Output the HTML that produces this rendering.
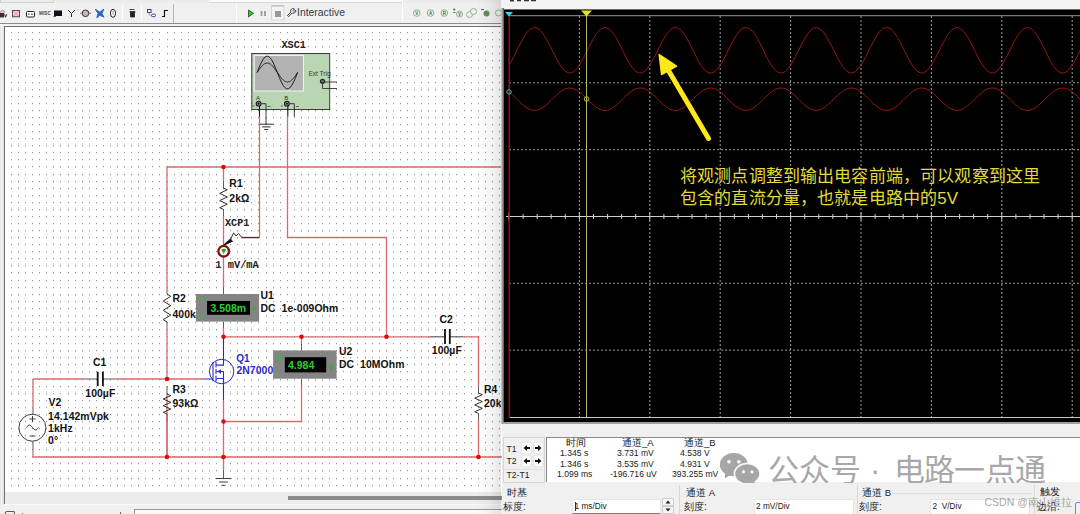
<!DOCTYPE html>
<html><head><meta charset="utf-8">
<style>
*{box-sizing:border-box}
html,body{margin:0;padding:0}
body{width:1080px;height:514px;overflow:hidden;position:relative;background:#f0f0f0;font-family:"Liberation Sans",sans-serif;color:#111}
.a{position:absolute}
.sep{position:absolute;top:5px;width:1px;height:16px;background:#c4c4c4;border-right:1px solid #fff}
.cn{font-family:"Liberation Sans",sans-serif}
.tbl{position:absolute;font-size:8.6px;color:#222;white-space:nowrap}
</style></head>
<body>
<!-- top strip -->
<div class="a" style="left:0;top:0;width:502px;height:4px;background:#ececec"></div>
<div class="a" style="left:0;top:0;width:54px;height:3px;border:1px solid #d0d0d0;border-top:none"></div>
<div class="a" style="left:209px;top:0;width:194px;height:2.5px;background:#fafafa;border-bottom:1px solid #d8d8d8;border-right:1px solid #d8d8d8"></div>
<!-- toolbar -->
<div class="a" style="left:0;top:3px;width:502px;height:20px;background:#f0f0f0"></div>
<div class="sep" style="left:122px"></div>
<div class="sep" style="left:141px"></div>
<div class="a" style="left:173px;top:4px;width:1px;height:19px;background:#b8b8b8"></div>
<div class="a" style="left:236px;top:4px;width:1px;height:19px;background:#fff"></div>
<div class="sep" style="left:402px;top:0;height:22px"></div>
<div class="a" style="left:0;top:22.5px;width:502px;height:1.2px;background:#8c8c8c"></div>
<div class="a" style="left:0;top:24px;width:502px;height:2px;background:#f4f4f4"></div>
<!-- toolbar icons -->
<svg class="a" style="left:0;top:0" width="502" height="23" viewBox="0 0 502 23">
  <path d="M0.3 12.5Q2.5 8.5 5 12.5" fill="none" stroke="#d85a5a" stroke-width="1"/><path d="M0 12.8H4.2V17.5H0Z" fill="#333"/><path d="M4.6 14.2L5.6 17.2L6.8 14.2" fill="none" stroke="#333" stroke-width="1"/>
  <rect x="12.5" y="10.5" width="7" height="6.2" fill="#f6d6de" stroke="#5a4848" stroke-width="1"/>
  <path d="M13.2 11.2L18.8 16M18.8 11.2L13.2 16" stroke="#e48a9a" stroke-width="1"/>
  <rect x="26.5" y="11.5" width="8" height="5.5" rx="1" fill="#fff" stroke="#222" stroke-width="1"/>
  <path d="M28 14.2h1.5M31 14.2h2" stroke="#222" stroke-width="0.9"/>
  <text x="39" y="15" font-size="4.6" font-weight="bold" fill="#444" font-family="Liberation Sans" letter-spacing="0.1">MISC</text>
  <rect x="54" y="10.5" width="8" height="5.5" fill="#111"/><path d="M53.5 16.5H56" stroke="#1a7060" stroke-width="1"/>
  <path d="M68 10L71.5 13.5L75 10M71.5 13.5V17" fill="none" stroke="#333" stroke-width="1"/>
  <circle cx="85.5" cy="13.3" r="3.3" fill="#bbb" stroke="#333" stroke-width="1"/><path d="M80 13.3H82.2M88.8 13.3H91" stroke="#d04040" stroke-width="0.9"/>
  <path d="M95.5 9.5L100 12.5L103.5 9.5L101.8 13.5L103.8 17L99.5 15L97 17.5L98.2 13.2Z" fill="#3566b8" stroke="#3566b8" stroke-width="1.2" stroke-linejoin="round"/>
  <ellipse cx="113" cy="13.3" rx="2.6" ry="4" fill="#fff" stroke="#222" stroke-width="1"/><path d="M113 11.5V15" stroke="#222" stroke-width="0.9" stroke-dasharray="1 1"/>
  <path d="M129.5 9.5h5M130 11.5h5v1h-5zM130.5 13h4v4h-4z" fill="#222" stroke="#222" stroke-width="0.8"/>
  <rect x="147.5" y="9.5" width="3.5" height="3" fill="#fff" stroke="#3838a0" stroke-width="1"/><rect x="151.5" y="14.2" width="4" height="2.4" rx="1" fill="#fff" stroke="#3838a0" stroke-width="1"/>
  <path d="M149 12.5V15H151.5" fill="none" stroke="#889" stroke-width="0.6"/>
  <path d="M162 16.5H164.5V10.5H168" fill="none" stroke="#111" stroke-width="1.2"/>
  <path d="M248.5 10L253.5 13.3L248.5 17Z" fill="#2ec42e" stroke="#0f4010" stroke-width="0.7"/>
  <path d="M261.5 11V16M265 11V16" stroke="#9a9a9a" stroke-width="1.8"/>
  <rect x="271.5" y="5.5" width="12.5" height="14.5" fill="#f3f3f3" stroke="#d6d6d6" stroke-width="1"/>
  <path d="M271.5 6H284" stroke="#bfbfbf" stroke-width="1.2"/>
  <rect x="275" y="11" width="6" height="6" fill="#999"/>
  <path d="M287.5 15.5L291 12L290.5 10L292.5 8.5L294.5 9L293 10.5L294 11.5L295.5 10L296 11.5L294 13.2L292.2 13L288.8 16.5Z" fill="#fff" stroke="#333" stroke-width="0.9"/>
  <text x="297" y="16" font-size="10.4" fill="#3a3a46" font-family="Liberation Sans">Interactive</text>
  <g fill="#eef3ee" stroke="#86a886" stroke-width="0.9">
    <circle cx="416.8" cy="13" r="3.3"/><circle cx="430.5" cy="13" r="3.3"/><circle cx="444.3" cy="13" r="3.3"/>
    <circle cx="459.5" cy="14" r="3"/><circle cx="469.5" cy="14.5" r="3"/><circle cx="473.5" cy="11.5" r="3"/>
    <circle cx="498.5" cy="13" r="3"/>
  </g>
  <g font-size="4.5" font-family="Liberation Sans" font-weight="bold" fill="#3f6a3f" text-anchor="middle">
    <text x="416.8" y="14.7">V</text><text x="430.5" y="14.7">A</text><text x="444.3" y="14.7">R</text><text x="459.5" y="15.7">V</text>
  </g>
  <path d="M453 9.5h2.5M454.2 8.3v2.5M453 12.5h2.5" stroke="#3a8a3a" stroke-width="0.9"/>
  <circle cx="486.5" cy="13.5" r="3" fill="#6a8a5a"/><path d="M481 9.6h3" stroke="#333" stroke-width="0.8"/>
</svg>

<!-- canvas -->
<div class="a" style="left:4px;top:26px;width:498px;height:466px;background:#fff;border-left:1.2px solid #707070;border-top:1.2px solid #707070"></div>
<div class="a" style="left:0;top:26px;width:4px;height:488px;background:#e4e4e4"></div>
<div class="a" style="left:1px;top:26px;width:1px;height:480px;background:#f8f8f8"></div>
<svg class="a" style="left:0;top:0" width="502" height="492" viewBox="0 0 502 492">
  <defs>
    <pattern id="dots" x="7.965" y="28.965" width="7.07" height="7.07" patternUnits="userSpaceOnUse">
      <rect x="2.935" y="2.935" width="1.2" height="1.2" fill="#8a8a8a"/>
    </pattern>
    <clipPath id="cv"><rect x="5.3" y="27.3" width="497" height="464.7"/></clipPath>
  </defs>
  <g clip-path="url(#cv)">
    <path d="M11 32h1v1.15h-1zm7 0h1v1.15h-1zm7 0h1v1.15h-1zm7 0h1v1.15h-1zm7 0h1v1.15h-1zm7 0h1v1.15h-1zm7 0h1v1.15h-1zm7 0h1v1.15h-1zm8 0h1v1.15h-1zm7 0h1v1.15h-1zm7 0h1v1.15h-1zm7 0h1v1.15h-1zm7 0h1v1.15h-1zm7 0h1v1.15h-1zm7 0h1v1.15h-1zm7 0h1v1.15h-1zm7 0h1v1.15h-1zm7 0h1v1.15h-1zm7 0h1v1.15h-1zm7 0h1v1.15h-1zm7 0h1v1.15h-1zm7 0h1v1.15h-1zm8 0h1v1.15h-1zm7 0h1v1.15h-1zm7 0h1v1.15h-1zm7 0h1v1.15h-1zm7 0h1v1.15h-1zm7 0h1v1.15h-1zm7 0h1v1.15h-1zm7 0h1v1.15h-1zm7 0h1v1.15h-1zm7 0h1v1.15h-1zm7 0h1v1.15h-1zm7 0h1v1.15h-1zm7 0h1v1.15h-1zm7 0h1v1.15h-1zm8 0h1v1.15h-1zm7 0h1v1.15h-1zm7 0h1v1.15h-1zm7 0h1v1.15h-1zm7 0h1v1.15h-1zm7 0h1v1.15h-1zm7 0h1v1.15h-1zm7 0h1v1.15h-1zm7 0h1v1.15h-1zm7 0h1v1.15h-1zm7 0h1v1.15h-1zm7 0h1v1.15h-1zm7 0h1v1.15h-1zm7 0h1v1.15h-1zm8 0h1v1.15h-1zm7 0h1v1.15h-1zm7 0h1v1.15h-1zm7 0h1v1.15h-1zm7 0h1v1.15h-1zm7 0h1v1.15h-1zm7 0h1v1.15h-1zm7 0h1v1.15h-1zm7 0h1v1.15h-1zm7 0h1v1.15h-1zm7 0h1v1.15h-1zm7 0h1v1.15h-1zm7 0h1v1.15h-1zm7 0h1v1.15h-1zm8 0h1v1.15h-1zm7 0h1v1.15h-1zm7 0h1v1.15h-1zm7 0h1v1.15h-1zm7 0h1v1.15h-1zm7 0h1v1.15h-1zM11 39h1v1.15h-1zm7 0h1v1.15h-1zm7 0h1v1.15h-1zm7 0h1v1.15h-1zm7 0h1v1.15h-1zm7 0h1v1.15h-1zm7 0h1v1.15h-1zm7 0h1v1.15h-1zm8 0h1v1.15h-1zm7 0h1v1.15h-1zm7 0h1v1.15h-1zm7 0h1v1.15h-1zm7 0h1v1.15h-1zm7 0h1v1.15h-1zm7 0h1v1.15h-1zm7 0h1v1.15h-1zm7 0h1v1.15h-1zm7 0h1v1.15h-1zm7 0h1v1.15h-1zm7 0h1v1.15h-1zm7 0h1v1.15h-1zm7 0h1v1.15h-1zm8 0h1v1.15h-1zm7 0h1v1.15h-1zm7 0h1v1.15h-1zm7 0h1v1.15h-1zm7 0h1v1.15h-1zm7 0h1v1.15h-1zm7 0h1v1.15h-1zm7 0h1v1.15h-1zm7 0h1v1.15h-1zm7 0h1v1.15h-1zm7 0h1v1.15h-1zm7 0h1v1.15h-1zm7 0h1v1.15h-1zm7 0h1v1.15h-1zm8 0h1v1.15h-1zm7 0h1v1.15h-1zm7 0h1v1.15h-1zm7 0h1v1.15h-1zm7 0h1v1.15h-1zm7 0h1v1.15h-1zm7 0h1v1.15h-1zm7 0h1v1.15h-1zm7 0h1v1.15h-1zm7 0h1v1.15h-1zm7 0h1v1.15h-1zm7 0h1v1.15h-1zm7 0h1v1.15h-1zm7 0h1v1.15h-1zm8 0h1v1.15h-1zm7 0h1v1.15h-1zm7 0h1v1.15h-1zm7 0h1v1.15h-1zm7 0h1v1.15h-1zm7 0h1v1.15h-1zm7 0h1v1.15h-1zm7 0h1v1.15h-1zm7 0h1v1.15h-1zm7 0h1v1.15h-1zm7 0h1v1.15h-1zm7 0h1v1.15h-1zm7 0h1v1.15h-1zm7 0h1v1.15h-1zm8 0h1v1.15h-1zm7 0h1v1.15h-1zm7 0h1v1.15h-1zm7 0h1v1.15h-1zm7 0h1v1.15h-1zm7 0h1v1.15h-1zM11 46h1v1.15h-1zm7 0h1v1.15h-1zm7 0h1v1.15h-1zm7 0h1v1.15h-1zm7 0h1v1.15h-1zm7 0h1v1.15h-1zm7 0h1v1.15h-1zm7 0h1v1.15h-1zm8 0h1v1.15h-1zm7 0h1v1.15h-1zm7 0h1v1.15h-1zm7 0h1v1.15h-1zm7 0h1v1.15h-1zm7 0h1v1.15h-1zm7 0h1v1.15h-1zm7 0h1v1.15h-1zm7 0h1v1.15h-1zm7 0h1v1.15h-1zm7 0h1v1.15h-1zm7 0h1v1.15h-1zm7 0h1v1.15h-1zm7 0h1v1.15h-1zm8 0h1v1.15h-1zm7 0h1v1.15h-1zm7 0h1v1.15h-1zm7 0h1v1.15h-1zm7 0h1v1.15h-1zm7 0h1v1.15h-1zm7 0h1v1.15h-1zm7 0h1v1.15h-1zm7 0h1v1.15h-1zm7 0h1v1.15h-1zm7 0h1v1.15h-1zm7 0h1v1.15h-1zm7 0h1v1.15h-1zm7 0h1v1.15h-1zm8 0h1v1.15h-1zm7 0h1v1.15h-1zm7 0h1v1.15h-1zm7 0h1v1.15h-1zm7 0h1v1.15h-1zm7 0h1v1.15h-1zm7 0h1v1.15h-1zm7 0h1v1.15h-1zm7 0h1v1.15h-1zm7 0h1v1.15h-1zm7 0h1v1.15h-1zm7 0h1v1.15h-1zm7 0h1v1.15h-1zm7 0h1v1.15h-1zm8 0h1v1.15h-1zm7 0h1v1.15h-1zm7 0h1v1.15h-1zm7 0h1v1.15h-1zm7 0h1v1.15h-1zm7 0h1v1.15h-1zm7 0h1v1.15h-1zm7 0h1v1.15h-1zm7 0h1v1.15h-1zm7 0h1v1.15h-1zm7 0h1v1.15h-1zm7 0h1v1.15h-1zm7 0h1v1.15h-1zm7 0h1v1.15h-1zm8 0h1v1.15h-1zm7 0h1v1.15h-1zm7 0h1v1.15h-1zm7 0h1v1.15h-1zm7 0h1v1.15h-1zm7 0h1v1.15h-1zM11 53h1v1.15h-1zm7 0h1v1.15h-1zm7 0h1v1.15h-1zm7 0h1v1.15h-1zm7 0h1v1.15h-1zm7 0h1v1.15h-1zm7 0h1v1.15h-1zm7 0h1v1.15h-1zm8 0h1v1.15h-1zm7 0h1v1.15h-1zm7 0h1v1.15h-1zm7 0h1v1.15h-1zm7 0h1v1.15h-1zm7 0h1v1.15h-1zm7 0h1v1.15h-1zm7 0h1v1.15h-1zm7 0h1v1.15h-1zm7 0h1v1.15h-1zm7 0h1v1.15h-1zm7 0h1v1.15h-1zm7 0h1v1.15h-1zm7 0h1v1.15h-1zm8 0h1v1.15h-1zm7 0h1v1.15h-1zm7 0h1v1.15h-1zm7 0h1v1.15h-1zm7 0h1v1.15h-1zm7 0h1v1.15h-1zm7 0h1v1.15h-1zm7 0h1v1.15h-1zm7 0h1v1.15h-1zm7 0h1v1.15h-1zm7 0h1v1.15h-1zm7 0h1v1.15h-1zm7 0h1v1.15h-1zm7 0h1v1.15h-1zm8 0h1v1.15h-1zm7 0h1v1.15h-1zm7 0h1v1.15h-1zm7 0h1v1.15h-1zm7 0h1v1.15h-1zm7 0h1v1.15h-1zm7 0h1v1.15h-1zm7 0h1v1.15h-1zm7 0h1v1.15h-1zm7 0h1v1.15h-1zm7 0h1v1.15h-1zm7 0h1v1.15h-1zm7 0h1v1.15h-1zm7 0h1v1.15h-1zm8 0h1v1.15h-1zm7 0h1v1.15h-1zm7 0h1v1.15h-1zm7 0h1v1.15h-1zm7 0h1v1.15h-1zm7 0h1v1.15h-1zm7 0h1v1.15h-1zm7 0h1v1.15h-1zm7 0h1v1.15h-1zm7 0h1v1.15h-1zm7 0h1v1.15h-1zm7 0h1v1.15h-1zm7 0h1v1.15h-1zm7 0h1v1.15h-1zm8 0h1v1.15h-1zm7 0h1v1.15h-1zm7 0h1v1.15h-1zm7 0h1v1.15h-1zm7 0h1v1.15h-1zm7 0h1v1.15h-1zM11 60h1v1.15h-1zm7 0h1v1.15h-1zm7 0h1v1.15h-1zm7 0h1v1.15h-1zm7 0h1v1.15h-1zm7 0h1v1.15h-1zm7 0h1v1.15h-1zm7 0h1v1.15h-1zm8 0h1v1.15h-1zm7 0h1v1.15h-1zm7 0h1v1.15h-1zm7 0h1v1.15h-1zm7 0h1v1.15h-1zm7 0h1v1.15h-1zm7 0h1v1.15h-1zm7 0h1v1.15h-1zm7 0h1v1.15h-1zm7 0h1v1.15h-1zm7 0h1v1.15h-1zm7 0h1v1.15h-1zm7 0h1v1.15h-1zm7 0h1v1.15h-1zm8 0h1v1.15h-1zm7 0h1v1.15h-1zm7 0h1v1.15h-1zm7 0h1v1.15h-1zm7 0h1v1.15h-1zm7 0h1v1.15h-1zm7 0h1v1.15h-1zm7 0h1v1.15h-1zm7 0h1v1.15h-1zm7 0h1v1.15h-1zm7 0h1v1.15h-1zm7 0h1v1.15h-1zm7 0h1v1.15h-1zm7 0h1v1.15h-1zm8 0h1v1.15h-1zm7 0h1v1.15h-1zm7 0h1v1.15h-1zm7 0h1v1.15h-1zm7 0h1v1.15h-1zm7 0h1v1.15h-1zm7 0h1v1.15h-1zm7 0h1v1.15h-1zm7 0h1v1.15h-1zm7 0h1v1.15h-1zm7 0h1v1.15h-1zm7 0h1v1.15h-1zm7 0h1v1.15h-1zm7 0h1v1.15h-1zm8 0h1v1.15h-1zm7 0h1v1.15h-1zm7 0h1v1.15h-1zm7 0h1v1.15h-1zm7 0h1v1.15h-1zm7 0h1v1.15h-1zm7 0h1v1.15h-1zm7 0h1v1.15h-1zm7 0h1v1.15h-1zm7 0h1v1.15h-1zm7 0h1v1.15h-1zm7 0h1v1.15h-1zm7 0h1v1.15h-1zm7 0h1v1.15h-1zm8 0h1v1.15h-1zm7 0h1v1.15h-1zm7 0h1v1.15h-1zm7 0h1v1.15h-1zm7 0h1v1.15h-1zm7 0h1v1.15h-1zM11 67h1v1.15h-1zm7 0h1v1.15h-1zm7 0h1v1.15h-1zm7 0h1v1.15h-1zm7 0h1v1.15h-1zm7 0h1v1.15h-1zm7 0h1v1.15h-1zm7 0h1v1.15h-1zm8 0h1v1.15h-1zm7 0h1v1.15h-1zm7 0h1v1.15h-1zm7 0h1v1.15h-1zm7 0h1v1.15h-1zm7 0h1v1.15h-1zm7 0h1v1.15h-1zm7 0h1v1.15h-1zm7 0h1v1.15h-1zm7 0h1v1.15h-1zm7 0h1v1.15h-1zm7 0h1v1.15h-1zm7 0h1v1.15h-1zm7 0h1v1.15h-1zm8 0h1v1.15h-1zm7 0h1v1.15h-1zm7 0h1v1.15h-1zm7 0h1v1.15h-1zm7 0h1v1.15h-1zm7 0h1v1.15h-1zm7 0h1v1.15h-1zm7 0h1v1.15h-1zm7 0h1v1.15h-1zm7 0h1v1.15h-1zm7 0h1v1.15h-1zm7 0h1v1.15h-1zm7 0h1v1.15h-1zm7 0h1v1.15h-1zm8 0h1v1.15h-1zm7 0h1v1.15h-1zm7 0h1v1.15h-1zm7 0h1v1.15h-1zm7 0h1v1.15h-1zm7 0h1v1.15h-1zm7 0h1v1.15h-1zm7 0h1v1.15h-1zm7 0h1v1.15h-1zm7 0h1v1.15h-1zm7 0h1v1.15h-1zm7 0h1v1.15h-1zm7 0h1v1.15h-1zm7 0h1v1.15h-1zm8 0h1v1.15h-1zm7 0h1v1.15h-1zm7 0h1v1.15h-1zm7 0h1v1.15h-1zm7 0h1v1.15h-1zm7 0h1v1.15h-1zm7 0h1v1.15h-1zm7 0h1v1.15h-1zm7 0h1v1.15h-1zm7 0h1v1.15h-1zm7 0h1v1.15h-1zm7 0h1v1.15h-1zm7 0h1v1.15h-1zm7 0h1v1.15h-1zm8 0h1v1.15h-1zm7 0h1v1.15h-1zm7 0h1v1.15h-1zm7 0h1v1.15h-1zm7 0h1v1.15h-1zm7 0h1v1.15h-1zM11 75h1v1.15h-1zm7 0h1v1.15h-1zm7 0h1v1.15h-1zm7 0h1v1.15h-1zm7 0h1v1.15h-1zm7 0h1v1.15h-1zm7 0h1v1.15h-1zm7 0h1v1.15h-1zm8 0h1v1.15h-1zm7 0h1v1.15h-1zm7 0h1v1.15h-1zm7 0h1v1.15h-1zm7 0h1v1.15h-1zm7 0h1v1.15h-1zm7 0h1v1.15h-1zm7 0h1v1.15h-1zm7 0h1v1.15h-1zm7 0h1v1.15h-1zm7 0h1v1.15h-1zm7 0h1v1.15h-1zm7 0h1v1.15h-1zm7 0h1v1.15h-1zm8 0h1v1.15h-1zm7 0h1v1.15h-1zm7 0h1v1.15h-1zm7 0h1v1.15h-1zm7 0h1v1.15h-1zm7 0h1v1.15h-1zm7 0h1v1.15h-1zm7 0h1v1.15h-1zm7 0h1v1.15h-1zm7 0h1v1.15h-1zm7 0h1v1.15h-1zm7 0h1v1.15h-1zm7 0h1v1.15h-1zm7 0h1v1.15h-1zm8 0h1v1.15h-1zm7 0h1v1.15h-1zm7 0h1v1.15h-1zm7 0h1v1.15h-1zm7 0h1v1.15h-1zm7 0h1v1.15h-1zm7 0h1v1.15h-1zm7 0h1v1.15h-1zm7 0h1v1.15h-1zm7 0h1v1.15h-1zm7 0h1v1.15h-1zm7 0h1v1.15h-1zm7 0h1v1.15h-1zm7 0h1v1.15h-1zm8 0h1v1.15h-1zm7 0h1v1.15h-1zm7 0h1v1.15h-1zm7 0h1v1.15h-1zm7 0h1v1.15h-1zm7 0h1v1.15h-1zm7 0h1v1.15h-1zm7 0h1v1.15h-1zm7 0h1v1.15h-1zm7 0h1v1.15h-1zm7 0h1v1.15h-1zm7 0h1v1.15h-1zm7 0h1v1.15h-1zm7 0h1v1.15h-1zm8 0h1v1.15h-1zm7 0h1v1.15h-1zm7 0h1v1.15h-1zm7 0h1v1.15h-1zm7 0h1v1.15h-1zm7 0h1v1.15h-1zM11 82h1v1.15h-1zm7 0h1v1.15h-1zm7 0h1v1.15h-1zm7 0h1v1.15h-1zm7 0h1v1.15h-1zm7 0h1v1.15h-1zm7 0h1v1.15h-1zm7 0h1v1.15h-1zm8 0h1v1.15h-1zm7 0h1v1.15h-1zm7 0h1v1.15h-1zm7 0h1v1.15h-1zm7 0h1v1.15h-1zm7 0h1v1.15h-1zm7 0h1v1.15h-1zm7 0h1v1.15h-1zm7 0h1v1.15h-1zm7 0h1v1.15h-1zm7 0h1v1.15h-1zm7 0h1v1.15h-1zm7 0h1v1.15h-1zm7 0h1v1.15h-1zm8 0h1v1.15h-1zm7 0h1v1.15h-1zm7 0h1v1.15h-1zm7 0h1v1.15h-1zm7 0h1v1.15h-1zm7 0h1v1.15h-1zm7 0h1v1.15h-1zm7 0h1v1.15h-1zm7 0h1v1.15h-1zm7 0h1v1.15h-1zm7 0h1v1.15h-1zm7 0h1v1.15h-1zm7 0h1v1.15h-1zm7 0h1v1.15h-1zm8 0h1v1.15h-1zm7 0h1v1.15h-1zm7 0h1v1.15h-1zm7 0h1v1.15h-1zm7 0h1v1.15h-1zm7 0h1v1.15h-1zm7 0h1v1.15h-1zm7 0h1v1.15h-1zm7 0h1v1.15h-1zm7 0h1v1.15h-1zm7 0h1v1.15h-1zm7 0h1v1.15h-1zm7 0h1v1.15h-1zm7 0h1v1.15h-1zm8 0h1v1.15h-1zm7 0h1v1.15h-1zm7 0h1v1.15h-1zm7 0h1v1.15h-1zm7 0h1v1.15h-1zm7 0h1v1.15h-1zm7 0h1v1.15h-1zm7 0h1v1.15h-1zm7 0h1v1.15h-1zm7 0h1v1.15h-1zm7 0h1v1.15h-1zm7 0h1v1.15h-1zm7 0h1v1.15h-1zm7 0h1v1.15h-1zm8 0h1v1.15h-1zm7 0h1v1.15h-1zm7 0h1v1.15h-1zm7 0h1v1.15h-1zm7 0h1v1.15h-1zm7 0h1v1.15h-1zM11 89h1v1.15h-1zm7 0h1v1.15h-1zm7 0h1v1.15h-1zm7 0h1v1.15h-1zm7 0h1v1.15h-1zm7 0h1v1.15h-1zm7 0h1v1.15h-1zm7 0h1v1.15h-1zm8 0h1v1.15h-1zm7 0h1v1.15h-1zm7 0h1v1.15h-1zm7 0h1v1.15h-1zm7 0h1v1.15h-1zm7 0h1v1.15h-1zm7 0h1v1.15h-1zm7 0h1v1.15h-1zm7 0h1v1.15h-1zm7 0h1v1.15h-1zm7 0h1v1.15h-1zm7 0h1v1.15h-1zm7 0h1v1.15h-1zm7 0h1v1.15h-1zm8 0h1v1.15h-1zm7 0h1v1.15h-1zm7 0h1v1.15h-1zm7 0h1v1.15h-1zm7 0h1v1.15h-1zm7 0h1v1.15h-1zm7 0h1v1.15h-1zm7 0h1v1.15h-1zm7 0h1v1.15h-1zm7 0h1v1.15h-1zm7 0h1v1.15h-1zm7 0h1v1.15h-1zm7 0h1v1.15h-1zm7 0h1v1.15h-1zm8 0h1v1.15h-1zm7 0h1v1.15h-1zm7 0h1v1.15h-1zm7 0h1v1.15h-1zm7 0h1v1.15h-1zm7 0h1v1.15h-1zm7 0h1v1.15h-1zm7 0h1v1.15h-1zm7 0h1v1.15h-1zm7 0h1v1.15h-1zm7 0h1v1.15h-1zm7 0h1v1.15h-1zm7 0h1v1.15h-1zm7 0h1v1.15h-1zm8 0h1v1.15h-1zm7 0h1v1.15h-1zm7 0h1v1.15h-1zm7 0h1v1.15h-1zm7 0h1v1.15h-1zm7 0h1v1.15h-1zm7 0h1v1.15h-1zm7 0h1v1.15h-1zm7 0h1v1.15h-1zm7 0h1v1.15h-1zm7 0h1v1.15h-1zm7 0h1v1.15h-1zm7 0h1v1.15h-1zm7 0h1v1.15h-1zm8 0h1v1.15h-1zm7 0h1v1.15h-1zm7 0h1v1.15h-1zm7 0h1v1.15h-1zm7 0h1v1.15h-1zm7 0h1v1.15h-1zM11 96h1v1.15h-1zm7 0h1v1.15h-1zm7 0h1v1.15h-1zm7 0h1v1.15h-1zm7 0h1v1.15h-1zm7 0h1v1.15h-1zm7 0h1v1.15h-1zm7 0h1v1.15h-1zm8 0h1v1.15h-1zm7 0h1v1.15h-1zm7 0h1v1.15h-1zm7 0h1v1.15h-1zm7 0h1v1.15h-1zm7 0h1v1.15h-1zm7 0h1v1.15h-1zm7 0h1v1.15h-1zm7 0h1v1.15h-1zm7 0h1v1.15h-1zm7 0h1v1.15h-1zm7 0h1v1.15h-1zm7 0h1v1.15h-1zm7 0h1v1.15h-1zm8 0h1v1.15h-1zm7 0h1v1.15h-1zm7 0h1v1.15h-1zm7 0h1v1.15h-1zm7 0h1v1.15h-1zm7 0h1v1.15h-1zm7 0h1v1.15h-1zm7 0h1v1.15h-1zm7 0h1v1.15h-1zm7 0h1v1.15h-1zm7 0h1v1.15h-1zm7 0h1v1.15h-1zm7 0h1v1.15h-1zm7 0h1v1.15h-1zm8 0h1v1.15h-1zm7 0h1v1.15h-1zm7 0h1v1.15h-1zm7 0h1v1.15h-1zm7 0h1v1.15h-1zm7 0h1v1.15h-1zm7 0h1v1.15h-1zm7 0h1v1.15h-1zm7 0h1v1.15h-1zm7 0h1v1.15h-1zm7 0h1v1.15h-1zm7 0h1v1.15h-1zm7 0h1v1.15h-1zm7 0h1v1.15h-1zm8 0h1v1.15h-1zm7 0h1v1.15h-1zm7 0h1v1.15h-1zm7 0h1v1.15h-1zm7 0h1v1.15h-1zm7 0h1v1.15h-1zm7 0h1v1.15h-1zm7 0h1v1.15h-1zm7 0h1v1.15h-1zm7 0h1v1.15h-1zm7 0h1v1.15h-1zm7 0h1v1.15h-1zm7 0h1v1.15h-1zm7 0h1v1.15h-1zm8 0h1v1.15h-1zm7 0h1v1.15h-1zm7 0h1v1.15h-1zm7 0h1v1.15h-1zm7 0h1v1.15h-1zm7 0h1v1.15h-1zM11 103h1v1.15h-1zm7 0h1v1.15h-1zm7 0h1v1.15h-1zm7 0h1v1.15h-1zm7 0h1v1.15h-1zm7 0h1v1.15h-1zm7 0h1v1.15h-1zm7 0h1v1.15h-1zm8 0h1v1.15h-1zm7 0h1v1.15h-1zm7 0h1v1.15h-1zm7 0h1v1.15h-1zm7 0h1v1.15h-1zm7 0h1v1.15h-1zm7 0h1v1.15h-1zm7 0h1v1.15h-1zm7 0h1v1.15h-1zm7 0h1v1.15h-1zm7 0h1v1.15h-1zm7 0h1v1.15h-1zm7 0h1v1.15h-1zm7 0h1v1.15h-1zm8 0h1v1.15h-1zm7 0h1v1.15h-1zm7 0h1v1.15h-1zm7 0h1v1.15h-1zm7 0h1v1.15h-1zm7 0h1v1.15h-1zm7 0h1v1.15h-1zm7 0h1v1.15h-1zm7 0h1v1.15h-1zm7 0h1v1.15h-1zm7 0h1v1.15h-1zm7 0h1v1.15h-1zm7 0h1v1.15h-1zm7 0h1v1.15h-1zm8 0h1v1.15h-1zm7 0h1v1.15h-1zm7 0h1v1.15h-1zm7 0h1v1.15h-1zm7 0h1v1.15h-1zm7 0h1v1.15h-1zm7 0h1v1.15h-1zm7 0h1v1.15h-1zm7 0h1v1.15h-1zm7 0h1v1.15h-1zm7 0h1v1.15h-1zm7 0h1v1.15h-1zm7 0h1v1.15h-1zm7 0h1v1.15h-1zm8 0h1v1.15h-1zm7 0h1v1.15h-1zm7 0h1v1.15h-1zm7 0h1v1.15h-1zm7 0h1v1.15h-1zm7 0h1v1.15h-1zm7 0h1v1.15h-1zm7 0h1v1.15h-1zm7 0h1v1.15h-1zm7 0h1v1.15h-1zm7 0h1v1.15h-1zm7 0h1v1.15h-1zm7 0h1v1.15h-1zm7 0h1v1.15h-1zm8 0h1v1.15h-1zm7 0h1v1.15h-1zm7 0h1v1.15h-1zm7 0h1v1.15h-1zm7 0h1v1.15h-1zm7 0h1v1.15h-1zM11 110h1v1.15h-1zm7 0h1v1.15h-1zm7 0h1v1.15h-1zm7 0h1v1.15h-1zm7 0h1v1.15h-1zm7 0h1v1.15h-1zm7 0h1v1.15h-1zm7 0h1v1.15h-1zm8 0h1v1.15h-1zm7 0h1v1.15h-1zm7 0h1v1.15h-1zm7 0h1v1.15h-1zm7 0h1v1.15h-1zm7 0h1v1.15h-1zm7 0h1v1.15h-1zm7 0h1v1.15h-1zm7 0h1v1.15h-1zm7 0h1v1.15h-1zm7 0h1v1.15h-1zm7 0h1v1.15h-1zm7 0h1v1.15h-1zm7 0h1v1.15h-1zm8 0h1v1.15h-1zm7 0h1v1.15h-1zm7 0h1v1.15h-1zm7 0h1v1.15h-1zm7 0h1v1.15h-1zm7 0h1v1.15h-1zm7 0h1v1.15h-1zm7 0h1v1.15h-1zm7 0h1v1.15h-1zm7 0h1v1.15h-1zm7 0h1v1.15h-1zm7 0h1v1.15h-1zm7 0h1v1.15h-1zm7 0h1v1.15h-1zm8 0h1v1.15h-1zm7 0h1v1.15h-1zm7 0h1v1.15h-1zm7 0h1v1.15h-1zm7 0h1v1.15h-1zm7 0h1v1.15h-1zm7 0h1v1.15h-1zm7 0h1v1.15h-1zm7 0h1v1.15h-1zm7 0h1v1.15h-1zm7 0h1v1.15h-1zm7 0h1v1.15h-1zm7 0h1v1.15h-1zm7 0h1v1.15h-1zm8 0h1v1.15h-1zm7 0h1v1.15h-1zm7 0h1v1.15h-1zm7 0h1v1.15h-1zm7 0h1v1.15h-1zm7 0h1v1.15h-1zm7 0h1v1.15h-1zm7 0h1v1.15h-1zm7 0h1v1.15h-1zm7 0h1v1.15h-1zm7 0h1v1.15h-1zm7 0h1v1.15h-1zm7 0h1v1.15h-1zm7 0h1v1.15h-1zm8 0h1v1.15h-1zm7 0h1v1.15h-1zm7 0h1v1.15h-1zm7 0h1v1.15h-1zm7 0h1v1.15h-1zm7 0h1v1.15h-1zM11 117h1v1.15h-1zm7 0h1v1.15h-1zm7 0h1v1.15h-1zm7 0h1v1.15h-1zm7 0h1v1.15h-1zm7 0h1v1.15h-1zm7 0h1v1.15h-1zm7 0h1v1.15h-1zm8 0h1v1.15h-1zm7 0h1v1.15h-1zm7 0h1v1.15h-1zm7 0h1v1.15h-1zm7 0h1v1.15h-1zm7 0h1v1.15h-1zm7 0h1v1.15h-1zm7 0h1v1.15h-1zm7 0h1v1.15h-1zm7 0h1v1.15h-1zm7 0h1v1.15h-1zm7 0h1v1.15h-1zm7 0h1v1.15h-1zm7 0h1v1.15h-1zm8 0h1v1.15h-1zm7 0h1v1.15h-1zm7 0h1v1.15h-1zm7 0h1v1.15h-1zm7 0h1v1.15h-1zm7 0h1v1.15h-1zm7 0h1v1.15h-1zm7 0h1v1.15h-1zm7 0h1v1.15h-1zm7 0h1v1.15h-1zm7 0h1v1.15h-1zm7 0h1v1.15h-1zm7 0h1v1.15h-1zm7 0h1v1.15h-1zm8 0h1v1.15h-1zm7 0h1v1.15h-1zm7 0h1v1.15h-1zm7 0h1v1.15h-1zm7 0h1v1.15h-1zm7 0h1v1.15h-1zm7 0h1v1.15h-1zm7 0h1v1.15h-1zm7 0h1v1.15h-1zm7 0h1v1.15h-1zm7 0h1v1.15h-1zm7 0h1v1.15h-1zm7 0h1v1.15h-1zm7 0h1v1.15h-1zm8 0h1v1.15h-1zm7 0h1v1.15h-1zm7 0h1v1.15h-1zm7 0h1v1.15h-1zm7 0h1v1.15h-1zm7 0h1v1.15h-1zm7 0h1v1.15h-1zm7 0h1v1.15h-1zm7 0h1v1.15h-1zm7 0h1v1.15h-1zm7 0h1v1.15h-1zm7 0h1v1.15h-1zm7 0h1v1.15h-1zm7 0h1v1.15h-1zm8 0h1v1.15h-1zm7 0h1v1.15h-1zm7 0h1v1.15h-1zm7 0h1v1.15h-1zm7 0h1v1.15h-1zm7 0h1v1.15h-1zM11 124h1v1.15h-1zm7 0h1v1.15h-1zm7 0h1v1.15h-1zm7 0h1v1.15h-1zm7 0h1v1.15h-1zm7 0h1v1.15h-1zm7 0h1v1.15h-1zm7 0h1v1.15h-1zm8 0h1v1.15h-1zm7 0h1v1.15h-1zm7 0h1v1.15h-1zm7 0h1v1.15h-1zm7 0h1v1.15h-1zm7 0h1v1.15h-1zm7 0h1v1.15h-1zm7 0h1v1.15h-1zm7 0h1v1.15h-1zm7 0h1v1.15h-1zm7 0h1v1.15h-1zm7 0h1v1.15h-1zm7 0h1v1.15h-1zm7 0h1v1.15h-1zm8 0h1v1.15h-1zm7 0h1v1.15h-1zm7 0h1v1.15h-1zm7 0h1v1.15h-1zm7 0h1v1.15h-1zm7 0h1v1.15h-1zm7 0h1v1.15h-1zm7 0h1v1.15h-1zm7 0h1v1.15h-1zm7 0h1v1.15h-1zm7 0h1v1.15h-1zm7 0h1v1.15h-1zm7 0h1v1.15h-1zm7 0h1v1.15h-1zm8 0h1v1.15h-1zm7 0h1v1.15h-1zm7 0h1v1.15h-1zm7 0h1v1.15h-1zm7 0h1v1.15h-1zm7 0h1v1.15h-1zm7 0h1v1.15h-1zm7 0h1v1.15h-1zm7 0h1v1.15h-1zm7 0h1v1.15h-1zm7 0h1v1.15h-1zm7 0h1v1.15h-1zm7 0h1v1.15h-1zm7 0h1v1.15h-1zm8 0h1v1.15h-1zm7 0h1v1.15h-1zm7 0h1v1.15h-1zm7 0h1v1.15h-1zm7 0h1v1.15h-1zm7 0h1v1.15h-1zm7 0h1v1.15h-1zm7 0h1v1.15h-1zm7 0h1v1.15h-1zm7 0h1v1.15h-1zm7 0h1v1.15h-1zm7 0h1v1.15h-1zm7 0h1v1.15h-1zm7 0h1v1.15h-1zm8 0h1v1.15h-1zm7 0h1v1.15h-1zm7 0h1v1.15h-1zm7 0h1v1.15h-1zm7 0h1v1.15h-1zm7 0h1v1.15h-1zM11 131h1v1.15h-1zm7 0h1v1.15h-1zm7 0h1v1.15h-1zm7 0h1v1.15h-1zm7 0h1v1.15h-1zm7 0h1v1.15h-1zm7 0h1v1.15h-1zm7 0h1v1.15h-1zm8 0h1v1.15h-1zm7 0h1v1.15h-1zm7 0h1v1.15h-1zm7 0h1v1.15h-1zm7 0h1v1.15h-1zm7 0h1v1.15h-1zm7 0h1v1.15h-1zm7 0h1v1.15h-1zm7 0h1v1.15h-1zm7 0h1v1.15h-1zm7 0h1v1.15h-1zm7 0h1v1.15h-1zm7 0h1v1.15h-1zm7 0h1v1.15h-1zm8 0h1v1.15h-1zm7 0h1v1.15h-1zm7 0h1v1.15h-1zm7 0h1v1.15h-1zm7 0h1v1.15h-1zm7 0h1v1.15h-1zm7 0h1v1.15h-1zm7 0h1v1.15h-1zm7 0h1v1.15h-1zm7 0h1v1.15h-1zm7 0h1v1.15h-1zm7 0h1v1.15h-1zm7 0h1v1.15h-1zm7 0h1v1.15h-1zm8 0h1v1.15h-1zm7 0h1v1.15h-1zm7 0h1v1.15h-1zm7 0h1v1.15h-1zm7 0h1v1.15h-1zm7 0h1v1.15h-1zm7 0h1v1.15h-1zm7 0h1v1.15h-1zm7 0h1v1.15h-1zm7 0h1v1.15h-1zm7 0h1v1.15h-1zm7 0h1v1.15h-1zm7 0h1v1.15h-1zm7 0h1v1.15h-1zm8 0h1v1.15h-1zm7 0h1v1.15h-1zm7 0h1v1.15h-1zm7 0h1v1.15h-1zm7 0h1v1.15h-1zm7 0h1v1.15h-1zm7 0h1v1.15h-1zm7 0h1v1.15h-1zm7 0h1v1.15h-1zm7 0h1v1.15h-1zm7 0h1v1.15h-1zm7 0h1v1.15h-1zm7 0h1v1.15h-1zm7 0h1v1.15h-1zm8 0h1v1.15h-1zm7 0h1v1.15h-1zm7 0h1v1.15h-1zm7 0h1v1.15h-1zm7 0h1v1.15h-1zm7 0h1v1.15h-1zM11 138h1v1.15h-1zm7 0h1v1.15h-1zm7 0h1v1.15h-1zm7 0h1v1.15h-1zm7 0h1v1.15h-1zm7 0h1v1.15h-1zm7 0h1v1.15h-1zm7 0h1v1.15h-1zm8 0h1v1.15h-1zm7 0h1v1.15h-1zm7 0h1v1.15h-1zm7 0h1v1.15h-1zm7 0h1v1.15h-1zm7 0h1v1.15h-1zm7 0h1v1.15h-1zm7 0h1v1.15h-1zm7 0h1v1.15h-1zm7 0h1v1.15h-1zm7 0h1v1.15h-1zm7 0h1v1.15h-1zm7 0h1v1.15h-1zm7 0h1v1.15h-1zm8 0h1v1.15h-1zm7 0h1v1.15h-1zm7 0h1v1.15h-1zm7 0h1v1.15h-1zm7 0h1v1.15h-1zm7 0h1v1.15h-1zm7 0h1v1.15h-1zm7 0h1v1.15h-1zm7 0h1v1.15h-1zm7 0h1v1.15h-1zm7 0h1v1.15h-1zm7 0h1v1.15h-1zm7 0h1v1.15h-1zm7 0h1v1.15h-1zm8 0h1v1.15h-1zm7 0h1v1.15h-1zm7 0h1v1.15h-1zm7 0h1v1.15h-1zm7 0h1v1.15h-1zm7 0h1v1.15h-1zm7 0h1v1.15h-1zm7 0h1v1.15h-1zm7 0h1v1.15h-1zm7 0h1v1.15h-1zm7 0h1v1.15h-1zm7 0h1v1.15h-1zm7 0h1v1.15h-1zm7 0h1v1.15h-1zm8 0h1v1.15h-1zm7 0h1v1.15h-1zm7 0h1v1.15h-1zm7 0h1v1.15h-1zm7 0h1v1.15h-1zm7 0h1v1.15h-1zm7 0h1v1.15h-1zm7 0h1v1.15h-1zm7 0h1v1.15h-1zm7 0h1v1.15h-1zm7 0h1v1.15h-1zm7 0h1v1.15h-1zm7 0h1v1.15h-1zm7 0h1v1.15h-1zm8 0h1v1.15h-1zm7 0h1v1.15h-1zm7 0h1v1.15h-1zm7 0h1v1.15h-1zm7 0h1v1.15h-1zm7 0h1v1.15h-1zM11 145h1v1.15h-1zm7 0h1v1.15h-1zm7 0h1v1.15h-1zm7 0h1v1.15h-1zm7 0h1v1.15h-1zm7 0h1v1.15h-1zm7 0h1v1.15h-1zm7 0h1v1.15h-1zm8 0h1v1.15h-1zm7 0h1v1.15h-1zm7 0h1v1.15h-1zm7 0h1v1.15h-1zm7 0h1v1.15h-1zm7 0h1v1.15h-1zm7 0h1v1.15h-1zm7 0h1v1.15h-1zm7 0h1v1.15h-1zm7 0h1v1.15h-1zm7 0h1v1.15h-1zm7 0h1v1.15h-1zm7 0h1v1.15h-1zm7 0h1v1.15h-1zm8 0h1v1.15h-1zm7 0h1v1.15h-1zm7 0h1v1.15h-1zm7 0h1v1.15h-1zm7 0h1v1.15h-1zm7 0h1v1.15h-1zm7 0h1v1.15h-1zm7 0h1v1.15h-1zm7 0h1v1.15h-1zm7 0h1v1.15h-1zm7 0h1v1.15h-1zm7 0h1v1.15h-1zm7 0h1v1.15h-1zm7 0h1v1.15h-1zm8 0h1v1.15h-1zm7 0h1v1.15h-1zm7 0h1v1.15h-1zm7 0h1v1.15h-1zm7 0h1v1.15h-1zm7 0h1v1.15h-1zm7 0h1v1.15h-1zm7 0h1v1.15h-1zm7 0h1v1.15h-1zm7 0h1v1.15h-1zm7 0h1v1.15h-1zm7 0h1v1.15h-1zm7 0h1v1.15h-1zm7 0h1v1.15h-1zm8 0h1v1.15h-1zm7 0h1v1.15h-1zm7 0h1v1.15h-1zm7 0h1v1.15h-1zm7 0h1v1.15h-1zm7 0h1v1.15h-1zm7 0h1v1.15h-1zm7 0h1v1.15h-1zm7 0h1v1.15h-1zm7 0h1v1.15h-1zm7 0h1v1.15h-1zm7 0h1v1.15h-1zm7 0h1v1.15h-1zm7 0h1v1.15h-1zm8 0h1v1.15h-1zm7 0h1v1.15h-1zm7 0h1v1.15h-1zm7 0h1v1.15h-1zm7 0h1v1.15h-1zm7 0h1v1.15h-1zM11 152h1v1.15h-1zm7 0h1v1.15h-1zm7 0h1v1.15h-1zm7 0h1v1.15h-1zm7 0h1v1.15h-1zm7 0h1v1.15h-1zm7 0h1v1.15h-1zm7 0h1v1.15h-1zm8 0h1v1.15h-1zm7 0h1v1.15h-1zm7 0h1v1.15h-1zm7 0h1v1.15h-1zm7 0h1v1.15h-1zm7 0h1v1.15h-1zm7 0h1v1.15h-1zm7 0h1v1.15h-1zm7 0h1v1.15h-1zm7 0h1v1.15h-1zm7 0h1v1.15h-1zm7 0h1v1.15h-1zm7 0h1v1.15h-1zm7 0h1v1.15h-1zm8 0h1v1.15h-1zm7 0h1v1.15h-1zm7 0h1v1.15h-1zm7 0h1v1.15h-1zm7 0h1v1.15h-1zm7 0h1v1.15h-1zm7 0h1v1.15h-1zm7 0h1v1.15h-1zm7 0h1v1.15h-1zm7 0h1v1.15h-1zm7 0h1v1.15h-1zm7 0h1v1.15h-1zm7 0h1v1.15h-1zm7 0h1v1.15h-1zm8 0h1v1.15h-1zm7 0h1v1.15h-1zm7 0h1v1.15h-1zm7 0h1v1.15h-1zm7 0h1v1.15h-1zm7 0h1v1.15h-1zm7 0h1v1.15h-1zm7 0h1v1.15h-1zm7 0h1v1.15h-1zm7 0h1v1.15h-1zm7 0h1v1.15h-1zm7 0h1v1.15h-1zm7 0h1v1.15h-1zm7 0h1v1.15h-1zm8 0h1v1.15h-1zm7 0h1v1.15h-1zm7 0h1v1.15h-1zm7 0h1v1.15h-1zm7 0h1v1.15h-1zm7 0h1v1.15h-1zm7 0h1v1.15h-1zm7 0h1v1.15h-1zm7 0h1v1.15h-1zm7 0h1v1.15h-1zm7 0h1v1.15h-1zm7 0h1v1.15h-1zm7 0h1v1.15h-1zm7 0h1v1.15h-1zm8 0h1v1.15h-1zm7 0h1v1.15h-1zm7 0h1v1.15h-1zm7 0h1v1.15h-1zm7 0h1v1.15h-1zm7 0h1v1.15h-1zM11 159h1v1.15h-1zm7 0h1v1.15h-1zm7 0h1v1.15h-1zm7 0h1v1.15h-1zm7 0h1v1.15h-1zm7 0h1v1.15h-1zm7 0h1v1.15h-1zm7 0h1v1.15h-1zm8 0h1v1.15h-1zm7 0h1v1.15h-1zm7 0h1v1.15h-1zm7 0h1v1.15h-1zm7 0h1v1.15h-1zm7 0h1v1.15h-1zm7 0h1v1.15h-1zm7 0h1v1.15h-1zm7 0h1v1.15h-1zm7 0h1v1.15h-1zm7 0h1v1.15h-1zm7 0h1v1.15h-1zm7 0h1v1.15h-1zm7 0h1v1.15h-1zm8 0h1v1.15h-1zm7 0h1v1.15h-1zm7 0h1v1.15h-1zm7 0h1v1.15h-1zm7 0h1v1.15h-1zm7 0h1v1.15h-1zm7 0h1v1.15h-1zm7 0h1v1.15h-1zm7 0h1v1.15h-1zm7 0h1v1.15h-1zm7 0h1v1.15h-1zm7 0h1v1.15h-1zm7 0h1v1.15h-1zm7 0h1v1.15h-1zm8 0h1v1.15h-1zm7 0h1v1.15h-1zm7 0h1v1.15h-1zm7 0h1v1.15h-1zm7 0h1v1.15h-1zm7 0h1v1.15h-1zm7 0h1v1.15h-1zm7 0h1v1.15h-1zm7 0h1v1.15h-1zm7 0h1v1.15h-1zm7 0h1v1.15h-1zm7 0h1v1.15h-1zm7 0h1v1.15h-1zm7 0h1v1.15h-1zm8 0h1v1.15h-1zm7 0h1v1.15h-1zm7 0h1v1.15h-1zm7 0h1v1.15h-1zm7 0h1v1.15h-1zm7 0h1v1.15h-1zm7 0h1v1.15h-1zm7 0h1v1.15h-1zm7 0h1v1.15h-1zm7 0h1v1.15h-1zm7 0h1v1.15h-1zm7 0h1v1.15h-1zm7 0h1v1.15h-1zm7 0h1v1.15h-1zm8 0h1v1.15h-1zm7 0h1v1.15h-1zm7 0h1v1.15h-1zm7 0h1v1.15h-1zm7 0h1v1.15h-1zm7 0h1v1.15h-1zM11 166h1v1.15h-1zm7 0h1v1.15h-1zm7 0h1v1.15h-1zm7 0h1v1.15h-1zm7 0h1v1.15h-1zm7 0h1v1.15h-1zm7 0h1v1.15h-1zm7 0h1v1.15h-1zm8 0h1v1.15h-1zm7 0h1v1.15h-1zm7 0h1v1.15h-1zm7 0h1v1.15h-1zm7 0h1v1.15h-1zm7 0h1v1.15h-1zm7 0h1v1.15h-1zm7 0h1v1.15h-1zm7 0h1v1.15h-1zm7 0h1v1.15h-1zm7 0h1v1.15h-1zm7 0h1v1.15h-1zm7 0h1v1.15h-1zm7 0h1v1.15h-1zm8 0h1v1.15h-1zm7 0h1v1.15h-1zm7 0h1v1.15h-1zm7 0h1v1.15h-1zm7 0h1v1.15h-1zm7 0h1v1.15h-1zm7 0h1v1.15h-1zm7 0h1v1.15h-1zm7 0h1v1.15h-1zm7 0h1v1.15h-1zm7 0h1v1.15h-1zm7 0h1v1.15h-1zm7 0h1v1.15h-1zm7 0h1v1.15h-1zm8 0h1v1.15h-1zm7 0h1v1.15h-1zm7 0h1v1.15h-1zm7 0h1v1.15h-1zm7 0h1v1.15h-1zm7 0h1v1.15h-1zm7 0h1v1.15h-1zm7 0h1v1.15h-1zm7 0h1v1.15h-1zm7 0h1v1.15h-1zm7 0h1v1.15h-1zm7 0h1v1.15h-1zm7 0h1v1.15h-1zm7 0h1v1.15h-1zm8 0h1v1.15h-1zm7 0h1v1.15h-1zm7 0h1v1.15h-1zm7 0h1v1.15h-1zm7 0h1v1.15h-1zm7 0h1v1.15h-1zm7 0h1v1.15h-1zm7 0h1v1.15h-1zm7 0h1v1.15h-1zm7 0h1v1.15h-1zm7 0h1v1.15h-1zm7 0h1v1.15h-1zm7 0h1v1.15h-1zm7 0h1v1.15h-1zm8 0h1v1.15h-1zm7 0h1v1.15h-1zm7 0h1v1.15h-1zm7 0h1v1.15h-1zm7 0h1v1.15h-1zm7 0h1v1.15h-1zM11 174h1v1.15h-1zm7 0h1v1.15h-1zm7 0h1v1.15h-1zm7 0h1v1.15h-1zm7 0h1v1.15h-1zm7 0h1v1.15h-1zm7 0h1v1.15h-1zm7 0h1v1.15h-1zm8 0h1v1.15h-1zm7 0h1v1.15h-1zm7 0h1v1.15h-1zm7 0h1v1.15h-1zm7 0h1v1.15h-1zm7 0h1v1.15h-1zm7 0h1v1.15h-1zm7 0h1v1.15h-1zm7 0h1v1.15h-1zm7 0h1v1.15h-1zm7 0h1v1.15h-1zm7 0h1v1.15h-1zm7 0h1v1.15h-1zm7 0h1v1.15h-1zm8 0h1v1.15h-1zm7 0h1v1.15h-1zm7 0h1v1.15h-1zm7 0h1v1.15h-1zm7 0h1v1.15h-1zm7 0h1v1.15h-1zm7 0h1v1.15h-1zm7 0h1v1.15h-1zm7 0h1v1.15h-1zm7 0h1v1.15h-1zm7 0h1v1.15h-1zm7 0h1v1.15h-1zm7 0h1v1.15h-1zm7 0h1v1.15h-1zm8 0h1v1.15h-1zm7 0h1v1.15h-1zm7 0h1v1.15h-1zm7 0h1v1.15h-1zm7 0h1v1.15h-1zm7 0h1v1.15h-1zm7 0h1v1.15h-1zm7 0h1v1.15h-1zm7 0h1v1.15h-1zm7 0h1v1.15h-1zm7 0h1v1.15h-1zm7 0h1v1.15h-1zm7 0h1v1.15h-1zm7 0h1v1.15h-1zm8 0h1v1.15h-1zm7 0h1v1.15h-1zm7 0h1v1.15h-1zm7 0h1v1.15h-1zm7 0h1v1.15h-1zm7 0h1v1.15h-1zm7 0h1v1.15h-1zm7 0h1v1.15h-1zm7 0h1v1.15h-1zm7 0h1v1.15h-1zm7 0h1v1.15h-1zm7 0h1v1.15h-1zm7 0h1v1.15h-1zm7 0h1v1.15h-1zm8 0h1v1.15h-1zm7 0h1v1.15h-1zm7 0h1v1.15h-1zm7 0h1v1.15h-1zm7 0h1v1.15h-1zm7 0h1v1.15h-1zM11 181h1v1.15h-1zm7 0h1v1.15h-1zm7 0h1v1.15h-1zm7 0h1v1.15h-1zm7 0h1v1.15h-1zm7 0h1v1.15h-1zm7 0h1v1.15h-1zm7 0h1v1.15h-1zm8 0h1v1.15h-1zm7 0h1v1.15h-1zm7 0h1v1.15h-1zm7 0h1v1.15h-1zm7 0h1v1.15h-1zm7 0h1v1.15h-1zm7 0h1v1.15h-1zm7 0h1v1.15h-1zm7 0h1v1.15h-1zm7 0h1v1.15h-1zm7 0h1v1.15h-1zm7 0h1v1.15h-1zm7 0h1v1.15h-1zm7 0h1v1.15h-1zm8 0h1v1.15h-1zm7 0h1v1.15h-1zm7 0h1v1.15h-1zm7 0h1v1.15h-1zm7 0h1v1.15h-1zm7 0h1v1.15h-1zm7 0h1v1.15h-1zm7 0h1v1.15h-1zm7 0h1v1.15h-1zm7 0h1v1.15h-1zm7 0h1v1.15h-1zm7 0h1v1.15h-1zm7 0h1v1.15h-1zm7 0h1v1.15h-1zm8 0h1v1.15h-1zm7 0h1v1.15h-1zm7 0h1v1.15h-1zm7 0h1v1.15h-1zm7 0h1v1.15h-1zm7 0h1v1.15h-1zm7 0h1v1.15h-1zm7 0h1v1.15h-1zm7 0h1v1.15h-1zm7 0h1v1.15h-1zm7 0h1v1.15h-1zm7 0h1v1.15h-1zm7 0h1v1.15h-1zm7 0h1v1.15h-1zm8 0h1v1.15h-1zm7 0h1v1.15h-1zm7 0h1v1.15h-1zm7 0h1v1.15h-1zm7 0h1v1.15h-1zm7 0h1v1.15h-1zm7 0h1v1.15h-1zm7 0h1v1.15h-1zm7 0h1v1.15h-1zm7 0h1v1.15h-1zm7 0h1v1.15h-1zm7 0h1v1.15h-1zm7 0h1v1.15h-1zm7 0h1v1.15h-1zm8 0h1v1.15h-1zm7 0h1v1.15h-1zm7 0h1v1.15h-1zm7 0h1v1.15h-1zm7 0h1v1.15h-1zm7 0h1v1.15h-1zM11 188h1v1.15h-1zm7 0h1v1.15h-1zm7 0h1v1.15h-1zm7 0h1v1.15h-1zm7 0h1v1.15h-1zm7 0h1v1.15h-1zm7 0h1v1.15h-1zm7 0h1v1.15h-1zm8 0h1v1.15h-1zm7 0h1v1.15h-1zm7 0h1v1.15h-1zm7 0h1v1.15h-1zm7 0h1v1.15h-1zm7 0h1v1.15h-1zm7 0h1v1.15h-1zm7 0h1v1.15h-1zm7 0h1v1.15h-1zm7 0h1v1.15h-1zm7 0h1v1.15h-1zm7 0h1v1.15h-1zm7 0h1v1.15h-1zm7 0h1v1.15h-1zm8 0h1v1.15h-1zm7 0h1v1.15h-1zm7 0h1v1.15h-1zm7 0h1v1.15h-1zm7 0h1v1.15h-1zm7 0h1v1.15h-1zm7 0h1v1.15h-1zm7 0h1v1.15h-1zm7 0h1v1.15h-1zm7 0h1v1.15h-1zm7 0h1v1.15h-1zm7 0h1v1.15h-1zm7 0h1v1.15h-1zm7 0h1v1.15h-1zm8 0h1v1.15h-1zm7 0h1v1.15h-1zm7 0h1v1.15h-1zm7 0h1v1.15h-1zm7 0h1v1.15h-1zm7 0h1v1.15h-1zm7 0h1v1.15h-1zm7 0h1v1.15h-1zm7 0h1v1.15h-1zm7 0h1v1.15h-1zm7 0h1v1.15h-1zm7 0h1v1.15h-1zm7 0h1v1.15h-1zm7 0h1v1.15h-1zm8 0h1v1.15h-1zm7 0h1v1.15h-1zm7 0h1v1.15h-1zm7 0h1v1.15h-1zm7 0h1v1.15h-1zm7 0h1v1.15h-1zm7 0h1v1.15h-1zm7 0h1v1.15h-1zm7 0h1v1.15h-1zm7 0h1v1.15h-1zm7 0h1v1.15h-1zm7 0h1v1.15h-1zm7 0h1v1.15h-1zm7 0h1v1.15h-1zm8 0h1v1.15h-1zm7 0h1v1.15h-1zm7 0h1v1.15h-1zm7 0h1v1.15h-1zm7 0h1v1.15h-1zm7 0h1v1.15h-1zM11 195h1v1.15h-1zm7 0h1v1.15h-1zm7 0h1v1.15h-1zm7 0h1v1.15h-1zm7 0h1v1.15h-1zm7 0h1v1.15h-1zm7 0h1v1.15h-1zm7 0h1v1.15h-1zm8 0h1v1.15h-1zm7 0h1v1.15h-1zm7 0h1v1.15h-1zm7 0h1v1.15h-1zm7 0h1v1.15h-1zm7 0h1v1.15h-1zm7 0h1v1.15h-1zm7 0h1v1.15h-1zm7 0h1v1.15h-1zm7 0h1v1.15h-1zm7 0h1v1.15h-1zm7 0h1v1.15h-1zm7 0h1v1.15h-1zm7 0h1v1.15h-1zm8 0h1v1.15h-1zm7 0h1v1.15h-1zm7 0h1v1.15h-1zm7 0h1v1.15h-1zm7 0h1v1.15h-1zm7 0h1v1.15h-1zm7 0h1v1.15h-1zm7 0h1v1.15h-1zm7 0h1v1.15h-1zm7 0h1v1.15h-1zm7 0h1v1.15h-1zm7 0h1v1.15h-1zm7 0h1v1.15h-1zm7 0h1v1.15h-1zm8 0h1v1.15h-1zm7 0h1v1.15h-1zm7 0h1v1.15h-1zm7 0h1v1.15h-1zm7 0h1v1.15h-1zm7 0h1v1.15h-1zm7 0h1v1.15h-1zm7 0h1v1.15h-1zm7 0h1v1.15h-1zm7 0h1v1.15h-1zm7 0h1v1.15h-1zm7 0h1v1.15h-1zm7 0h1v1.15h-1zm7 0h1v1.15h-1zm8 0h1v1.15h-1zm7 0h1v1.15h-1zm7 0h1v1.15h-1zm7 0h1v1.15h-1zm7 0h1v1.15h-1zm7 0h1v1.15h-1zm7 0h1v1.15h-1zm7 0h1v1.15h-1zm7 0h1v1.15h-1zm7 0h1v1.15h-1zm7 0h1v1.15h-1zm7 0h1v1.15h-1zm7 0h1v1.15h-1zm7 0h1v1.15h-1zm8 0h1v1.15h-1zm7 0h1v1.15h-1zm7 0h1v1.15h-1zm7 0h1v1.15h-1zm7 0h1v1.15h-1zm7 0h1v1.15h-1zM11 202h1v1.15h-1zm7 0h1v1.15h-1zm7 0h1v1.15h-1zm7 0h1v1.15h-1zm7 0h1v1.15h-1zm7 0h1v1.15h-1zm7 0h1v1.15h-1zm7 0h1v1.15h-1zm8 0h1v1.15h-1zm7 0h1v1.15h-1zm7 0h1v1.15h-1zm7 0h1v1.15h-1zm7 0h1v1.15h-1zm7 0h1v1.15h-1zm7 0h1v1.15h-1zm7 0h1v1.15h-1zm7 0h1v1.15h-1zm7 0h1v1.15h-1zm7 0h1v1.15h-1zm7 0h1v1.15h-1zm7 0h1v1.15h-1zm7 0h1v1.15h-1zm8 0h1v1.15h-1zm7 0h1v1.15h-1zm7 0h1v1.15h-1zm7 0h1v1.15h-1zm7 0h1v1.15h-1zm7 0h1v1.15h-1zm7 0h1v1.15h-1zm7 0h1v1.15h-1zm7 0h1v1.15h-1zm7 0h1v1.15h-1zm7 0h1v1.15h-1zm7 0h1v1.15h-1zm7 0h1v1.15h-1zm7 0h1v1.15h-1zm8 0h1v1.15h-1zm7 0h1v1.15h-1zm7 0h1v1.15h-1zm7 0h1v1.15h-1zm7 0h1v1.15h-1zm7 0h1v1.15h-1zm7 0h1v1.15h-1zm7 0h1v1.15h-1zm7 0h1v1.15h-1zm7 0h1v1.15h-1zm7 0h1v1.15h-1zm7 0h1v1.15h-1zm7 0h1v1.15h-1zm7 0h1v1.15h-1zm8 0h1v1.15h-1zm7 0h1v1.15h-1zm7 0h1v1.15h-1zm7 0h1v1.15h-1zm7 0h1v1.15h-1zm7 0h1v1.15h-1zm7 0h1v1.15h-1zm7 0h1v1.15h-1zm7 0h1v1.15h-1zm7 0h1v1.15h-1zm7 0h1v1.15h-1zm7 0h1v1.15h-1zm7 0h1v1.15h-1zm7 0h1v1.15h-1zm8 0h1v1.15h-1zm7 0h1v1.15h-1zm7 0h1v1.15h-1zm7 0h1v1.15h-1zm7 0h1v1.15h-1zm7 0h1v1.15h-1zM11 209h1v1.15h-1zm7 0h1v1.15h-1zm7 0h1v1.15h-1zm7 0h1v1.15h-1zm7 0h1v1.15h-1zm7 0h1v1.15h-1zm7 0h1v1.15h-1zm7 0h1v1.15h-1zm8 0h1v1.15h-1zm7 0h1v1.15h-1zm7 0h1v1.15h-1zm7 0h1v1.15h-1zm7 0h1v1.15h-1zm7 0h1v1.15h-1zm7 0h1v1.15h-1zm7 0h1v1.15h-1zm7 0h1v1.15h-1zm7 0h1v1.15h-1zm7 0h1v1.15h-1zm7 0h1v1.15h-1zm7 0h1v1.15h-1zm7 0h1v1.15h-1zm8 0h1v1.15h-1zm7 0h1v1.15h-1zm7 0h1v1.15h-1zm7 0h1v1.15h-1zm7 0h1v1.15h-1zm7 0h1v1.15h-1zm7 0h1v1.15h-1zm7 0h1v1.15h-1zm7 0h1v1.15h-1zm7 0h1v1.15h-1zm7 0h1v1.15h-1zm7 0h1v1.15h-1zm7 0h1v1.15h-1zm7 0h1v1.15h-1zm8 0h1v1.15h-1zm7 0h1v1.15h-1zm7 0h1v1.15h-1zm7 0h1v1.15h-1zm7 0h1v1.15h-1zm7 0h1v1.15h-1zm7 0h1v1.15h-1zm7 0h1v1.15h-1zm7 0h1v1.15h-1zm7 0h1v1.15h-1zm7 0h1v1.15h-1zm7 0h1v1.15h-1zm7 0h1v1.15h-1zm7 0h1v1.15h-1zm8 0h1v1.15h-1zm7 0h1v1.15h-1zm7 0h1v1.15h-1zm7 0h1v1.15h-1zm7 0h1v1.15h-1zm7 0h1v1.15h-1zm7 0h1v1.15h-1zm7 0h1v1.15h-1zm7 0h1v1.15h-1zm7 0h1v1.15h-1zm7 0h1v1.15h-1zm7 0h1v1.15h-1zm7 0h1v1.15h-1zm7 0h1v1.15h-1zm8 0h1v1.15h-1zm7 0h1v1.15h-1zm7 0h1v1.15h-1zm7 0h1v1.15h-1zm7 0h1v1.15h-1zm7 0h1v1.15h-1zM11 216h1v1.15h-1zm7 0h1v1.15h-1zm7 0h1v1.15h-1zm7 0h1v1.15h-1zm7 0h1v1.15h-1zm7 0h1v1.15h-1zm7 0h1v1.15h-1zm7 0h1v1.15h-1zm8 0h1v1.15h-1zm7 0h1v1.15h-1zm7 0h1v1.15h-1zm7 0h1v1.15h-1zm7 0h1v1.15h-1zm7 0h1v1.15h-1zm7 0h1v1.15h-1zm7 0h1v1.15h-1zm7 0h1v1.15h-1zm7 0h1v1.15h-1zm7 0h1v1.15h-1zm7 0h1v1.15h-1zm7 0h1v1.15h-1zm7 0h1v1.15h-1zm8 0h1v1.15h-1zm7 0h1v1.15h-1zm7 0h1v1.15h-1zm7 0h1v1.15h-1zm7 0h1v1.15h-1zm7 0h1v1.15h-1zm7 0h1v1.15h-1zm7 0h1v1.15h-1zm7 0h1v1.15h-1zm7 0h1v1.15h-1zm7 0h1v1.15h-1zm7 0h1v1.15h-1zm7 0h1v1.15h-1zm7 0h1v1.15h-1zm8 0h1v1.15h-1zm7 0h1v1.15h-1zm7 0h1v1.15h-1zm7 0h1v1.15h-1zm7 0h1v1.15h-1zm7 0h1v1.15h-1zm7 0h1v1.15h-1zm7 0h1v1.15h-1zm7 0h1v1.15h-1zm7 0h1v1.15h-1zm7 0h1v1.15h-1zm7 0h1v1.15h-1zm7 0h1v1.15h-1zm7 0h1v1.15h-1zm8 0h1v1.15h-1zm7 0h1v1.15h-1zm7 0h1v1.15h-1zm7 0h1v1.15h-1zm7 0h1v1.15h-1zm7 0h1v1.15h-1zm7 0h1v1.15h-1zm7 0h1v1.15h-1zm7 0h1v1.15h-1zm7 0h1v1.15h-1zm7 0h1v1.15h-1zm7 0h1v1.15h-1zm7 0h1v1.15h-1zm7 0h1v1.15h-1zm8 0h1v1.15h-1zm7 0h1v1.15h-1zm7 0h1v1.15h-1zm7 0h1v1.15h-1zm7 0h1v1.15h-1zm7 0h1v1.15h-1zM11 223h1v1.15h-1zm7 0h1v1.15h-1zm7 0h1v1.15h-1zm7 0h1v1.15h-1zm7 0h1v1.15h-1zm7 0h1v1.15h-1zm7 0h1v1.15h-1zm7 0h1v1.15h-1zm8 0h1v1.15h-1zm7 0h1v1.15h-1zm7 0h1v1.15h-1zm7 0h1v1.15h-1zm7 0h1v1.15h-1zm7 0h1v1.15h-1zm7 0h1v1.15h-1zm7 0h1v1.15h-1zm7 0h1v1.15h-1zm7 0h1v1.15h-1zm7 0h1v1.15h-1zm7 0h1v1.15h-1zm7 0h1v1.15h-1zm7 0h1v1.15h-1zm8 0h1v1.15h-1zm7 0h1v1.15h-1zm7 0h1v1.15h-1zm7 0h1v1.15h-1zm7 0h1v1.15h-1zm7 0h1v1.15h-1zm7 0h1v1.15h-1zm7 0h1v1.15h-1zm7 0h1v1.15h-1zm7 0h1v1.15h-1zm7 0h1v1.15h-1zm7 0h1v1.15h-1zm7 0h1v1.15h-1zm7 0h1v1.15h-1zm8 0h1v1.15h-1zm7 0h1v1.15h-1zm7 0h1v1.15h-1zm7 0h1v1.15h-1zm7 0h1v1.15h-1zm7 0h1v1.15h-1zm7 0h1v1.15h-1zm7 0h1v1.15h-1zm7 0h1v1.15h-1zm7 0h1v1.15h-1zm7 0h1v1.15h-1zm7 0h1v1.15h-1zm7 0h1v1.15h-1zm7 0h1v1.15h-1zm8 0h1v1.15h-1zm7 0h1v1.15h-1zm7 0h1v1.15h-1zm7 0h1v1.15h-1zm7 0h1v1.15h-1zm7 0h1v1.15h-1zm7 0h1v1.15h-1zm7 0h1v1.15h-1zm7 0h1v1.15h-1zm7 0h1v1.15h-1zm7 0h1v1.15h-1zm7 0h1v1.15h-1zm7 0h1v1.15h-1zm7 0h1v1.15h-1zm8 0h1v1.15h-1zm7 0h1v1.15h-1zm7 0h1v1.15h-1zm7 0h1v1.15h-1zm7 0h1v1.15h-1zm7 0h1v1.15h-1zM11 230h1v1.15h-1zm7 0h1v1.15h-1zm7 0h1v1.15h-1zm7 0h1v1.15h-1zm7 0h1v1.15h-1zm7 0h1v1.15h-1zm7 0h1v1.15h-1zm7 0h1v1.15h-1zm8 0h1v1.15h-1zm7 0h1v1.15h-1zm7 0h1v1.15h-1zm7 0h1v1.15h-1zm7 0h1v1.15h-1zm7 0h1v1.15h-1zm7 0h1v1.15h-1zm7 0h1v1.15h-1zm7 0h1v1.15h-1zm7 0h1v1.15h-1zm7 0h1v1.15h-1zm7 0h1v1.15h-1zm7 0h1v1.15h-1zm7 0h1v1.15h-1zm8 0h1v1.15h-1zm7 0h1v1.15h-1zm7 0h1v1.15h-1zm7 0h1v1.15h-1zm7 0h1v1.15h-1zm7 0h1v1.15h-1zm7 0h1v1.15h-1zm7 0h1v1.15h-1zm7 0h1v1.15h-1zm7 0h1v1.15h-1zm7 0h1v1.15h-1zm7 0h1v1.15h-1zm7 0h1v1.15h-1zm7 0h1v1.15h-1zm8 0h1v1.15h-1zm7 0h1v1.15h-1zm7 0h1v1.15h-1zm7 0h1v1.15h-1zm7 0h1v1.15h-1zm7 0h1v1.15h-1zm7 0h1v1.15h-1zm7 0h1v1.15h-1zm7 0h1v1.15h-1zm7 0h1v1.15h-1zm7 0h1v1.15h-1zm7 0h1v1.15h-1zm7 0h1v1.15h-1zm7 0h1v1.15h-1zm8 0h1v1.15h-1zm7 0h1v1.15h-1zm7 0h1v1.15h-1zm7 0h1v1.15h-1zm7 0h1v1.15h-1zm7 0h1v1.15h-1zm7 0h1v1.15h-1zm7 0h1v1.15h-1zm7 0h1v1.15h-1zm7 0h1v1.15h-1zm7 0h1v1.15h-1zm7 0h1v1.15h-1zm7 0h1v1.15h-1zm7 0h1v1.15h-1zm8 0h1v1.15h-1zm7 0h1v1.15h-1zm7 0h1v1.15h-1zm7 0h1v1.15h-1zm7 0h1v1.15h-1zm7 0h1v1.15h-1zM11 237h1v1.15h-1zm7 0h1v1.15h-1zm7 0h1v1.15h-1zm7 0h1v1.15h-1zm7 0h1v1.15h-1zm7 0h1v1.15h-1zm7 0h1v1.15h-1zm7 0h1v1.15h-1zm8 0h1v1.15h-1zm7 0h1v1.15h-1zm7 0h1v1.15h-1zm7 0h1v1.15h-1zm7 0h1v1.15h-1zm7 0h1v1.15h-1zm7 0h1v1.15h-1zm7 0h1v1.15h-1zm7 0h1v1.15h-1zm7 0h1v1.15h-1zm7 0h1v1.15h-1zm7 0h1v1.15h-1zm7 0h1v1.15h-1zm7 0h1v1.15h-1zm8 0h1v1.15h-1zm7 0h1v1.15h-1zm7 0h1v1.15h-1zm7 0h1v1.15h-1zm7 0h1v1.15h-1zm7 0h1v1.15h-1zm7 0h1v1.15h-1zm7 0h1v1.15h-1zm7 0h1v1.15h-1zm7 0h1v1.15h-1zm7 0h1v1.15h-1zm7 0h1v1.15h-1zm7 0h1v1.15h-1zm7 0h1v1.15h-1zm8 0h1v1.15h-1zm7 0h1v1.15h-1zm7 0h1v1.15h-1zm7 0h1v1.15h-1zm7 0h1v1.15h-1zm7 0h1v1.15h-1zm7 0h1v1.15h-1zm7 0h1v1.15h-1zm7 0h1v1.15h-1zm7 0h1v1.15h-1zm7 0h1v1.15h-1zm7 0h1v1.15h-1zm7 0h1v1.15h-1zm7 0h1v1.15h-1zm8 0h1v1.15h-1zm7 0h1v1.15h-1zm7 0h1v1.15h-1zm7 0h1v1.15h-1zm7 0h1v1.15h-1zm7 0h1v1.15h-1zm7 0h1v1.15h-1zm7 0h1v1.15h-1zm7 0h1v1.15h-1zm7 0h1v1.15h-1zm7 0h1v1.15h-1zm7 0h1v1.15h-1zm7 0h1v1.15h-1zm7 0h1v1.15h-1zm8 0h1v1.15h-1zm7 0h1v1.15h-1zm7 0h1v1.15h-1zm7 0h1v1.15h-1zm7 0h1v1.15h-1zm7 0h1v1.15h-1zM11 244h1v1.15h-1zm7 0h1v1.15h-1zm7 0h1v1.15h-1zm7 0h1v1.15h-1zm7 0h1v1.15h-1zm7 0h1v1.15h-1zm7 0h1v1.15h-1zm7 0h1v1.15h-1zm8 0h1v1.15h-1zm7 0h1v1.15h-1zm7 0h1v1.15h-1zm7 0h1v1.15h-1zm7 0h1v1.15h-1zm7 0h1v1.15h-1zm7 0h1v1.15h-1zm7 0h1v1.15h-1zm7 0h1v1.15h-1zm7 0h1v1.15h-1zm7 0h1v1.15h-1zm7 0h1v1.15h-1zm7 0h1v1.15h-1zm7 0h1v1.15h-1zm8 0h1v1.15h-1zm7 0h1v1.15h-1zm7 0h1v1.15h-1zm7 0h1v1.15h-1zm7 0h1v1.15h-1zm7 0h1v1.15h-1zm7 0h1v1.15h-1zm7 0h1v1.15h-1zm7 0h1v1.15h-1zm7 0h1v1.15h-1zm7 0h1v1.15h-1zm7 0h1v1.15h-1zm7 0h1v1.15h-1zm7 0h1v1.15h-1zm8 0h1v1.15h-1zm7 0h1v1.15h-1zm7 0h1v1.15h-1zm7 0h1v1.15h-1zm7 0h1v1.15h-1zm7 0h1v1.15h-1zm7 0h1v1.15h-1zm7 0h1v1.15h-1zm7 0h1v1.15h-1zm7 0h1v1.15h-1zm7 0h1v1.15h-1zm7 0h1v1.15h-1zm7 0h1v1.15h-1zm7 0h1v1.15h-1zm8 0h1v1.15h-1zm7 0h1v1.15h-1zm7 0h1v1.15h-1zm7 0h1v1.15h-1zm7 0h1v1.15h-1zm7 0h1v1.15h-1zm7 0h1v1.15h-1zm7 0h1v1.15h-1zm7 0h1v1.15h-1zm7 0h1v1.15h-1zm7 0h1v1.15h-1zm7 0h1v1.15h-1zm7 0h1v1.15h-1zm7 0h1v1.15h-1zm8 0h1v1.15h-1zm7 0h1v1.15h-1zm7 0h1v1.15h-1zm7 0h1v1.15h-1zm7 0h1v1.15h-1zm7 0h1v1.15h-1zM11 251h1v1.15h-1zm7 0h1v1.15h-1zm7 0h1v1.15h-1zm7 0h1v1.15h-1zm7 0h1v1.15h-1zm7 0h1v1.15h-1zm7 0h1v1.15h-1zm7 0h1v1.15h-1zm8 0h1v1.15h-1zm7 0h1v1.15h-1zm7 0h1v1.15h-1zm7 0h1v1.15h-1zm7 0h1v1.15h-1zm7 0h1v1.15h-1zm7 0h1v1.15h-1zm7 0h1v1.15h-1zm7 0h1v1.15h-1zm7 0h1v1.15h-1zm7 0h1v1.15h-1zm7 0h1v1.15h-1zm7 0h1v1.15h-1zm7 0h1v1.15h-1zm8 0h1v1.15h-1zm7 0h1v1.15h-1zm7 0h1v1.15h-1zm7 0h1v1.15h-1zm7 0h1v1.15h-1zm7 0h1v1.15h-1zm7 0h1v1.15h-1zm7 0h1v1.15h-1zm7 0h1v1.15h-1zm7 0h1v1.15h-1zm7 0h1v1.15h-1zm7 0h1v1.15h-1zm7 0h1v1.15h-1zm7 0h1v1.15h-1zm8 0h1v1.15h-1zm7 0h1v1.15h-1zm7 0h1v1.15h-1zm7 0h1v1.15h-1zm7 0h1v1.15h-1zm7 0h1v1.15h-1zm7 0h1v1.15h-1zm7 0h1v1.15h-1zm7 0h1v1.15h-1zm7 0h1v1.15h-1zm7 0h1v1.15h-1zm7 0h1v1.15h-1zm7 0h1v1.15h-1zm7 0h1v1.15h-1zm8 0h1v1.15h-1zm7 0h1v1.15h-1zm7 0h1v1.15h-1zm7 0h1v1.15h-1zm7 0h1v1.15h-1zm7 0h1v1.15h-1zm7 0h1v1.15h-1zm7 0h1v1.15h-1zm7 0h1v1.15h-1zm7 0h1v1.15h-1zm7 0h1v1.15h-1zm7 0h1v1.15h-1zm7 0h1v1.15h-1zm7 0h1v1.15h-1zm8 0h1v1.15h-1zm7 0h1v1.15h-1zm7 0h1v1.15h-1zm7 0h1v1.15h-1zm7 0h1v1.15h-1zm7 0h1v1.15h-1zM11 258h1v1.15h-1zm7 0h1v1.15h-1zm7 0h1v1.15h-1zm7 0h1v1.15h-1zm7 0h1v1.15h-1zm7 0h1v1.15h-1zm7 0h1v1.15h-1zm7 0h1v1.15h-1zm8 0h1v1.15h-1zm7 0h1v1.15h-1zm7 0h1v1.15h-1zm7 0h1v1.15h-1zm7 0h1v1.15h-1zm7 0h1v1.15h-1zm7 0h1v1.15h-1zm7 0h1v1.15h-1zm7 0h1v1.15h-1zm7 0h1v1.15h-1zm7 0h1v1.15h-1zm7 0h1v1.15h-1zm7 0h1v1.15h-1zm7 0h1v1.15h-1zm8 0h1v1.15h-1zm7 0h1v1.15h-1zm7 0h1v1.15h-1zm7 0h1v1.15h-1zm7 0h1v1.15h-1zm7 0h1v1.15h-1zm7 0h1v1.15h-1zm7 0h1v1.15h-1zm7 0h1v1.15h-1zm7 0h1v1.15h-1zm7 0h1v1.15h-1zm7 0h1v1.15h-1zm7 0h1v1.15h-1zm7 0h1v1.15h-1zm8 0h1v1.15h-1zm7 0h1v1.15h-1zm7 0h1v1.15h-1zm7 0h1v1.15h-1zm7 0h1v1.15h-1zm7 0h1v1.15h-1zm7 0h1v1.15h-1zm7 0h1v1.15h-1zm7 0h1v1.15h-1zm7 0h1v1.15h-1zm7 0h1v1.15h-1zm7 0h1v1.15h-1zm7 0h1v1.15h-1zm7 0h1v1.15h-1zm8 0h1v1.15h-1zm7 0h1v1.15h-1zm7 0h1v1.15h-1zm7 0h1v1.15h-1zm7 0h1v1.15h-1zm7 0h1v1.15h-1zm7 0h1v1.15h-1zm7 0h1v1.15h-1zm7 0h1v1.15h-1zm7 0h1v1.15h-1zm7 0h1v1.15h-1zm7 0h1v1.15h-1zm7 0h1v1.15h-1zm7 0h1v1.15h-1zm8 0h1v1.15h-1zm7 0h1v1.15h-1zm7 0h1v1.15h-1zm7 0h1v1.15h-1zm7 0h1v1.15h-1zm7 0h1v1.15h-1zM11 265h1v1.15h-1zm7 0h1v1.15h-1zm7 0h1v1.15h-1zm7 0h1v1.15h-1zm7 0h1v1.15h-1zm7 0h1v1.15h-1zm7 0h1v1.15h-1zm7 0h1v1.15h-1zm8 0h1v1.15h-1zm7 0h1v1.15h-1zm7 0h1v1.15h-1zm7 0h1v1.15h-1zm7 0h1v1.15h-1zm7 0h1v1.15h-1zm7 0h1v1.15h-1zm7 0h1v1.15h-1zm7 0h1v1.15h-1zm7 0h1v1.15h-1zm7 0h1v1.15h-1zm7 0h1v1.15h-1zm7 0h1v1.15h-1zm7 0h1v1.15h-1zm8 0h1v1.15h-1zm7 0h1v1.15h-1zm7 0h1v1.15h-1zm7 0h1v1.15h-1zm7 0h1v1.15h-1zm7 0h1v1.15h-1zm7 0h1v1.15h-1zm7 0h1v1.15h-1zm7 0h1v1.15h-1zm7 0h1v1.15h-1zm7 0h1v1.15h-1zm7 0h1v1.15h-1zm7 0h1v1.15h-1zm7 0h1v1.15h-1zm8 0h1v1.15h-1zm7 0h1v1.15h-1zm7 0h1v1.15h-1zm7 0h1v1.15h-1zm7 0h1v1.15h-1zm7 0h1v1.15h-1zm7 0h1v1.15h-1zm7 0h1v1.15h-1zm7 0h1v1.15h-1zm7 0h1v1.15h-1zm7 0h1v1.15h-1zm7 0h1v1.15h-1zm7 0h1v1.15h-1zm7 0h1v1.15h-1zm8 0h1v1.15h-1zm7 0h1v1.15h-1zm7 0h1v1.15h-1zm7 0h1v1.15h-1zm7 0h1v1.15h-1zm7 0h1v1.15h-1zm7 0h1v1.15h-1zm7 0h1v1.15h-1zm7 0h1v1.15h-1zm7 0h1v1.15h-1zm7 0h1v1.15h-1zm7 0h1v1.15h-1zm7 0h1v1.15h-1zm7 0h1v1.15h-1zm8 0h1v1.15h-1zm7 0h1v1.15h-1zm7 0h1v1.15h-1zm7 0h1v1.15h-1zm7 0h1v1.15h-1zm7 0h1v1.15h-1zM11 272h1v1.15h-1zm7 0h1v1.15h-1zm7 0h1v1.15h-1zm7 0h1v1.15h-1zm7 0h1v1.15h-1zm7 0h1v1.15h-1zm7 0h1v1.15h-1zm7 0h1v1.15h-1zm8 0h1v1.15h-1zm7 0h1v1.15h-1zm7 0h1v1.15h-1zm7 0h1v1.15h-1zm7 0h1v1.15h-1zm7 0h1v1.15h-1zm7 0h1v1.15h-1zm7 0h1v1.15h-1zm7 0h1v1.15h-1zm7 0h1v1.15h-1zm7 0h1v1.15h-1zm7 0h1v1.15h-1zm7 0h1v1.15h-1zm7 0h1v1.15h-1zm8 0h1v1.15h-1zm7 0h1v1.15h-1zm7 0h1v1.15h-1zm7 0h1v1.15h-1zm7 0h1v1.15h-1zm7 0h1v1.15h-1zm7 0h1v1.15h-1zm7 0h1v1.15h-1zm7 0h1v1.15h-1zm7 0h1v1.15h-1zm7 0h1v1.15h-1zm7 0h1v1.15h-1zm7 0h1v1.15h-1zm7 0h1v1.15h-1zm8 0h1v1.15h-1zm7 0h1v1.15h-1zm7 0h1v1.15h-1zm7 0h1v1.15h-1zm7 0h1v1.15h-1zm7 0h1v1.15h-1zm7 0h1v1.15h-1zm7 0h1v1.15h-1zm7 0h1v1.15h-1zm7 0h1v1.15h-1zm7 0h1v1.15h-1zm7 0h1v1.15h-1zm7 0h1v1.15h-1zm7 0h1v1.15h-1zm8 0h1v1.15h-1zm7 0h1v1.15h-1zm7 0h1v1.15h-1zm7 0h1v1.15h-1zm7 0h1v1.15h-1zm7 0h1v1.15h-1zm7 0h1v1.15h-1zm7 0h1v1.15h-1zm7 0h1v1.15h-1zm7 0h1v1.15h-1zm7 0h1v1.15h-1zm7 0h1v1.15h-1zm7 0h1v1.15h-1zm7 0h1v1.15h-1zm8 0h1v1.15h-1zm7 0h1v1.15h-1zm7 0h1v1.15h-1zm7 0h1v1.15h-1zm7 0h1v1.15h-1zm7 0h1v1.15h-1zM11 280h1v1.15h-1zm7 0h1v1.15h-1zm7 0h1v1.15h-1zm7 0h1v1.15h-1zm7 0h1v1.15h-1zm7 0h1v1.15h-1zm7 0h1v1.15h-1zm7 0h1v1.15h-1zm8 0h1v1.15h-1zm7 0h1v1.15h-1zm7 0h1v1.15h-1zm7 0h1v1.15h-1zm7 0h1v1.15h-1zm7 0h1v1.15h-1zm7 0h1v1.15h-1zm7 0h1v1.15h-1zm7 0h1v1.15h-1zm7 0h1v1.15h-1zm7 0h1v1.15h-1zm7 0h1v1.15h-1zm7 0h1v1.15h-1zm7 0h1v1.15h-1zm8 0h1v1.15h-1zm7 0h1v1.15h-1zm7 0h1v1.15h-1zm7 0h1v1.15h-1zm7 0h1v1.15h-1zm7 0h1v1.15h-1zm7 0h1v1.15h-1zm7 0h1v1.15h-1zm7 0h1v1.15h-1zm7 0h1v1.15h-1zm7 0h1v1.15h-1zm7 0h1v1.15h-1zm7 0h1v1.15h-1zm7 0h1v1.15h-1zm8 0h1v1.15h-1zm7 0h1v1.15h-1zm7 0h1v1.15h-1zm7 0h1v1.15h-1zm7 0h1v1.15h-1zm7 0h1v1.15h-1zm7 0h1v1.15h-1zm7 0h1v1.15h-1zm7 0h1v1.15h-1zm7 0h1v1.15h-1zm7 0h1v1.15h-1zm7 0h1v1.15h-1zm7 0h1v1.15h-1zm7 0h1v1.15h-1zm8 0h1v1.15h-1zm7 0h1v1.15h-1zm7 0h1v1.15h-1zm7 0h1v1.15h-1zm7 0h1v1.15h-1zm7 0h1v1.15h-1zm7 0h1v1.15h-1zm7 0h1v1.15h-1zm7 0h1v1.15h-1zm7 0h1v1.15h-1zm7 0h1v1.15h-1zm7 0h1v1.15h-1zm7 0h1v1.15h-1zm7 0h1v1.15h-1zm8 0h1v1.15h-1zm7 0h1v1.15h-1zm7 0h1v1.15h-1zm7 0h1v1.15h-1zm7 0h1v1.15h-1zm7 0h1v1.15h-1zM11 287h1v1.15h-1zm7 0h1v1.15h-1zm7 0h1v1.15h-1zm7 0h1v1.15h-1zm7 0h1v1.15h-1zm7 0h1v1.15h-1zm7 0h1v1.15h-1zm7 0h1v1.15h-1zm8 0h1v1.15h-1zm7 0h1v1.15h-1zm7 0h1v1.15h-1zm7 0h1v1.15h-1zm7 0h1v1.15h-1zm7 0h1v1.15h-1zm7 0h1v1.15h-1zm7 0h1v1.15h-1zm7 0h1v1.15h-1zm7 0h1v1.15h-1zm7 0h1v1.15h-1zm7 0h1v1.15h-1zm7 0h1v1.15h-1zm7 0h1v1.15h-1zm8 0h1v1.15h-1zm7 0h1v1.15h-1zm7 0h1v1.15h-1zm7 0h1v1.15h-1zm7 0h1v1.15h-1zm7 0h1v1.15h-1zm7 0h1v1.15h-1zm7 0h1v1.15h-1zm7 0h1v1.15h-1zm7 0h1v1.15h-1zm7 0h1v1.15h-1zm7 0h1v1.15h-1zm7 0h1v1.15h-1zm7 0h1v1.15h-1zm8 0h1v1.15h-1zm7 0h1v1.15h-1zm7 0h1v1.15h-1zm7 0h1v1.15h-1zm7 0h1v1.15h-1zm7 0h1v1.15h-1zm7 0h1v1.15h-1zm7 0h1v1.15h-1zm7 0h1v1.15h-1zm7 0h1v1.15h-1zm7 0h1v1.15h-1zm7 0h1v1.15h-1zm7 0h1v1.15h-1zm7 0h1v1.15h-1zm8 0h1v1.15h-1zm7 0h1v1.15h-1zm7 0h1v1.15h-1zm7 0h1v1.15h-1zm7 0h1v1.15h-1zm7 0h1v1.15h-1zm7 0h1v1.15h-1zm7 0h1v1.15h-1zm7 0h1v1.15h-1zm7 0h1v1.15h-1zm7 0h1v1.15h-1zm7 0h1v1.15h-1zm7 0h1v1.15h-1zm7 0h1v1.15h-1zm8 0h1v1.15h-1zm7 0h1v1.15h-1zm7 0h1v1.15h-1zm7 0h1v1.15h-1zm7 0h1v1.15h-1zm7 0h1v1.15h-1zM11 294h1v1.15h-1zm7 0h1v1.15h-1zm7 0h1v1.15h-1zm7 0h1v1.15h-1zm7 0h1v1.15h-1zm7 0h1v1.15h-1zm7 0h1v1.15h-1zm7 0h1v1.15h-1zm8 0h1v1.15h-1zm7 0h1v1.15h-1zm7 0h1v1.15h-1zm7 0h1v1.15h-1zm7 0h1v1.15h-1zm7 0h1v1.15h-1zm7 0h1v1.15h-1zm7 0h1v1.15h-1zm7 0h1v1.15h-1zm7 0h1v1.15h-1zm7 0h1v1.15h-1zm7 0h1v1.15h-1zm7 0h1v1.15h-1zm7 0h1v1.15h-1zm8 0h1v1.15h-1zm7 0h1v1.15h-1zm7 0h1v1.15h-1zm7 0h1v1.15h-1zm7 0h1v1.15h-1zm7 0h1v1.15h-1zm7 0h1v1.15h-1zm7 0h1v1.15h-1zm7 0h1v1.15h-1zm7 0h1v1.15h-1zm7 0h1v1.15h-1zm7 0h1v1.15h-1zm7 0h1v1.15h-1zm7 0h1v1.15h-1zm8 0h1v1.15h-1zm7 0h1v1.15h-1zm7 0h1v1.15h-1zm7 0h1v1.15h-1zm7 0h1v1.15h-1zm7 0h1v1.15h-1zm7 0h1v1.15h-1zm7 0h1v1.15h-1zm7 0h1v1.15h-1zm7 0h1v1.15h-1zm7 0h1v1.15h-1zm7 0h1v1.15h-1zm7 0h1v1.15h-1zm7 0h1v1.15h-1zm8 0h1v1.15h-1zm7 0h1v1.15h-1zm7 0h1v1.15h-1zm7 0h1v1.15h-1zm7 0h1v1.15h-1zm7 0h1v1.15h-1zm7 0h1v1.15h-1zm7 0h1v1.15h-1zm7 0h1v1.15h-1zm7 0h1v1.15h-1zm7 0h1v1.15h-1zm7 0h1v1.15h-1zm7 0h1v1.15h-1zm7 0h1v1.15h-1zm8 0h1v1.15h-1zm7 0h1v1.15h-1zm7 0h1v1.15h-1zm7 0h1v1.15h-1zm7 0h1v1.15h-1zm7 0h1v1.15h-1zM11 301h1v1.15h-1zm7 0h1v1.15h-1zm7 0h1v1.15h-1zm7 0h1v1.15h-1zm7 0h1v1.15h-1zm7 0h1v1.15h-1zm7 0h1v1.15h-1zm7 0h1v1.15h-1zm8 0h1v1.15h-1zm7 0h1v1.15h-1zm7 0h1v1.15h-1zm7 0h1v1.15h-1zm7 0h1v1.15h-1zm7 0h1v1.15h-1zm7 0h1v1.15h-1zm7 0h1v1.15h-1zm7 0h1v1.15h-1zm7 0h1v1.15h-1zm7 0h1v1.15h-1zm7 0h1v1.15h-1zm7 0h1v1.15h-1zm7 0h1v1.15h-1zm8 0h1v1.15h-1zm7 0h1v1.15h-1zm7 0h1v1.15h-1zm7 0h1v1.15h-1zm7 0h1v1.15h-1zm7 0h1v1.15h-1zm7 0h1v1.15h-1zm7 0h1v1.15h-1zm7 0h1v1.15h-1zm7 0h1v1.15h-1zm7 0h1v1.15h-1zm7 0h1v1.15h-1zm7 0h1v1.15h-1zm7 0h1v1.15h-1zm8 0h1v1.15h-1zm7 0h1v1.15h-1zm7 0h1v1.15h-1zm7 0h1v1.15h-1zm7 0h1v1.15h-1zm7 0h1v1.15h-1zm7 0h1v1.15h-1zm7 0h1v1.15h-1zm7 0h1v1.15h-1zm7 0h1v1.15h-1zm7 0h1v1.15h-1zm7 0h1v1.15h-1zm7 0h1v1.15h-1zm7 0h1v1.15h-1zm8 0h1v1.15h-1zm7 0h1v1.15h-1zm7 0h1v1.15h-1zm7 0h1v1.15h-1zm7 0h1v1.15h-1zm7 0h1v1.15h-1zm7 0h1v1.15h-1zm7 0h1v1.15h-1zm7 0h1v1.15h-1zm7 0h1v1.15h-1zm7 0h1v1.15h-1zm7 0h1v1.15h-1zm7 0h1v1.15h-1zm7 0h1v1.15h-1zm8 0h1v1.15h-1zm7 0h1v1.15h-1zm7 0h1v1.15h-1zm7 0h1v1.15h-1zm7 0h1v1.15h-1zm7 0h1v1.15h-1zM11 308h1v1.15h-1zm7 0h1v1.15h-1zm7 0h1v1.15h-1zm7 0h1v1.15h-1zm7 0h1v1.15h-1zm7 0h1v1.15h-1zm7 0h1v1.15h-1zm7 0h1v1.15h-1zm8 0h1v1.15h-1zm7 0h1v1.15h-1zm7 0h1v1.15h-1zm7 0h1v1.15h-1zm7 0h1v1.15h-1zm7 0h1v1.15h-1zm7 0h1v1.15h-1zm7 0h1v1.15h-1zm7 0h1v1.15h-1zm7 0h1v1.15h-1zm7 0h1v1.15h-1zm7 0h1v1.15h-1zm7 0h1v1.15h-1zm7 0h1v1.15h-1zm8 0h1v1.15h-1zm7 0h1v1.15h-1zm7 0h1v1.15h-1zm7 0h1v1.15h-1zm7 0h1v1.15h-1zm7 0h1v1.15h-1zm7 0h1v1.15h-1zm7 0h1v1.15h-1zm7 0h1v1.15h-1zm7 0h1v1.15h-1zm7 0h1v1.15h-1zm7 0h1v1.15h-1zm7 0h1v1.15h-1zm7 0h1v1.15h-1zm8 0h1v1.15h-1zm7 0h1v1.15h-1zm7 0h1v1.15h-1zm7 0h1v1.15h-1zm7 0h1v1.15h-1zm7 0h1v1.15h-1zm7 0h1v1.15h-1zm7 0h1v1.15h-1zm7 0h1v1.15h-1zm7 0h1v1.15h-1zm7 0h1v1.15h-1zm7 0h1v1.15h-1zm7 0h1v1.15h-1zm7 0h1v1.15h-1zm8 0h1v1.15h-1zm7 0h1v1.15h-1zm7 0h1v1.15h-1zm7 0h1v1.15h-1zm7 0h1v1.15h-1zm7 0h1v1.15h-1zm7 0h1v1.15h-1zm7 0h1v1.15h-1zm7 0h1v1.15h-1zm7 0h1v1.15h-1zm7 0h1v1.15h-1zm7 0h1v1.15h-1zm7 0h1v1.15h-1zm7 0h1v1.15h-1zm8 0h1v1.15h-1zm7 0h1v1.15h-1zm7 0h1v1.15h-1zm7 0h1v1.15h-1zm7 0h1v1.15h-1zm7 0h1v1.15h-1zM11 315h1v1.15h-1zm7 0h1v1.15h-1zm7 0h1v1.15h-1zm7 0h1v1.15h-1zm7 0h1v1.15h-1zm7 0h1v1.15h-1zm7 0h1v1.15h-1zm7 0h1v1.15h-1zm8 0h1v1.15h-1zm7 0h1v1.15h-1zm7 0h1v1.15h-1zm7 0h1v1.15h-1zm7 0h1v1.15h-1zm7 0h1v1.15h-1zm7 0h1v1.15h-1zm7 0h1v1.15h-1zm7 0h1v1.15h-1zm7 0h1v1.15h-1zm7 0h1v1.15h-1zm7 0h1v1.15h-1zm7 0h1v1.15h-1zm7 0h1v1.15h-1zm8 0h1v1.15h-1zm7 0h1v1.15h-1zm7 0h1v1.15h-1zm7 0h1v1.15h-1zm7 0h1v1.15h-1zm7 0h1v1.15h-1zm7 0h1v1.15h-1zm7 0h1v1.15h-1zm7 0h1v1.15h-1zm7 0h1v1.15h-1zm7 0h1v1.15h-1zm7 0h1v1.15h-1zm7 0h1v1.15h-1zm7 0h1v1.15h-1zm8 0h1v1.15h-1zm7 0h1v1.15h-1zm7 0h1v1.15h-1zm7 0h1v1.15h-1zm7 0h1v1.15h-1zm7 0h1v1.15h-1zm7 0h1v1.15h-1zm7 0h1v1.15h-1zm7 0h1v1.15h-1zm7 0h1v1.15h-1zm7 0h1v1.15h-1zm7 0h1v1.15h-1zm7 0h1v1.15h-1zm7 0h1v1.15h-1zm8 0h1v1.15h-1zm7 0h1v1.15h-1zm7 0h1v1.15h-1zm7 0h1v1.15h-1zm7 0h1v1.15h-1zm7 0h1v1.15h-1zm7 0h1v1.15h-1zm7 0h1v1.15h-1zm7 0h1v1.15h-1zm7 0h1v1.15h-1zm7 0h1v1.15h-1zm7 0h1v1.15h-1zm7 0h1v1.15h-1zm7 0h1v1.15h-1zm8 0h1v1.15h-1zm7 0h1v1.15h-1zm7 0h1v1.15h-1zm7 0h1v1.15h-1zm7 0h1v1.15h-1zm7 0h1v1.15h-1zM11 322h1v1.15h-1zm7 0h1v1.15h-1zm7 0h1v1.15h-1zm7 0h1v1.15h-1zm7 0h1v1.15h-1zm7 0h1v1.15h-1zm7 0h1v1.15h-1zm7 0h1v1.15h-1zm8 0h1v1.15h-1zm7 0h1v1.15h-1zm7 0h1v1.15h-1zm7 0h1v1.15h-1zm7 0h1v1.15h-1zm7 0h1v1.15h-1zm7 0h1v1.15h-1zm7 0h1v1.15h-1zm7 0h1v1.15h-1zm7 0h1v1.15h-1zm7 0h1v1.15h-1zm7 0h1v1.15h-1zm7 0h1v1.15h-1zm7 0h1v1.15h-1zm8 0h1v1.15h-1zm7 0h1v1.15h-1zm7 0h1v1.15h-1zm7 0h1v1.15h-1zm7 0h1v1.15h-1zm7 0h1v1.15h-1zm7 0h1v1.15h-1zm7 0h1v1.15h-1zm7 0h1v1.15h-1zm7 0h1v1.15h-1zm7 0h1v1.15h-1zm7 0h1v1.15h-1zm7 0h1v1.15h-1zm7 0h1v1.15h-1zm8 0h1v1.15h-1zm7 0h1v1.15h-1zm7 0h1v1.15h-1zm7 0h1v1.15h-1zm7 0h1v1.15h-1zm7 0h1v1.15h-1zm7 0h1v1.15h-1zm7 0h1v1.15h-1zm7 0h1v1.15h-1zm7 0h1v1.15h-1zm7 0h1v1.15h-1zm7 0h1v1.15h-1zm7 0h1v1.15h-1zm7 0h1v1.15h-1zm8 0h1v1.15h-1zm7 0h1v1.15h-1zm7 0h1v1.15h-1zm7 0h1v1.15h-1zm7 0h1v1.15h-1zm7 0h1v1.15h-1zm7 0h1v1.15h-1zm7 0h1v1.15h-1zm7 0h1v1.15h-1zm7 0h1v1.15h-1zm7 0h1v1.15h-1zm7 0h1v1.15h-1zm7 0h1v1.15h-1zm7 0h1v1.15h-1zm8 0h1v1.15h-1zm7 0h1v1.15h-1zm7 0h1v1.15h-1zm7 0h1v1.15h-1zm7 0h1v1.15h-1zm7 0h1v1.15h-1zM11 329h1v1.15h-1zm7 0h1v1.15h-1zm7 0h1v1.15h-1zm7 0h1v1.15h-1zm7 0h1v1.15h-1zm7 0h1v1.15h-1zm7 0h1v1.15h-1zm7 0h1v1.15h-1zm8 0h1v1.15h-1zm7 0h1v1.15h-1zm7 0h1v1.15h-1zm7 0h1v1.15h-1zm7 0h1v1.15h-1zm7 0h1v1.15h-1zm7 0h1v1.15h-1zm7 0h1v1.15h-1zm7 0h1v1.15h-1zm7 0h1v1.15h-1zm7 0h1v1.15h-1zm7 0h1v1.15h-1zm7 0h1v1.15h-1zm7 0h1v1.15h-1zm8 0h1v1.15h-1zm7 0h1v1.15h-1zm7 0h1v1.15h-1zm7 0h1v1.15h-1zm7 0h1v1.15h-1zm7 0h1v1.15h-1zm7 0h1v1.15h-1zm7 0h1v1.15h-1zm7 0h1v1.15h-1zm7 0h1v1.15h-1zm7 0h1v1.15h-1zm7 0h1v1.15h-1zm7 0h1v1.15h-1zm7 0h1v1.15h-1zm8 0h1v1.15h-1zm7 0h1v1.15h-1zm7 0h1v1.15h-1zm7 0h1v1.15h-1zm7 0h1v1.15h-1zm7 0h1v1.15h-1zm7 0h1v1.15h-1zm7 0h1v1.15h-1zm7 0h1v1.15h-1zm7 0h1v1.15h-1zm7 0h1v1.15h-1zm7 0h1v1.15h-1zm7 0h1v1.15h-1zm7 0h1v1.15h-1zm8 0h1v1.15h-1zm7 0h1v1.15h-1zm7 0h1v1.15h-1zm7 0h1v1.15h-1zm7 0h1v1.15h-1zm7 0h1v1.15h-1zm7 0h1v1.15h-1zm7 0h1v1.15h-1zm7 0h1v1.15h-1zm7 0h1v1.15h-1zm7 0h1v1.15h-1zm7 0h1v1.15h-1zm7 0h1v1.15h-1zm7 0h1v1.15h-1zm8 0h1v1.15h-1zm7 0h1v1.15h-1zm7 0h1v1.15h-1zm7 0h1v1.15h-1zm7 0h1v1.15h-1zm7 0h1v1.15h-1zM11 336h1v1.15h-1zm7 0h1v1.15h-1zm7 0h1v1.15h-1zm7 0h1v1.15h-1zm7 0h1v1.15h-1zm7 0h1v1.15h-1zm7 0h1v1.15h-1zm7 0h1v1.15h-1zm8 0h1v1.15h-1zm7 0h1v1.15h-1zm7 0h1v1.15h-1zm7 0h1v1.15h-1zm7 0h1v1.15h-1zm7 0h1v1.15h-1zm7 0h1v1.15h-1zm7 0h1v1.15h-1zm7 0h1v1.15h-1zm7 0h1v1.15h-1zm7 0h1v1.15h-1zm7 0h1v1.15h-1zm7 0h1v1.15h-1zm7 0h1v1.15h-1zm8 0h1v1.15h-1zm7 0h1v1.15h-1zm7 0h1v1.15h-1zm7 0h1v1.15h-1zm7 0h1v1.15h-1zm7 0h1v1.15h-1zm7 0h1v1.15h-1zm7 0h1v1.15h-1zm7 0h1v1.15h-1zm7 0h1v1.15h-1zm7 0h1v1.15h-1zm7 0h1v1.15h-1zm7 0h1v1.15h-1zm7 0h1v1.15h-1zm8 0h1v1.15h-1zm7 0h1v1.15h-1zm7 0h1v1.15h-1zm7 0h1v1.15h-1zm7 0h1v1.15h-1zm7 0h1v1.15h-1zm7 0h1v1.15h-1zm7 0h1v1.15h-1zm7 0h1v1.15h-1zm7 0h1v1.15h-1zm7 0h1v1.15h-1zm7 0h1v1.15h-1zm7 0h1v1.15h-1zm7 0h1v1.15h-1zm8 0h1v1.15h-1zm7 0h1v1.15h-1zm7 0h1v1.15h-1zm7 0h1v1.15h-1zm7 0h1v1.15h-1zm7 0h1v1.15h-1zm7 0h1v1.15h-1zm7 0h1v1.15h-1zm7 0h1v1.15h-1zm7 0h1v1.15h-1zm7 0h1v1.15h-1zm7 0h1v1.15h-1zm7 0h1v1.15h-1zm7 0h1v1.15h-1zm8 0h1v1.15h-1zm7 0h1v1.15h-1zm7 0h1v1.15h-1zm7 0h1v1.15h-1zm7 0h1v1.15h-1zm7 0h1v1.15h-1zM11 343h1v1.15h-1zm7 0h1v1.15h-1zm7 0h1v1.15h-1zm7 0h1v1.15h-1zm7 0h1v1.15h-1zm7 0h1v1.15h-1zm7 0h1v1.15h-1zm7 0h1v1.15h-1zm8 0h1v1.15h-1zm7 0h1v1.15h-1zm7 0h1v1.15h-1zm7 0h1v1.15h-1zm7 0h1v1.15h-1zm7 0h1v1.15h-1zm7 0h1v1.15h-1zm7 0h1v1.15h-1zm7 0h1v1.15h-1zm7 0h1v1.15h-1zm7 0h1v1.15h-1zm7 0h1v1.15h-1zm7 0h1v1.15h-1zm7 0h1v1.15h-1zm8 0h1v1.15h-1zm7 0h1v1.15h-1zm7 0h1v1.15h-1zm7 0h1v1.15h-1zm7 0h1v1.15h-1zm7 0h1v1.15h-1zm7 0h1v1.15h-1zm7 0h1v1.15h-1zm7 0h1v1.15h-1zm7 0h1v1.15h-1zm7 0h1v1.15h-1zm7 0h1v1.15h-1zm7 0h1v1.15h-1zm7 0h1v1.15h-1zm8 0h1v1.15h-1zm7 0h1v1.15h-1zm7 0h1v1.15h-1zm7 0h1v1.15h-1zm7 0h1v1.15h-1zm7 0h1v1.15h-1zm7 0h1v1.15h-1zm7 0h1v1.15h-1zm7 0h1v1.15h-1zm7 0h1v1.15h-1zm7 0h1v1.15h-1zm7 0h1v1.15h-1zm7 0h1v1.15h-1zm7 0h1v1.15h-1zm8 0h1v1.15h-1zm7 0h1v1.15h-1zm7 0h1v1.15h-1zm7 0h1v1.15h-1zm7 0h1v1.15h-1zm7 0h1v1.15h-1zm7 0h1v1.15h-1zm7 0h1v1.15h-1zm7 0h1v1.15h-1zm7 0h1v1.15h-1zm7 0h1v1.15h-1zm7 0h1v1.15h-1zm7 0h1v1.15h-1zm7 0h1v1.15h-1zm8 0h1v1.15h-1zm7 0h1v1.15h-1zm7 0h1v1.15h-1zm7 0h1v1.15h-1zm7 0h1v1.15h-1zm7 0h1v1.15h-1zM11 350h1v1.15h-1zm7 0h1v1.15h-1zm7 0h1v1.15h-1zm7 0h1v1.15h-1zm7 0h1v1.15h-1zm7 0h1v1.15h-1zm7 0h1v1.15h-1zm7 0h1v1.15h-1zm8 0h1v1.15h-1zm7 0h1v1.15h-1zm7 0h1v1.15h-1zm7 0h1v1.15h-1zm7 0h1v1.15h-1zm7 0h1v1.15h-1zm7 0h1v1.15h-1zm7 0h1v1.15h-1zm7 0h1v1.15h-1zm7 0h1v1.15h-1zm7 0h1v1.15h-1zm7 0h1v1.15h-1zm7 0h1v1.15h-1zm7 0h1v1.15h-1zm8 0h1v1.15h-1zm7 0h1v1.15h-1zm7 0h1v1.15h-1zm7 0h1v1.15h-1zm7 0h1v1.15h-1zm7 0h1v1.15h-1zm7 0h1v1.15h-1zm7 0h1v1.15h-1zm7 0h1v1.15h-1zm7 0h1v1.15h-1zm7 0h1v1.15h-1zm7 0h1v1.15h-1zm7 0h1v1.15h-1zm7 0h1v1.15h-1zm8 0h1v1.15h-1zm7 0h1v1.15h-1zm7 0h1v1.15h-1zm7 0h1v1.15h-1zm7 0h1v1.15h-1zm7 0h1v1.15h-1zm7 0h1v1.15h-1zm7 0h1v1.15h-1zm7 0h1v1.15h-1zm7 0h1v1.15h-1zm7 0h1v1.15h-1zm7 0h1v1.15h-1zm7 0h1v1.15h-1zm7 0h1v1.15h-1zm8 0h1v1.15h-1zm7 0h1v1.15h-1zm7 0h1v1.15h-1zm7 0h1v1.15h-1zm7 0h1v1.15h-1zm7 0h1v1.15h-1zm7 0h1v1.15h-1zm7 0h1v1.15h-1zm7 0h1v1.15h-1zm7 0h1v1.15h-1zm7 0h1v1.15h-1zm7 0h1v1.15h-1zm7 0h1v1.15h-1zm7 0h1v1.15h-1zm8 0h1v1.15h-1zm7 0h1v1.15h-1zm7 0h1v1.15h-1zm7 0h1v1.15h-1zm7 0h1v1.15h-1zm7 0h1v1.15h-1zM11 357h1v1.15h-1zm7 0h1v1.15h-1zm7 0h1v1.15h-1zm7 0h1v1.15h-1zm7 0h1v1.15h-1zm7 0h1v1.15h-1zm7 0h1v1.15h-1zm7 0h1v1.15h-1zm8 0h1v1.15h-1zm7 0h1v1.15h-1zm7 0h1v1.15h-1zm7 0h1v1.15h-1zm7 0h1v1.15h-1zm7 0h1v1.15h-1zm7 0h1v1.15h-1zm7 0h1v1.15h-1zm7 0h1v1.15h-1zm7 0h1v1.15h-1zm7 0h1v1.15h-1zm7 0h1v1.15h-1zm7 0h1v1.15h-1zm7 0h1v1.15h-1zm8 0h1v1.15h-1zm7 0h1v1.15h-1zm7 0h1v1.15h-1zm7 0h1v1.15h-1zm7 0h1v1.15h-1zm7 0h1v1.15h-1zm7 0h1v1.15h-1zm7 0h1v1.15h-1zm7 0h1v1.15h-1zm7 0h1v1.15h-1zm7 0h1v1.15h-1zm7 0h1v1.15h-1zm7 0h1v1.15h-1zm7 0h1v1.15h-1zm8 0h1v1.15h-1zm7 0h1v1.15h-1zm7 0h1v1.15h-1zm7 0h1v1.15h-1zm7 0h1v1.15h-1zm7 0h1v1.15h-1zm7 0h1v1.15h-1zm7 0h1v1.15h-1zm7 0h1v1.15h-1zm7 0h1v1.15h-1zm7 0h1v1.15h-1zm7 0h1v1.15h-1zm7 0h1v1.15h-1zm7 0h1v1.15h-1zm8 0h1v1.15h-1zm7 0h1v1.15h-1zm7 0h1v1.15h-1zm7 0h1v1.15h-1zm7 0h1v1.15h-1zm7 0h1v1.15h-1zm7 0h1v1.15h-1zm7 0h1v1.15h-1zm7 0h1v1.15h-1zm7 0h1v1.15h-1zm7 0h1v1.15h-1zm7 0h1v1.15h-1zm7 0h1v1.15h-1zm7 0h1v1.15h-1zm8 0h1v1.15h-1zm7 0h1v1.15h-1zm7 0h1v1.15h-1zm7 0h1v1.15h-1zm7 0h1v1.15h-1zm7 0h1v1.15h-1zM11 364h1v1.15h-1zm7 0h1v1.15h-1zm7 0h1v1.15h-1zm7 0h1v1.15h-1zm7 0h1v1.15h-1zm7 0h1v1.15h-1zm7 0h1v1.15h-1zm7 0h1v1.15h-1zm8 0h1v1.15h-1zm7 0h1v1.15h-1zm7 0h1v1.15h-1zm7 0h1v1.15h-1zm7 0h1v1.15h-1zm7 0h1v1.15h-1zm7 0h1v1.15h-1zm7 0h1v1.15h-1zm7 0h1v1.15h-1zm7 0h1v1.15h-1zm7 0h1v1.15h-1zm7 0h1v1.15h-1zm7 0h1v1.15h-1zm7 0h1v1.15h-1zm8 0h1v1.15h-1zm7 0h1v1.15h-1zm7 0h1v1.15h-1zm7 0h1v1.15h-1zm7 0h1v1.15h-1zm7 0h1v1.15h-1zm7 0h1v1.15h-1zm7 0h1v1.15h-1zm7 0h1v1.15h-1zm7 0h1v1.15h-1zm7 0h1v1.15h-1zm7 0h1v1.15h-1zm7 0h1v1.15h-1zm7 0h1v1.15h-1zm8 0h1v1.15h-1zm7 0h1v1.15h-1zm7 0h1v1.15h-1zm7 0h1v1.15h-1zm7 0h1v1.15h-1zm7 0h1v1.15h-1zm7 0h1v1.15h-1zm7 0h1v1.15h-1zm7 0h1v1.15h-1zm7 0h1v1.15h-1zm7 0h1v1.15h-1zm7 0h1v1.15h-1zm7 0h1v1.15h-1zm7 0h1v1.15h-1zm8 0h1v1.15h-1zm7 0h1v1.15h-1zm7 0h1v1.15h-1zm7 0h1v1.15h-1zm7 0h1v1.15h-1zm7 0h1v1.15h-1zm7 0h1v1.15h-1zm7 0h1v1.15h-1zm7 0h1v1.15h-1zm7 0h1v1.15h-1zm7 0h1v1.15h-1zm7 0h1v1.15h-1zm7 0h1v1.15h-1zm7 0h1v1.15h-1zm8 0h1v1.15h-1zm7 0h1v1.15h-1zm7 0h1v1.15h-1zm7 0h1v1.15h-1zm7 0h1v1.15h-1zm7 0h1v1.15h-1zM11 371h1v1.15h-1zm7 0h1v1.15h-1zm7 0h1v1.15h-1zm7 0h1v1.15h-1zm7 0h1v1.15h-1zm7 0h1v1.15h-1zm7 0h1v1.15h-1zm7 0h1v1.15h-1zm8 0h1v1.15h-1zm7 0h1v1.15h-1zm7 0h1v1.15h-1zm7 0h1v1.15h-1zm7 0h1v1.15h-1zm7 0h1v1.15h-1zm7 0h1v1.15h-1zm7 0h1v1.15h-1zm7 0h1v1.15h-1zm7 0h1v1.15h-1zm7 0h1v1.15h-1zm7 0h1v1.15h-1zm7 0h1v1.15h-1zm7 0h1v1.15h-1zm8 0h1v1.15h-1zm7 0h1v1.15h-1zm7 0h1v1.15h-1zm7 0h1v1.15h-1zm7 0h1v1.15h-1zm7 0h1v1.15h-1zm7 0h1v1.15h-1zm7 0h1v1.15h-1zm7 0h1v1.15h-1zm7 0h1v1.15h-1zm7 0h1v1.15h-1zm7 0h1v1.15h-1zm7 0h1v1.15h-1zm7 0h1v1.15h-1zm8 0h1v1.15h-1zm7 0h1v1.15h-1zm7 0h1v1.15h-1zm7 0h1v1.15h-1zm7 0h1v1.15h-1zm7 0h1v1.15h-1zm7 0h1v1.15h-1zm7 0h1v1.15h-1zm7 0h1v1.15h-1zm7 0h1v1.15h-1zm7 0h1v1.15h-1zm7 0h1v1.15h-1zm7 0h1v1.15h-1zm7 0h1v1.15h-1zm8 0h1v1.15h-1zm7 0h1v1.15h-1zm7 0h1v1.15h-1zm7 0h1v1.15h-1zm7 0h1v1.15h-1zm7 0h1v1.15h-1zm7 0h1v1.15h-1zm7 0h1v1.15h-1zm7 0h1v1.15h-1zm7 0h1v1.15h-1zm7 0h1v1.15h-1zm7 0h1v1.15h-1zm7 0h1v1.15h-1zm7 0h1v1.15h-1zm8 0h1v1.15h-1zm7 0h1v1.15h-1zm7 0h1v1.15h-1zm7 0h1v1.15h-1zm7 0h1v1.15h-1zm7 0h1v1.15h-1zM11 379h1v1.15h-1zm7 0h1v1.15h-1zm7 0h1v1.15h-1zm7 0h1v1.15h-1zm7 0h1v1.15h-1zm7 0h1v1.15h-1zm7 0h1v1.15h-1zm7 0h1v1.15h-1zm8 0h1v1.15h-1zm7 0h1v1.15h-1zm7 0h1v1.15h-1zm7 0h1v1.15h-1zm7 0h1v1.15h-1zm7 0h1v1.15h-1zm7 0h1v1.15h-1zm7 0h1v1.15h-1zm7 0h1v1.15h-1zm7 0h1v1.15h-1zm7 0h1v1.15h-1zm7 0h1v1.15h-1zm7 0h1v1.15h-1zm7 0h1v1.15h-1zm8 0h1v1.15h-1zm7 0h1v1.15h-1zm7 0h1v1.15h-1zm7 0h1v1.15h-1zm7 0h1v1.15h-1zm7 0h1v1.15h-1zm7 0h1v1.15h-1zm7 0h1v1.15h-1zm7 0h1v1.15h-1zm7 0h1v1.15h-1zm7 0h1v1.15h-1zm7 0h1v1.15h-1zm7 0h1v1.15h-1zm7 0h1v1.15h-1zm8 0h1v1.15h-1zm7 0h1v1.15h-1zm7 0h1v1.15h-1zm7 0h1v1.15h-1zm7 0h1v1.15h-1zm7 0h1v1.15h-1zm7 0h1v1.15h-1zm7 0h1v1.15h-1zm7 0h1v1.15h-1zm7 0h1v1.15h-1zm7 0h1v1.15h-1zm7 0h1v1.15h-1zm7 0h1v1.15h-1zm7 0h1v1.15h-1zm8 0h1v1.15h-1zm7 0h1v1.15h-1zm7 0h1v1.15h-1zm7 0h1v1.15h-1zm7 0h1v1.15h-1zm7 0h1v1.15h-1zm7 0h1v1.15h-1zm7 0h1v1.15h-1zm7 0h1v1.15h-1zm7 0h1v1.15h-1zm7 0h1v1.15h-1zm7 0h1v1.15h-1zm7 0h1v1.15h-1zm7 0h1v1.15h-1zm8 0h1v1.15h-1zm7 0h1v1.15h-1zm7 0h1v1.15h-1zm7 0h1v1.15h-1zm7 0h1v1.15h-1zm7 0h1v1.15h-1zM11 386h1v1.15h-1zm7 0h1v1.15h-1zm7 0h1v1.15h-1zm7 0h1v1.15h-1zm7 0h1v1.15h-1zm7 0h1v1.15h-1zm7 0h1v1.15h-1zm7 0h1v1.15h-1zm8 0h1v1.15h-1zm7 0h1v1.15h-1zm7 0h1v1.15h-1zm7 0h1v1.15h-1zm7 0h1v1.15h-1zm7 0h1v1.15h-1zm7 0h1v1.15h-1zm7 0h1v1.15h-1zm7 0h1v1.15h-1zm7 0h1v1.15h-1zm7 0h1v1.15h-1zm7 0h1v1.15h-1zm7 0h1v1.15h-1zm7 0h1v1.15h-1zm8 0h1v1.15h-1zm7 0h1v1.15h-1zm7 0h1v1.15h-1zm7 0h1v1.15h-1zm7 0h1v1.15h-1zm7 0h1v1.15h-1zm7 0h1v1.15h-1zm7 0h1v1.15h-1zm7 0h1v1.15h-1zm7 0h1v1.15h-1zm7 0h1v1.15h-1zm7 0h1v1.15h-1zm7 0h1v1.15h-1zm7 0h1v1.15h-1zm8 0h1v1.15h-1zm7 0h1v1.15h-1zm7 0h1v1.15h-1zm7 0h1v1.15h-1zm7 0h1v1.15h-1zm7 0h1v1.15h-1zm7 0h1v1.15h-1zm7 0h1v1.15h-1zm7 0h1v1.15h-1zm7 0h1v1.15h-1zm7 0h1v1.15h-1zm7 0h1v1.15h-1zm7 0h1v1.15h-1zm7 0h1v1.15h-1zm8 0h1v1.15h-1zm7 0h1v1.15h-1zm7 0h1v1.15h-1zm7 0h1v1.15h-1zm7 0h1v1.15h-1zm7 0h1v1.15h-1zm7 0h1v1.15h-1zm7 0h1v1.15h-1zm7 0h1v1.15h-1zm7 0h1v1.15h-1zm7 0h1v1.15h-1zm7 0h1v1.15h-1zm7 0h1v1.15h-1zm7 0h1v1.15h-1zm8 0h1v1.15h-1zm7 0h1v1.15h-1zm7 0h1v1.15h-1zm7 0h1v1.15h-1zm7 0h1v1.15h-1zm7 0h1v1.15h-1zM11 393h1v1.15h-1zm7 0h1v1.15h-1zm7 0h1v1.15h-1zm7 0h1v1.15h-1zm7 0h1v1.15h-1zm7 0h1v1.15h-1zm7 0h1v1.15h-1zm7 0h1v1.15h-1zm8 0h1v1.15h-1zm7 0h1v1.15h-1zm7 0h1v1.15h-1zm7 0h1v1.15h-1zm7 0h1v1.15h-1zm7 0h1v1.15h-1zm7 0h1v1.15h-1zm7 0h1v1.15h-1zm7 0h1v1.15h-1zm7 0h1v1.15h-1zm7 0h1v1.15h-1zm7 0h1v1.15h-1zm7 0h1v1.15h-1zm7 0h1v1.15h-1zm8 0h1v1.15h-1zm7 0h1v1.15h-1zm7 0h1v1.15h-1zm7 0h1v1.15h-1zm7 0h1v1.15h-1zm7 0h1v1.15h-1zm7 0h1v1.15h-1zm7 0h1v1.15h-1zm7 0h1v1.15h-1zm7 0h1v1.15h-1zm7 0h1v1.15h-1zm7 0h1v1.15h-1zm7 0h1v1.15h-1zm7 0h1v1.15h-1zm8 0h1v1.15h-1zm7 0h1v1.15h-1zm7 0h1v1.15h-1zm7 0h1v1.15h-1zm7 0h1v1.15h-1zm7 0h1v1.15h-1zm7 0h1v1.15h-1zm7 0h1v1.15h-1zm7 0h1v1.15h-1zm7 0h1v1.15h-1zm7 0h1v1.15h-1zm7 0h1v1.15h-1zm7 0h1v1.15h-1zm7 0h1v1.15h-1zm8 0h1v1.15h-1zm7 0h1v1.15h-1zm7 0h1v1.15h-1zm7 0h1v1.15h-1zm7 0h1v1.15h-1zm7 0h1v1.15h-1zm7 0h1v1.15h-1zm7 0h1v1.15h-1zm7 0h1v1.15h-1zm7 0h1v1.15h-1zm7 0h1v1.15h-1zm7 0h1v1.15h-1zm7 0h1v1.15h-1zm7 0h1v1.15h-1zm8 0h1v1.15h-1zm7 0h1v1.15h-1zm7 0h1v1.15h-1zm7 0h1v1.15h-1zm7 0h1v1.15h-1zm7 0h1v1.15h-1zM11 400h1v1.15h-1zm7 0h1v1.15h-1zm7 0h1v1.15h-1zm7 0h1v1.15h-1zm7 0h1v1.15h-1zm7 0h1v1.15h-1zm7 0h1v1.15h-1zm7 0h1v1.15h-1zm8 0h1v1.15h-1zm7 0h1v1.15h-1zm7 0h1v1.15h-1zm7 0h1v1.15h-1zm7 0h1v1.15h-1zm7 0h1v1.15h-1zm7 0h1v1.15h-1zm7 0h1v1.15h-1zm7 0h1v1.15h-1zm7 0h1v1.15h-1zm7 0h1v1.15h-1zm7 0h1v1.15h-1zm7 0h1v1.15h-1zm7 0h1v1.15h-1zm8 0h1v1.15h-1zm7 0h1v1.15h-1zm7 0h1v1.15h-1zm7 0h1v1.15h-1zm7 0h1v1.15h-1zm7 0h1v1.15h-1zm7 0h1v1.15h-1zm7 0h1v1.15h-1zm7 0h1v1.15h-1zm7 0h1v1.15h-1zm7 0h1v1.15h-1zm7 0h1v1.15h-1zm7 0h1v1.15h-1zm7 0h1v1.15h-1zm8 0h1v1.15h-1zm7 0h1v1.15h-1zm7 0h1v1.15h-1zm7 0h1v1.15h-1zm7 0h1v1.15h-1zm7 0h1v1.15h-1zm7 0h1v1.15h-1zm7 0h1v1.15h-1zm7 0h1v1.15h-1zm7 0h1v1.15h-1zm7 0h1v1.15h-1zm7 0h1v1.15h-1zm7 0h1v1.15h-1zm7 0h1v1.15h-1zm8 0h1v1.15h-1zm7 0h1v1.15h-1zm7 0h1v1.15h-1zm7 0h1v1.15h-1zm7 0h1v1.15h-1zm7 0h1v1.15h-1zm7 0h1v1.15h-1zm7 0h1v1.15h-1zm7 0h1v1.15h-1zm7 0h1v1.15h-1zm7 0h1v1.15h-1zm7 0h1v1.15h-1zm7 0h1v1.15h-1zm7 0h1v1.15h-1zm8 0h1v1.15h-1zm7 0h1v1.15h-1zm7 0h1v1.15h-1zm7 0h1v1.15h-1zm7 0h1v1.15h-1zm7 0h1v1.15h-1zM11 407h1v1.15h-1zm7 0h1v1.15h-1zm7 0h1v1.15h-1zm7 0h1v1.15h-1zm7 0h1v1.15h-1zm7 0h1v1.15h-1zm7 0h1v1.15h-1zm7 0h1v1.15h-1zm8 0h1v1.15h-1zm7 0h1v1.15h-1zm7 0h1v1.15h-1zm7 0h1v1.15h-1zm7 0h1v1.15h-1zm7 0h1v1.15h-1zm7 0h1v1.15h-1zm7 0h1v1.15h-1zm7 0h1v1.15h-1zm7 0h1v1.15h-1zm7 0h1v1.15h-1zm7 0h1v1.15h-1zm7 0h1v1.15h-1zm7 0h1v1.15h-1zm8 0h1v1.15h-1zm7 0h1v1.15h-1zm7 0h1v1.15h-1zm7 0h1v1.15h-1zm7 0h1v1.15h-1zm7 0h1v1.15h-1zm7 0h1v1.15h-1zm7 0h1v1.15h-1zm7 0h1v1.15h-1zm7 0h1v1.15h-1zm7 0h1v1.15h-1zm7 0h1v1.15h-1zm7 0h1v1.15h-1zm7 0h1v1.15h-1zm8 0h1v1.15h-1zm7 0h1v1.15h-1zm7 0h1v1.15h-1zm7 0h1v1.15h-1zm7 0h1v1.15h-1zm7 0h1v1.15h-1zm7 0h1v1.15h-1zm7 0h1v1.15h-1zm7 0h1v1.15h-1zm7 0h1v1.15h-1zm7 0h1v1.15h-1zm7 0h1v1.15h-1zm7 0h1v1.15h-1zm7 0h1v1.15h-1zm8 0h1v1.15h-1zm7 0h1v1.15h-1zm7 0h1v1.15h-1zm7 0h1v1.15h-1zm7 0h1v1.15h-1zm7 0h1v1.15h-1zm7 0h1v1.15h-1zm7 0h1v1.15h-1zm7 0h1v1.15h-1zm7 0h1v1.15h-1zm7 0h1v1.15h-1zm7 0h1v1.15h-1zm7 0h1v1.15h-1zm7 0h1v1.15h-1zm8 0h1v1.15h-1zm7 0h1v1.15h-1zm7 0h1v1.15h-1zm7 0h1v1.15h-1zm7 0h1v1.15h-1zm7 0h1v1.15h-1zM11 414h1v1.15h-1zm7 0h1v1.15h-1zm7 0h1v1.15h-1zm7 0h1v1.15h-1zm7 0h1v1.15h-1zm7 0h1v1.15h-1zm7 0h1v1.15h-1zm7 0h1v1.15h-1zm8 0h1v1.15h-1zm7 0h1v1.15h-1zm7 0h1v1.15h-1zm7 0h1v1.15h-1zm7 0h1v1.15h-1zm7 0h1v1.15h-1zm7 0h1v1.15h-1zm7 0h1v1.15h-1zm7 0h1v1.15h-1zm7 0h1v1.15h-1zm7 0h1v1.15h-1zm7 0h1v1.15h-1zm7 0h1v1.15h-1zm7 0h1v1.15h-1zm8 0h1v1.15h-1zm7 0h1v1.15h-1zm7 0h1v1.15h-1zm7 0h1v1.15h-1zm7 0h1v1.15h-1zm7 0h1v1.15h-1zm7 0h1v1.15h-1zm7 0h1v1.15h-1zm7 0h1v1.15h-1zm7 0h1v1.15h-1zm7 0h1v1.15h-1zm7 0h1v1.15h-1zm7 0h1v1.15h-1zm7 0h1v1.15h-1zm8 0h1v1.15h-1zm7 0h1v1.15h-1zm7 0h1v1.15h-1zm7 0h1v1.15h-1zm7 0h1v1.15h-1zm7 0h1v1.15h-1zm7 0h1v1.15h-1zm7 0h1v1.15h-1zm7 0h1v1.15h-1zm7 0h1v1.15h-1zm7 0h1v1.15h-1zm7 0h1v1.15h-1zm7 0h1v1.15h-1zm7 0h1v1.15h-1zm8 0h1v1.15h-1zm7 0h1v1.15h-1zm7 0h1v1.15h-1zm7 0h1v1.15h-1zm7 0h1v1.15h-1zm7 0h1v1.15h-1zm7 0h1v1.15h-1zm7 0h1v1.15h-1zm7 0h1v1.15h-1zm7 0h1v1.15h-1zm7 0h1v1.15h-1zm7 0h1v1.15h-1zm7 0h1v1.15h-1zm7 0h1v1.15h-1zm8 0h1v1.15h-1zm7 0h1v1.15h-1zm7 0h1v1.15h-1zm7 0h1v1.15h-1zm7 0h1v1.15h-1zm7 0h1v1.15h-1zM11 421h1v1.15h-1zm7 0h1v1.15h-1zm7 0h1v1.15h-1zm7 0h1v1.15h-1zm7 0h1v1.15h-1zm7 0h1v1.15h-1zm7 0h1v1.15h-1zm7 0h1v1.15h-1zm8 0h1v1.15h-1zm7 0h1v1.15h-1zm7 0h1v1.15h-1zm7 0h1v1.15h-1zm7 0h1v1.15h-1zm7 0h1v1.15h-1zm7 0h1v1.15h-1zm7 0h1v1.15h-1zm7 0h1v1.15h-1zm7 0h1v1.15h-1zm7 0h1v1.15h-1zm7 0h1v1.15h-1zm7 0h1v1.15h-1zm7 0h1v1.15h-1zm8 0h1v1.15h-1zm7 0h1v1.15h-1zm7 0h1v1.15h-1zm7 0h1v1.15h-1zm7 0h1v1.15h-1zm7 0h1v1.15h-1zm7 0h1v1.15h-1zm7 0h1v1.15h-1zm7 0h1v1.15h-1zm7 0h1v1.15h-1zm7 0h1v1.15h-1zm7 0h1v1.15h-1zm7 0h1v1.15h-1zm7 0h1v1.15h-1zm8 0h1v1.15h-1zm7 0h1v1.15h-1zm7 0h1v1.15h-1zm7 0h1v1.15h-1zm7 0h1v1.15h-1zm7 0h1v1.15h-1zm7 0h1v1.15h-1zm7 0h1v1.15h-1zm7 0h1v1.15h-1zm7 0h1v1.15h-1zm7 0h1v1.15h-1zm7 0h1v1.15h-1zm7 0h1v1.15h-1zm7 0h1v1.15h-1zm8 0h1v1.15h-1zm7 0h1v1.15h-1zm7 0h1v1.15h-1zm7 0h1v1.15h-1zm7 0h1v1.15h-1zm7 0h1v1.15h-1zm7 0h1v1.15h-1zm7 0h1v1.15h-1zm7 0h1v1.15h-1zm7 0h1v1.15h-1zm7 0h1v1.15h-1zm7 0h1v1.15h-1zm7 0h1v1.15h-1zm7 0h1v1.15h-1zm8 0h1v1.15h-1zm7 0h1v1.15h-1zm7 0h1v1.15h-1zm7 0h1v1.15h-1zm7 0h1v1.15h-1zm7 0h1v1.15h-1zM11 428h1v1.15h-1zm7 0h1v1.15h-1zm7 0h1v1.15h-1zm7 0h1v1.15h-1zm7 0h1v1.15h-1zm7 0h1v1.15h-1zm7 0h1v1.15h-1zm7 0h1v1.15h-1zm8 0h1v1.15h-1zm7 0h1v1.15h-1zm7 0h1v1.15h-1zm7 0h1v1.15h-1zm7 0h1v1.15h-1zm7 0h1v1.15h-1zm7 0h1v1.15h-1zm7 0h1v1.15h-1zm7 0h1v1.15h-1zm7 0h1v1.15h-1zm7 0h1v1.15h-1zm7 0h1v1.15h-1zm7 0h1v1.15h-1zm7 0h1v1.15h-1zm8 0h1v1.15h-1zm7 0h1v1.15h-1zm7 0h1v1.15h-1zm7 0h1v1.15h-1zm7 0h1v1.15h-1zm7 0h1v1.15h-1zm7 0h1v1.15h-1zm7 0h1v1.15h-1zm7 0h1v1.15h-1zm7 0h1v1.15h-1zm7 0h1v1.15h-1zm7 0h1v1.15h-1zm7 0h1v1.15h-1zm7 0h1v1.15h-1zm8 0h1v1.15h-1zm7 0h1v1.15h-1zm7 0h1v1.15h-1zm7 0h1v1.15h-1zm7 0h1v1.15h-1zm7 0h1v1.15h-1zm7 0h1v1.15h-1zm7 0h1v1.15h-1zm7 0h1v1.15h-1zm7 0h1v1.15h-1zm7 0h1v1.15h-1zm7 0h1v1.15h-1zm7 0h1v1.15h-1zm7 0h1v1.15h-1zm8 0h1v1.15h-1zm7 0h1v1.15h-1zm7 0h1v1.15h-1zm7 0h1v1.15h-1zm7 0h1v1.15h-1zm7 0h1v1.15h-1zm7 0h1v1.15h-1zm7 0h1v1.15h-1zm7 0h1v1.15h-1zm7 0h1v1.15h-1zm7 0h1v1.15h-1zm7 0h1v1.15h-1zm7 0h1v1.15h-1zm7 0h1v1.15h-1zm8 0h1v1.15h-1zm7 0h1v1.15h-1zm7 0h1v1.15h-1zm7 0h1v1.15h-1zm7 0h1v1.15h-1zm7 0h1v1.15h-1zM11 435h1v1.15h-1zm7 0h1v1.15h-1zm7 0h1v1.15h-1zm7 0h1v1.15h-1zm7 0h1v1.15h-1zm7 0h1v1.15h-1zm7 0h1v1.15h-1zm7 0h1v1.15h-1zm8 0h1v1.15h-1zm7 0h1v1.15h-1zm7 0h1v1.15h-1zm7 0h1v1.15h-1zm7 0h1v1.15h-1zm7 0h1v1.15h-1zm7 0h1v1.15h-1zm7 0h1v1.15h-1zm7 0h1v1.15h-1zm7 0h1v1.15h-1zm7 0h1v1.15h-1zm7 0h1v1.15h-1zm7 0h1v1.15h-1zm7 0h1v1.15h-1zm8 0h1v1.15h-1zm7 0h1v1.15h-1zm7 0h1v1.15h-1zm7 0h1v1.15h-1zm7 0h1v1.15h-1zm7 0h1v1.15h-1zm7 0h1v1.15h-1zm7 0h1v1.15h-1zm7 0h1v1.15h-1zm7 0h1v1.15h-1zm7 0h1v1.15h-1zm7 0h1v1.15h-1zm7 0h1v1.15h-1zm7 0h1v1.15h-1zm8 0h1v1.15h-1zm7 0h1v1.15h-1zm7 0h1v1.15h-1zm7 0h1v1.15h-1zm7 0h1v1.15h-1zm7 0h1v1.15h-1zm7 0h1v1.15h-1zm7 0h1v1.15h-1zm7 0h1v1.15h-1zm7 0h1v1.15h-1zm7 0h1v1.15h-1zm7 0h1v1.15h-1zm7 0h1v1.15h-1zm7 0h1v1.15h-1zm8 0h1v1.15h-1zm7 0h1v1.15h-1zm7 0h1v1.15h-1zm7 0h1v1.15h-1zm7 0h1v1.15h-1zm7 0h1v1.15h-1zm7 0h1v1.15h-1zm7 0h1v1.15h-1zm7 0h1v1.15h-1zm7 0h1v1.15h-1zm7 0h1v1.15h-1zm7 0h1v1.15h-1zm7 0h1v1.15h-1zm7 0h1v1.15h-1zm8 0h1v1.15h-1zm7 0h1v1.15h-1zm7 0h1v1.15h-1zm7 0h1v1.15h-1zm7 0h1v1.15h-1zm7 0h1v1.15h-1zM11 442h1v1.15h-1zm7 0h1v1.15h-1zm7 0h1v1.15h-1zm7 0h1v1.15h-1zm7 0h1v1.15h-1zm7 0h1v1.15h-1zm7 0h1v1.15h-1zm7 0h1v1.15h-1zm8 0h1v1.15h-1zm7 0h1v1.15h-1zm7 0h1v1.15h-1zm7 0h1v1.15h-1zm7 0h1v1.15h-1zm7 0h1v1.15h-1zm7 0h1v1.15h-1zm7 0h1v1.15h-1zm7 0h1v1.15h-1zm7 0h1v1.15h-1zm7 0h1v1.15h-1zm7 0h1v1.15h-1zm7 0h1v1.15h-1zm7 0h1v1.15h-1zm8 0h1v1.15h-1zm7 0h1v1.15h-1zm7 0h1v1.15h-1zm7 0h1v1.15h-1zm7 0h1v1.15h-1zm7 0h1v1.15h-1zm7 0h1v1.15h-1zm7 0h1v1.15h-1zm7 0h1v1.15h-1zm7 0h1v1.15h-1zm7 0h1v1.15h-1zm7 0h1v1.15h-1zm7 0h1v1.15h-1zm7 0h1v1.15h-1zm8 0h1v1.15h-1zm7 0h1v1.15h-1zm7 0h1v1.15h-1zm7 0h1v1.15h-1zm7 0h1v1.15h-1zm7 0h1v1.15h-1zm7 0h1v1.15h-1zm7 0h1v1.15h-1zm7 0h1v1.15h-1zm7 0h1v1.15h-1zm7 0h1v1.15h-1zm7 0h1v1.15h-1zm7 0h1v1.15h-1zm7 0h1v1.15h-1zm8 0h1v1.15h-1zm7 0h1v1.15h-1zm7 0h1v1.15h-1zm7 0h1v1.15h-1zm7 0h1v1.15h-1zm7 0h1v1.15h-1zm7 0h1v1.15h-1zm7 0h1v1.15h-1zm7 0h1v1.15h-1zm7 0h1v1.15h-1zm7 0h1v1.15h-1zm7 0h1v1.15h-1zm7 0h1v1.15h-1zm7 0h1v1.15h-1zm8 0h1v1.15h-1zm7 0h1v1.15h-1zm7 0h1v1.15h-1zm7 0h1v1.15h-1zm7 0h1v1.15h-1zm7 0h1v1.15h-1zM11 449h1v1.15h-1zm7 0h1v1.15h-1zm7 0h1v1.15h-1zm7 0h1v1.15h-1zm7 0h1v1.15h-1zm7 0h1v1.15h-1zm7 0h1v1.15h-1zm7 0h1v1.15h-1zm8 0h1v1.15h-1zm7 0h1v1.15h-1zm7 0h1v1.15h-1zm7 0h1v1.15h-1zm7 0h1v1.15h-1zm7 0h1v1.15h-1zm7 0h1v1.15h-1zm7 0h1v1.15h-1zm7 0h1v1.15h-1zm7 0h1v1.15h-1zm7 0h1v1.15h-1zm7 0h1v1.15h-1zm7 0h1v1.15h-1zm7 0h1v1.15h-1zm8 0h1v1.15h-1zm7 0h1v1.15h-1zm7 0h1v1.15h-1zm7 0h1v1.15h-1zm7 0h1v1.15h-1zm7 0h1v1.15h-1zm7 0h1v1.15h-1zm7 0h1v1.15h-1zm7 0h1v1.15h-1zm7 0h1v1.15h-1zm7 0h1v1.15h-1zm7 0h1v1.15h-1zm7 0h1v1.15h-1zm7 0h1v1.15h-1zm8 0h1v1.15h-1zm7 0h1v1.15h-1zm7 0h1v1.15h-1zm7 0h1v1.15h-1zm7 0h1v1.15h-1zm7 0h1v1.15h-1zm7 0h1v1.15h-1zm7 0h1v1.15h-1zm7 0h1v1.15h-1zm7 0h1v1.15h-1zm7 0h1v1.15h-1zm7 0h1v1.15h-1zm7 0h1v1.15h-1zm7 0h1v1.15h-1zm8 0h1v1.15h-1zm7 0h1v1.15h-1zm7 0h1v1.15h-1zm7 0h1v1.15h-1zm7 0h1v1.15h-1zm7 0h1v1.15h-1zm7 0h1v1.15h-1zm7 0h1v1.15h-1zm7 0h1v1.15h-1zm7 0h1v1.15h-1zm7 0h1v1.15h-1zm7 0h1v1.15h-1zm7 0h1v1.15h-1zm7 0h1v1.15h-1zm8 0h1v1.15h-1zm7 0h1v1.15h-1zm7 0h1v1.15h-1zm7 0h1v1.15h-1zm7 0h1v1.15h-1zm7 0h1v1.15h-1zM11 456h1v1.15h-1zm7 0h1v1.15h-1zm7 0h1v1.15h-1zm7 0h1v1.15h-1zm7 0h1v1.15h-1zm7 0h1v1.15h-1zm7 0h1v1.15h-1zm7 0h1v1.15h-1zm8 0h1v1.15h-1zm7 0h1v1.15h-1zm7 0h1v1.15h-1zm7 0h1v1.15h-1zm7 0h1v1.15h-1zm7 0h1v1.15h-1zm7 0h1v1.15h-1zm7 0h1v1.15h-1zm7 0h1v1.15h-1zm7 0h1v1.15h-1zm7 0h1v1.15h-1zm7 0h1v1.15h-1zm7 0h1v1.15h-1zm7 0h1v1.15h-1zm8 0h1v1.15h-1zm7 0h1v1.15h-1zm7 0h1v1.15h-1zm7 0h1v1.15h-1zm7 0h1v1.15h-1zm7 0h1v1.15h-1zm7 0h1v1.15h-1zm7 0h1v1.15h-1zm7 0h1v1.15h-1zm7 0h1v1.15h-1zm7 0h1v1.15h-1zm7 0h1v1.15h-1zm7 0h1v1.15h-1zm7 0h1v1.15h-1zm8 0h1v1.15h-1zm7 0h1v1.15h-1zm7 0h1v1.15h-1zm7 0h1v1.15h-1zm7 0h1v1.15h-1zm7 0h1v1.15h-1zm7 0h1v1.15h-1zm7 0h1v1.15h-1zm7 0h1v1.15h-1zm7 0h1v1.15h-1zm7 0h1v1.15h-1zm7 0h1v1.15h-1zm7 0h1v1.15h-1zm7 0h1v1.15h-1zm8 0h1v1.15h-1zm7 0h1v1.15h-1zm7 0h1v1.15h-1zm7 0h1v1.15h-1zm7 0h1v1.15h-1zm7 0h1v1.15h-1zm7 0h1v1.15h-1zm7 0h1v1.15h-1zm7 0h1v1.15h-1zm7 0h1v1.15h-1zm7 0h1v1.15h-1zm7 0h1v1.15h-1zm7 0h1v1.15h-1zm7 0h1v1.15h-1zm8 0h1v1.15h-1zm7 0h1v1.15h-1zm7 0h1v1.15h-1zm7 0h1v1.15h-1zm7 0h1v1.15h-1zm7 0h1v1.15h-1zM11 463h1v1.15h-1zm7 0h1v1.15h-1zm7 0h1v1.15h-1zm7 0h1v1.15h-1zm7 0h1v1.15h-1zm7 0h1v1.15h-1zm7 0h1v1.15h-1zm7 0h1v1.15h-1zm8 0h1v1.15h-1zm7 0h1v1.15h-1zm7 0h1v1.15h-1zm7 0h1v1.15h-1zm7 0h1v1.15h-1zm7 0h1v1.15h-1zm7 0h1v1.15h-1zm7 0h1v1.15h-1zm7 0h1v1.15h-1zm7 0h1v1.15h-1zm7 0h1v1.15h-1zm7 0h1v1.15h-1zm7 0h1v1.15h-1zm7 0h1v1.15h-1zm8 0h1v1.15h-1zm7 0h1v1.15h-1zm7 0h1v1.15h-1zm7 0h1v1.15h-1zm7 0h1v1.15h-1zm7 0h1v1.15h-1zm7 0h1v1.15h-1zm7 0h1v1.15h-1zm7 0h1v1.15h-1zm7 0h1v1.15h-1zm7 0h1v1.15h-1zm7 0h1v1.15h-1zm7 0h1v1.15h-1zm7 0h1v1.15h-1zm8 0h1v1.15h-1zm7 0h1v1.15h-1zm7 0h1v1.15h-1zm7 0h1v1.15h-1zm7 0h1v1.15h-1zm7 0h1v1.15h-1zm7 0h1v1.15h-1zm7 0h1v1.15h-1zm7 0h1v1.15h-1zm7 0h1v1.15h-1zm7 0h1v1.15h-1zm7 0h1v1.15h-1zm7 0h1v1.15h-1zm7 0h1v1.15h-1zm8 0h1v1.15h-1zm7 0h1v1.15h-1zm7 0h1v1.15h-1zm7 0h1v1.15h-1zm7 0h1v1.15h-1zm7 0h1v1.15h-1zm7 0h1v1.15h-1zm7 0h1v1.15h-1zm7 0h1v1.15h-1zm7 0h1v1.15h-1zm7 0h1v1.15h-1zm7 0h1v1.15h-1zm7 0h1v1.15h-1zm7 0h1v1.15h-1zm8 0h1v1.15h-1zm7 0h1v1.15h-1zm7 0h1v1.15h-1zm7 0h1v1.15h-1zm7 0h1v1.15h-1zm7 0h1v1.15h-1zM11 470h1v1.15h-1zm7 0h1v1.15h-1zm7 0h1v1.15h-1zm7 0h1v1.15h-1zm7 0h1v1.15h-1zm7 0h1v1.15h-1zm7 0h1v1.15h-1zm7 0h1v1.15h-1zm8 0h1v1.15h-1zm7 0h1v1.15h-1zm7 0h1v1.15h-1zm7 0h1v1.15h-1zm7 0h1v1.15h-1zm7 0h1v1.15h-1zm7 0h1v1.15h-1zm7 0h1v1.15h-1zm7 0h1v1.15h-1zm7 0h1v1.15h-1zm7 0h1v1.15h-1zm7 0h1v1.15h-1zm7 0h1v1.15h-1zm7 0h1v1.15h-1zm8 0h1v1.15h-1zm7 0h1v1.15h-1zm7 0h1v1.15h-1zm7 0h1v1.15h-1zm7 0h1v1.15h-1zm7 0h1v1.15h-1zm7 0h1v1.15h-1zm7 0h1v1.15h-1zm7 0h1v1.15h-1zm7 0h1v1.15h-1zm7 0h1v1.15h-1zm7 0h1v1.15h-1zm7 0h1v1.15h-1zm7 0h1v1.15h-1zm8 0h1v1.15h-1zm7 0h1v1.15h-1zm7 0h1v1.15h-1zm7 0h1v1.15h-1zm7 0h1v1.15h-1zm7 0h1v1.15h-1zm7 0h1v1.15h-1zm7 0h1v1.15h-1zm7 0h1v1.15h-1zm7 0h1v1.15h-1zm7 0h1v1.15h-1zm7 0h1v1.15h-1zm7 0h1v1.15h-1zm7 0h1v1.15h-1zm8 0h1v1.15h-1zm7 0h1v1.15h-1zm7 0h1v1.15h-1zm7 0h1v1.15h-1zm7 0h1v1.15h-1zm7 0h1v1.15h-1zm7 0h1v1.15h-1zm7 0h1v1.15h-1zm7 0h1v1.15h-1zm7 0h1v1.15h-1zm7 0h1v1.15h-1zm7 0h1v1.15h-1zm7 0h1v1.15h-1zm7 0h1v1.15h-1zm8 0h1v1.15h-1zm7 0h1v1.15h-1zm7 0h1v1.15h-1zm7 0h1v1.15h-1zm7 0h1v1.15h-1zm7 0h1v1.15h-1zM11 478h1v1.15h-1zm7 0h1v1.15h-1zm7 0h1v1.15h-1zm7 0h1v1.15h-1zm7 0h1v1.15h-1zm7 0h1v1.15h-1zm7 0h1v1.15h-1zm7 0h1v1.15h-1zm8 0h1v1.15h-1zm7 0h1v1.15h-1zm7 0h1v1.15h-1zm7 0h1v1.15h-1zm7 0h1v1.15h-1zm7 0h1v1.15h-1zm7 0h1v1.15h-1zm7 0h1v1.15h-1zm7 0h1v1.15h-1zm7 0h1v1.15h-1zm7 0h1v1.15h-1zm7 0h1v1.15h-1zm7 0h1v1.15h-1zm7 0h1v1.15h-1zm8 0h1v1.15h-1zm7 0h1v1.15h-1zm7 0h1v1.15h-1zm7 0h1v1.15h-1zm7 0h1v1.15h-1zm7 0h1v1.15h-1zm7 0h1v1.15h-1zm7 0h1v1.15h-1zm7 0h1v1.15h-1zm7 0h1v1.15h-1zm7 0h1v1.15h-1zm7 0h1v1.15h-1zm7 0h1v1.15h-1zm7 0h1v1.15h-1zm8 0h1v1.15h-1zm7 0h1v1.15h-1zm7 0h1v1.15h-1zm7 0h1v1.15h-1zm7 0h1v1.15h-1zm7 0h1v1.15h-1zm7 0h1v1.15h-1zm7 0h1v1.15h-1zm7 0h1v1.15h-1zm7 0h1v1.15h-1zm7 0h1v1.15h-1zm7 0h1v1.15h-1zm7 0h1v1.15h-1zm7 0h1v1.15h-1zm8 0h1v1.15h-1zm7 0h1v1.15h-1zm7 0h1v1.15h-1zm7 0h1v1.15h-1zm7 0h1v1.15h-1zm7 0h1v1.15h-1zm7 0h1v1.15h-1zm7 0h1v1.15h-1zm7 0h1v1.15h-1zm7 0h1v1.15h-1zm7 0h1v1.15h-1zm7 0h1v1.15h-1zm7 0h1v1.15h-1zm7 0h1v1.15h-1zm8 0h1v1.15h-1zm7 0h1v1.15h-1zm7 0h1v1.15h-1zm7 0h1v1.15h-1zm7 0h1v1.15h-1zm7 0h1v1.15h-1zM11 485h1v1.15h-1zm7 0h1v1.15h-1zm7 0h1v1.15h-1zm7 0h1v1.15h-1zm7 0h1v1.15h-1zm7 0h1v1.15h-1zm7 0h1v1.15h-1zm7 0h1v1.15h-1zm8 0h1v1.15h-1zm7 0h1v1.15h-1zm7 0h1v1.15h-1zm7 0h1v1.15h-1zm7 0h1v1.15h-1zm7 0h1v1.15h-1zm7 0h1v1.15h-1zm7 0h1v1.15h-1zm7 0h1v1.15h-1zm7 0h1v1.15h-1zm7 0h1v1.15h-1zm7 0h1v1.15h-1zm7 0h1v1.15h-1zm7 0h1v1.15h-1zm8 0h1v1.15h-1zm7 0h1v1.15h-1zm7 0h1v1.15h-1zm7 0h1v1.15h-1zm7 0h1v1.15h-1zm7 0h1v1.15h-1zm7 0h1v1.15h-1zm7 0h1v1.15h-1zm7 0h1v1.15h-1zm7 0h1v1.15h-1zm7 0h1v1.15h-1zm7 0h1v1.15h-1zm7 0h1v1.15h-1zm7 0h1v1.15h-1zm8 0h1v1.15h-1zm7 0h1v1.15h-1zm7 0h1v1.15h-1zm7 0h1v1.15h-1zm7 0h1v1.15h-1zm7 0h1v1.15h-1zm7 0h1v1.15h-1zm7 0h1v1.15h-1zm7 0h1v1.15h-1zm7 0h1v1.15h-1zm7 0h1v1.15h-1zm7 0h1v1.15h-1zm7 0h1v1.15h-1zm7 0h1v1.15h-1zm8 0h1v1.15h-1zm7 0h1v1.15h-1zm7 0h1v1.15h-1zm7 0h1v1.15h-1zm7 0h1v1.15h-1zm7 0h1v1.15h-1zm7 0h1v1.15h-1zm7 0h1v1.15h-1zm7 0h1v1.15h-1zm7 0h1v1.15h-1zm7 0h1v1.15h-1zm7 0h1v1.15h-1zm7 0h1v1.15h-1zm7 0h1v1.15h-1zm8 0h1v1.15h-1zm7 0h1v1.15h-1zm7 0h1v1.15h-1zm7 0h1v1.15h-1zm7 0h1v1.15h-1zm7 0h1v1.15h-1z" fill="#939393"/>
<path d="M167.00 457.00 L167.00 393.50" fill="none" stroke="#d96a6a" stroke-width="1.3"/>
<path d="M167.00 378.90 L167.00 327.00" fill="none" stroke="#d96a6a" stroke-width="1.3"/>
<path d="M167.00 289.00 L167.00 167.00 L510.00 167.00" fill="none" stroke="#d96a6a" stroke-width="1.3"/>
<path d="M167.00 289.00 L167.00 294.00" fill="none" stroke="#5e5e5e" stroke-width="1"/>
<path d="M167.00 322.00 L167.00 327.00" fill="none" stroke="#5e5e5e" stroke-width="1"/>
<path d="M167.00 294.00 L170.80 296.33 L163.20 301.00 L170.80 305.67 L163.20 310.33 L170.80 315.00 L163.20 319.67 L167.00 322.00" fill="none" stroke="#303030" stroke-width="1.0"/>
<path d="M167.00 386.00 L167.00 394.00" fill="none" stroke="#5e5e5e" stroke-width="1"/>
<path d="M167.00 414.00 L167.00 421.00" fill="none" stroke="#5e5e5e" stroke-width="1"/>
<path d="M167.00 394.00 L170.80 395.67 L163.20 399.00 L170.80 402.33 L163.20 405.67 L170.80 409.00 L163.20 412.33 L167.00 414.00" fill="none" stroke="#303030" stroke-width="1.0"/>
<path d="M167.00 421.00 L167.00 457.00" fill="none" stroke="#d96a6a" stroke-width="1.3"/>
<path d="M223.50 167.00 L223.50 180.70" fill="none" stroke="#d96a6a" stroke-width="1.3"/>
<path d="M223.50 180.70 L223.50 188.00" fill="none" stroke="#5e5e5e" stroke-width="1"/>
<path d="M223.50 188.00 L227.30 189.79 L219.70 193.38 L227.30 196.96 L219.70 200.54 L227.30 204.12 L219.70 207.71 L223.50 209.50" fill="none" stroke="#303030" stroke-width="1.0"/>
<path d="M223.50 209.50 L223.50 216.00" fill="none" stroke="#5e5e5e" stroke-width="1"/>
<path d="M223.50 216.00 L223.50 287.00" fill="none" stroke="#d96a6a" stroke-width="1.3"/>
<path d="M223.50 287.00 L223.50 294.00" fill="none" stroke="#5e5e5e" stroke-width="1"/>
<path d="M223.50 321.60 L223.50 328.00" fill="none" stroke="#5e5e5e" stroke-width="1"/>
<path d="M223.50 328.00 L223.50 336.80" fill="none" stroke="#d96a6a" stroke-width="1.3"/>
<path d="M223.50 336.80 L430.00 336.80" fill="none" stroke="#d96a6a" stroke-width="1.3"/>
<path d="M430.00 336.80 L445.00 336.80" fill="none" stroke="#5e5e5e" stroke-width="1.2"/>
<path d="M449.50 336.80 L463.50 336.80" fill="none" stroke="#5e5e5e" stroke-width="1.2"/>
<path d="M463.50 336.80 L478.50 336.80 L478.50 386.00" fill="none" stroke="#d96a6a" stroke-width="1.3"/>
<path d="M478.50 386.00 L478.50 393.00" fill="none" stroke="#5e5e5e" stroke-width="1"/>
<path d="M478.50 393.00 L482.30 394.71 L474.70 398.12 L482.30 401.54 L474.70 404.96 L482.30 408.38 L474.70 411.79 L478.50 413.50" fill="none" stroke="#303030" stroke-width="1.0"/>
<path d="M478.50 413.50 L478.50 420.00" fill="none" stroke="#5e5e5e" stroke-width="1"/>
<path d="M478.50 420.00 L478.50 457.00" fill="none" stroke="#d96a6a" stroke-width="1.3"/>
<path d="M445 329V344M449.8 329V344" stroke="#111" stroke-width="1.8"/>
<path d="M386.50 336.80 L386.50 237.50 L287.50 237.50 L287.50 116.80" fill="none" stroke="#d96a6a" stroke-width="1.3"/>
<path d="M259.50 116.80 L259.50 237.50 L241.00 237.50" fill="none" stroke="#d96a6a" stroke-width="1.3"/>
<path d="M301.50 336.80 L301.50 344.00" fill="none" stroke="#d96a6a" stroke-width="1.3"/>
<path d="M301.50 344.00 L301.50 350.50" fill="none" stroke="#5e5e5e" stroke-width="1"/>
<path d="M301.50 378.70 L301.50 385.00" fill="none" stroke="#5e5e5e" stroke-width="1"/>
<path d="M301.50 385.00 L301.50 421.50 L223.50 421.50" fill="none" stroke="#d96a6a" stroke-width="1.3"/>
<path d="M223.50 336.80 L223.50 365.10 L216.60 365.10" fill="none" stroke="#2a2ac8" stroke-width="1.1"/>
<path d="M223.50 378.50 L216.60 378.50" fill="none" stroke="#2a2ac8" stroke-width="1.1"/>
<path d="M223.50 371.50 L216.60 371.50" fill="none" stroke="#2a2ac8" stroke-width="1.1"/>
<path d="M223.50 371.50 L223.50 400.30" fill="none" stroke="#2a2ac8" stroke-width="1.1"/>
<path d="M223.50 400.30 L223.50 470.00" fill="none" stroke="#d96a6a" stroke-width="1.3"/>
<path d="M223.50 470.00 L223.50 478.50" fill="none" stroke="#5e5e5e" stroke-width="1"/>
<path d="M215.5 478.5H231.5M219 482H228M221.5 485.3H225.5" stroke="#404040" stroke-width="1"/>
<circle cx="221.6" cy="371.5" r="12.2" fill="none" stroke="#2a2ac8" stroke-width="1"/>
<path d="M216 361.5V367.5M216 369V374M216 375.5V381.5M213 362V381.2" stroke="#2a2ac8" stroke-width="1.1"/>
<path d="M217.2 371.5L221 369.3V373.7Z" fill="#2a2ac8"/>
<path d="M33.00 379.00 L82.90 379.00" fill="none" stroke="#d96a6a" stroke-width="1.3"/>
<path d="M82.90 379.00 L98.10 379.00" fill="none" stroke="#5e5e5e" stroke-width="1.2"/>
<path d="M102.30 379.00 L116.70 379.00" fill="none" stroke="#5e5e5e" stroke-width="1.2"/>
<path d="M116.70 379.00 L203.80 379.00" fill="none" stroke="#d96a6a" stroke-width="1.3"/>
<path d="M203.80 379.00 L213.00 379.00" fill="none" stroke="#2a2ac8" stroke-width="1.1"/>
<path d="M97.7 371.8V386M102.9 371.8V386" stroke="#111" stroke-width="1.8"/>
<path d="M33.00 379.00 L33.00 408.40" fill="none" stroke="#d96a6a" stroke-width="1.3"/>
<path d="M33.00 408.40 L33.00 414.10" fill="none" stroke="#5e5e5e" stroke-width="1"/>
<path d="M33.00 441.30 L33.00 450.00" fill="none" stroke="#5e5e5e" stroke-width="1"/>
<path d="M33.00 450.00 L33.00 457.00 L508.50 457.00" fill="none" stroke="#d96a6a" stroke-width="1.3"/>
<circle cx="32.4" cy="427.7" r="13.5" fill="none" stroke="#404040" stroke-width="1"/>
<path d="M26.5 427.5Q29.5 422.5 32.5 427.5T38.5 427.5" fill="none" stroke="#404040" stroke-width="1"/>
<path d="M29.5 419H35.5M32.5 416V422M29.5 436H35.5" stroke="#404040" stroke-width="1"/>
<path d="M221 247L230.5 238.2L233 241.5Z" fill="#111"/>
<path d="M230.5 239.5L233.6 232.8L236 236L238.5 233.5L242 237.6H259" fill="none" stroke="#202020" stroke-width="0.9"/>
<circle cx="223.7" cy="251.2" r="5.3" fill="#fff" stroke="#8a0c0c" stroke-width="2.3"/>
<path d="M221.2 249.5Q223.7 248 226.2 249.5L223.7 254Z" fill="#22b022"/>
<circle cx="223.50" cy="167.00" r="2.3" fill="#e00808"/>
<circle cx="223.50" cy="336.80" r="2.3" fill="#e00808"/>
<circle cx="301.50" cy="336.80" r="2.3" fill="#e00808"/>
<circle cx="386.50" cy="336.80" r="2.3" fill="#e00808"/>
<circle cx="167.00" cy="379.00" r="2.3" fill="#e00808"/>
<circle cx="167.00" cy="457.00" r="2.3" fill="#e00808"/>
<circle cx="223.50" cy="457.00" r="2.3" fill="#e00808"/>
<circle cx="223.50" cy="421.50" r="2.3" fill="#e00808"/>
<circle cx="478.50" cy="457.00" r="2.3" fill="#e00808"/>
<rect x="196" y="294" width="63.1" height="27.6" fill="#848484"/>
<rect x="207.1" y="301" width="42.9" height="13.8" fill="#000"/>
<text x="210.5" y="312" font-family="Liberation Sans" font-size="10.5" font-weight="bold" fill="#2bd12b">3.508m</text>
<circle cx="201.5" cy="298.5" r="1.6" fill="#2c2"/><circle cx="201.5" cy="316" r="1.3" fill="#2c2"/><path d="M252 310L254 305.5L256 310Z" fill="#3a3"/>
<rect x="273.1" y="350.4" width="63.5" height="28.3" fill="#848484"/>
<rect x="284.8" y="357.2" width="41.4" height="15.2" fill="#000"/>
<text x="288" y="369" font-family="Liberation Sans" font-size="10.5" font-weight="bold" fill="#2bd12b">4.984</text>
<circle cx="279.5" cy="357" r="1.8" fill="#2c2"/><circle cx="279" cy="375" r="1.3" fill="#2c2"/><path d="M329 364L331 370L333 364" fill="none" stroke="#3a3" stroke-width="1"/>
<rect x="251.8" y="53.5" width="77.9" height="56" fill="#b7d6b1" stroke="#3c3c3c" stroke-width="1"/>
<rect x="254.3" y="55.4" width="49.1" height="35.6" fill="#b3b3b3" stroke="#f4f4f4" stroke-width="1"/>
<path d="M257.1 72.5 L258.1 70.0 L259.1 67.5 L260.1 65.1 L261.2 62.9 L262.2 61.0 L263.2 59.3 L264.2 58.0 L265.2 57.0 L266.2 56.4 L267.2 56.2 L268.2 56.4 L269.2 57.0 L270.3 58.0 L271.3 59.3 L272.3 61.0 L273.3 62.9 L274.3 65.1 L275.3 67.5 L276.3 70.0 L277.4 72.5 L278.4 75.0 L279.4 77.5 L280.4 79.9 L281.4 82.1 L282.4 84.0 L283.4 85.7 L284.4 87.0 L285.5 88.0 L286.5 88.6 L287.5 88.8 L288.5 88.6 L289.5 88.0 L290.5 87.0 L291.5 85.7 L292.5 84.0 L293.6 82.1 L294.6 79.9 L295.6 77.5 L296.6 75.0 L297.6 72.5" fill="none" stroke="#1a1a1a" stroke-width="1"/>
<path d="M257.1 72.5 L258.1 71.0 L259.1 69.6 L260.1 68.2 L261.2 66.9 L262.2 65.8 L263.2 64.8 L264.2 64.0 L265.2 63.5 L266.2 63.1 L267.2 63.0 L268.2 63.1 L269.2 63.5 L270.3 64.0 L271.3 64.8 L272.3 65.8 L273.3 66.9 L274.3 68.2 L275.3 69.6 L276.3 71.0 L277.4 72.5 L278.4 74.0 L279.4 75.4 L280.4 76.8 L281.4 78.1 L282.4 79.2 L283.4 80.2 L284.4 81.0 L285.5 81.5 L286.5 81.9 L287.5 82.0 L288.5 81.9 L289.5 81.5 L290.5 81.0 L291.5 80.2 L292.5 79.2 L293.6 78.1 L294.6 76.8 L295.6 75.4 L296.6 74.0 L297.6 72.5" fill="none" stroke="#1a1a1a" stroke-width="0.9"/>
<path d="M259.5 103.7V116.8" stroke="#1a1a1a" stroke-width="1.1"/>
<circle cx="258.6" cy="103.7" r="2.9" fill="#111"/><circle cx="258.6" cy="103.7" r="1.5" fill="none" stroke="#ddd" stroke-width="0.6"/>
<text x="256.0" y="100" font-family="Liberation Sans" font-size="6" fill="#333">A</text>
<path d="M261.20000000000005 103.7H266.0V124.5" fill="none" stroke="#222" stroke-width="0.9"/>
<path d="M267.6 106.5H270.6M252.60000000000002 106H254.60000000000002" stroke="#333" stroke-width="0.7"/>
<path d="M287.79999999999995 103.7V116.8" stroke="#1a1a1a" stroke-width="1.1"/>
<circle cx="286.9" cy="103.7" r="2.9" fill="#111"/><circle cx="286.9" cy="103.7" r="1.5" fill="none" stroke="#ddd" stroke-width="0.6"/>
<text x="284.29999999999995" y="100" font-family="Liberation Sans" font-size="6" fill="#333">B</text>
<path d="M289.5 103.7H294.29999999999995V116.8" fill="none" stroke="#222" stroke-width="0.9"/>
<path d="M295.9 106.5H298.9M280.9 106H282.9" stroke="#333" stroke-width="0.7"/>
<path d="M260 124.2H273.5M262.2 126.9H270.5M264.2 129.5H268.3" stroke="#2a2a2a" stroke-width="1"/>
<circle cx="322.5" cy="81.3" r="2.6" fill="#222"/><circle cx="322.5" cy="81.3" r="1.2" fill="#777"/>
<path d="M325 82H337M322.5 84V88.5H337" fill="none" stroke="#333" stroke-width="0.9"/>
<text x="308.5" y="76" font-family="Liberation Sans" font-size="6.5" fill="#333">Ext Trig</text>
<text x="281.5" y="47.8" font-family="Liberation Mono" font-size="10.2" font-weight="bold" fill="#222" letter-spacing="0">XSC1</text>
<text x="225" y="226.4" font-family="Liberation Mono" font-size="10.2" font-weight="bold" fill="#222" letter-spacing="0">XCP1</text>
<text x="215.2" y="267.8" font-family="Liberation Mono" font-size="10.4" font-weight="bold" fill="#222" letter-spacing="0">1 mV/mA</text>
<text x="229.3" y="187.3" font-family="Liberation Sans" font-size="10.4" font-weight="bold" fill="#111" letter-spacing="0.08">R1</text>
<text x="229.3" y="201.8" font-family="Liberation Sans" font-size="10.4" font-weight="bold" fill="#111" letter-spacing="0.08">2kΩ</text>
<text x="172.5" y="301.7" font-family="Liberation Sans" font-size="10.4" font-weight="bold" fill="#111" letter-spacing="0.08">R2</text>
<text x="172.5" y="317.5" font-family="Liberation Sans" font-size="10.4" font-weight="bold" fill="#111" letter-spacing="0.08">400k</text>
<text x="260.5" y="298.8" font-family="Liberation Sans" font-size="10.4" font-weight="bold" fill="#111" letter-spacing="0.08">U1</text>
<text x="260.5" y="311.7" font-family="Liberation Sans" font-size="10.4" font-weight="bold" fill="#111" letter-spacing="0.08">DC&#160; 1e-009Ohm</text>
<text x="339" y="355.3" font-family="Liberation Sans" font-size="10.4" font-weight="bold" fill="#111" letter-spacing="0.08">U2</text>
<text x="339" y="368.3" font-family="Liberation Sans" font-size="10.4" font-weight="bold" fill="#111" letter-spacing="0.08">DC&#160; 10MOhm</text>
<text x="236.2" y="361.8" font-family="Liberation Sans" font-size="10" font-weight="bold" fill="#2a2ac8" letter-spacing="0.08">Q1</text>
<text x="236.4" y="374.0" font-family="Liberation Sans" font-size="10.4" font-weight="bold" fill="#2a2ac8" letter-spacing="0.08">2N7000</text>
<text x="93" y="365.9" font-family="Liberation Sans" font-size="10.4" font-weight="bold" fill="#111" letter-spacing="0.08">C1</text>
<text x="85.3" y="397.0" font-family="Liberation Sans" font-size="10.4" font-weight="bold" fill="#111" letter-spacing="0.08">100µF</text>
<text x="439.5" y="322.8" font-family="Liberation Sans" font-size="10.4" font-weight="bold" fill="#111" letter-spacing="0.08">C2</text>
<text x="431.8" y="354.3" font-family="Liberation Sans" font-size="10.4" font-weight="bold" fill="#111" letter-spacing="0.08">100µF</text>
<text x="172.5" y="393.0" font-family="Liberation Sans" font-size="10.4" font-weight="bold" fill="#111" letter-spacing="0.08">R3</text>
<text x="172.5" y="406.8" font-family="Liberation Sans" font-size="10.4" font-weight="bold" fill="#111" letter-spacing="0.08">93kΩ</text>
<text x="484" y="392.8" font-family="Liberation Sans" font-size="10.4" font-weight="bold" fill="#111" letter-spacing="0.08">R4</text>
<text x="484" y="406.8" font-family="Liberation Sans" font-size="10.4" font-weight="bold" fill="#111" letter-spacing="0.08">20k</text>
<text x="48.4" y="406.3" font-family="Liberation Sans" font-size="10.4" font-weight="bold" fill="#111" letter-spacing="0.08">V2</text>
<text x="48.1" y="420.0" font-family="Liberation Sans" font-size="10.4" font-weight="bold" fill="#111" letter-spacing="0.08">14.142mVpk</text>
<text x="48.1" y="431.8" font-family="Liberation Sans" font-size="10.4" font-weight="bold" fill="#111" letter-spacing="0.08">1kHz</text>
<text x="48.1" y="443.8" font-family="Liberation Sans" font-size="10.4" font-weight="bold" fill="#111" letter-spacing="0.08">0°</text>
  </g>
</svg>
<!-- scrollbar -->
<div class="a" style="left:4px;top:492px;width:498px;height:17px;background:#ececec"></div><div class="a" style="left:4px;top:492px;width:1.2px;height:12.5px;background:#707070"></div>
<div class="a" style="left:288px;top:496px;width:214px;height:4px;background:#8c8c8c"></div>
<div class="a" style="left:4px;top:504px;width:498px;height:1px;background:#f9f9f9"></div>
<div class="a" style="left:0;top:505px;width:502px;height:9px;background:#f0f0f0"></div>
<div class="a" style="left:134px;top:509px;width:368px;height:6px;border-left:1px solid #9a9a9a;border-top:1px solid #9a9a9a;background:#fafafa"></div>
<div class="a" style="left:5px;top:511px;width:10px;height:5px;border:1.3px solid #555;border-bottom:none;border-radius:2px 2px 0 0"></div>
<div class="a" style="left:21.5px;top:512.5px;width:1px;height:2px;background:#666"></div>
<div class="a" style="left:120px;top:511.5px;width:1px;height:3px;background:#666"></div>

<!-- scope window -->
<div class="a" style="left:502px;top:0;width:578px;height:9px;background:#f3f3f3"></div>
<div class="a" style="left:502px;top:8.5px;width:578px;height:2px;background:#6a6a6a"></div>
<svg class="a" style="left:505px;top:0" width="40" height="4" viewBox="0 0 40 4"><path d="M5 0h4v1.6h-4zM12 0h4v1.2h-4zM19 0h5v1.2h-5zM26 0h5v1.2h-5z" fill="#333"/></svg>
<div class="a" style="left:476px;top:0;width:25px;height:514px;background:linear-gradient(90deg,rgba(0,0,0,0),rgba(0,0,0,0.035) 55%,rgba(0,0,0,0.1))"></div>
<div class="a" style="left:501px;top:8px;width:3px;height:416px;background:linear-gradient(90deg,#d2d2d2,#8a8a8a 60%,#505050)"></div>
<div class="a" style="left:504px;top:10px;width:576px;height:412px;background:#000"></div>
<div class="a" style="left:502px;top:422px;width:578px;height:2px;background:#a0a0a0"></div>
<div class="a" style="left:504px;top:424px;width:576px;height:90px;background:#f0f0f0"></div>
<svg class="a" style="left:0;top:0" width="1080" height="424" viewBox="0 0 1080 424">
<line x1="509" y1="15.6" x2="1080" y2="15.6" stroke="#7a7a7a" stroke-width="1.2"/>
<line x1="509" y1="417.5" x2="1080" y2="417.5" stroke="#c8c8c8" stroke-width="1.2"/>
<line x1="579.4" y1="16" x2="579.4" y2="417" stroke="#9c9c9c" stroke-width="1" stroke-dasharray="2 2"/>
<line x1="649.8" y1="16" x2="649.8" y2="417" stroke="#9c9c9c" stroke-width="1" stroke-dasharray="2 2"/>
<line x1="720.2" y1="16" x2="720.2" y2="417" stroke="#9c9c9c" stroke-width="1" stroke-dasharray="2 2"/>
<line x1="790.6" y1="16" x2="790.6" y2="417" stroke="#9c9c9c" stroke-width="1" stroke-dasharray="2 2"/>
<line x1="861.0" y1="16" x2="861.0" y2="417" stroke="#9c9c9c" stroke-width="1" stroke-dasharray="2 2"/>
<line x1="931.4" y1="16" x2="931.4" y2="417" stroke="#9c9c9c" stroke-width="1" stroke-dasharray="2 2"/>
<line x1="1001.8" y1="16" x2="1001.8" y2="417" stroke="#9c9c9c" stroke-width="1" stroke-dasharray="2 2"/>
<line x1="1072.2" y1="16" x2="1072.2" y2="417" stroke="#9c9c9c" stroke-width="1" stroke-dasharray="2 2"/>
<line x1="509" y1="82.8" x2="1080" y2="82.8" stroke="#9c9c9c" stroke-width="1" stroke-dasharray="2 2"/>
<line x1="509" y1="149.7" x2="1080" y2="149.7" stroke="#9c9c9c" stroke-width="1" stroke-dasharray="2 2"/>
<line x1="506" y1="216.5" x2="1080" y2="216.5" stroke="#d0d0d0" stroke-width="1.1"/>
<path d="M509.0 212.5V220.5 M523.1 214.0V219.0 M537.2 214.0V219.0 M551.2 214.0V219.0 M565.3 214.0V219.0 M579.4 212.5V220.5 M593.5 214.0V219.0 M607.6 214.0V219.0 M621.6 214.0V219.0 M635.7 214.0V219.0 M649.8 212.5V220.5 M663.9 214.0V219.0 M678.0 214.0V219.0 M692.0 214.0V219.0 M706.1 214.0V219.0 M720.2 212.5V220.5 M734.3 214.0V219.0 M748.4 214.0V219.0 M762.4 214.0V219.0 M776.5 214.0V219.0 M790.6 212.5V220.5 M804.7 214.0V219.0 M818.8 214.0V219.0 M832.8 214.0V219.0 M846.9 214.0V219.0 M861.0 212.5V220.5 M875.1 214.0V219.0 M889.2 214.0V219.0 M903.2 214.0V219.0 M917.3 214.0V219.0 M931.4 212.5V220.5 M945.5 214.0V219.0 M959.6 214.0V219.0 M973.6 214.0V219.0 M987.7 214.0V219.0 M1001.8 212.5V220.5 M1015.9 214.0V219.0 M1030.0 214.0V219.0 M1044.0 214.0V219.0 M1058.1 214.0V219.0 M1072.2 212.5V220.5" stroke="#d0d0d0" stroke-width="1"/>
<line x1="509" y1="283.3" x2="1080" y2="283.3" stroke="#9c9c9c" stroke-width="1" stroke-dasharray="2 2"/>
<line x1="509" y1="350.1" x2="1080" y2="350.1" stroke="#9c9c9c" stroke-width="1" stroke-dasharray="2 2"/>
  <path d="M509.0 65.17 L510.5 62.74 L512.0 60.10 L513.5 57.28 L515.0 54.33 L516.5 51.31 L518.0 48.28 L519.5 45.28 L521.0 42.37 L522.5 39.60 L524.0 37.02 L525.5 34.68 L527.0 32.62 L528.5 30.88 L530.0 29.49 L531.5 28.46 L533.0 27.83 L534.5 27.60 L536.0 27.78 L537.5 28.36 L539.0 29.33 L540.5 30.68 L542.0 32.37 L543.5 34.39 L545.0 36.70 L546.5 39.24 L548.0 41.99 L549.5 44.88 L551.0 47.87 L552.5 50.91 L554.0 53.93 L555.5 56.89 L557.0 59.73 L558.5 62.40 L560.0 64.86 L561.5 67.05 L563.0 68.95 L564.5 70.51 L566.0 71.71 L567.5 72.52 L569.0 72.94 L570.5 72.96 L572.0 72.56 L573.5 71.77 L575.0 70.60 L576.5 69.06 L578.0 67.19 L579.5 65.01 L581.0 62.57 L582.5 59.91 L584.0 57.08 L585.5 54.13 L587.0 51.11 L588.5 48.08 L590.0 45.08 L591.5 42.18 L593.0 39.42 L594.5 36.86 L596.0 34.54 L597.5 32.50 L599.0 30.78 L600.5 29.41 L602.0 28.41 L603.5 27.80 L605.0 27.60 L606.5 27.80 L608.0 28.41 L609.5 29.41 L611.0 30.78 L612.5 32.50 L614.0 34.54 L615.5 36.86 L617.0 39.42 L618.5 42.18 L620.0 45.08 L621.5 48.08 L623.0 51.11 L624.5 54.13 L626.0 57.08 L627.5 59.91 L629.0 62.57 L630.5 65.01 L632.0 67.19 L633.5 69.06 L635.0 70.60 L636.5 71.77 L638.0 72.56 L639.5 72.96 L641.0 72.94 L642.5 72.52 L644.0 71.71 L645.5 70.51 L647.0 68.95 L648.5 67.05 L650.0 64.86 L651.5 62.40 L653.0 59.73 L654.5 56.89 L656.0 53.93 L657.5 50.91 L659.0 47.87 L660.5 44.88 L662.0 41.99 L663.5 39.24 L665.0 36.70 L666.5 34.39 L668.0 32.37 L669.5 30.68 L671.0 29.33 L672.5 28.36 L674.0 27.78 L675.5 27.60 L677.0 27.83 L678.5 28.46 L680.0 29.49 L681.5 30.88 L683.0 32.62 L684.5 34.68 L686.0 37.02 L687.5 39.60 L689.0 42.37 L690.5 45.28 L692.0 48.28 L693.5 51.31 L695.0 54.33 L696.5 57.28 L698.0 60.10 L699.5 62.74 L701.0 65.17 L702.5 67.32 L704.0 69.17 L705.5 70.69 L707.0 71.84 L708.5 72.60 L710.0 72.97 L711.5 72.93 L713.0 72.48 L714.5 71.64 L716.0 70.41 L717.5 68.83 L719.0 66.91 L720.5 64.70 L722.0 62.23 L723.5 59.55 L725.0 56.70 L726.5 53.73 L728.0 50.71 L729.5 47.67 L731.0 44.69 L732.5 41.80 L734.0 39.07 L735.5 36.53 L737.0 34.25 L738.5 32.25 L740.0 30.57 L741.5 29.25 L743.0 28.31 L744.5 27.75 L746.0 27.60 L747.5 27.86 L749.0 28.52 L750.5 29.57 L752.0 30.99 L753.5 32.75 L755.0 34.83 L756.5 37.19 L758.0 39.78 L759.5 42.56 L761.0 45.47 L762.5 48.48 L764.0 51.52 L765.5 54.53 L767.0 57.47 L768.5 60.28 L770.0 62.91 L771.5 65.32 L773.0 67.46 L774.5 69.29 L776.0 70.78 L777.5 71.90 L779.0 72.64 L780.5 72.98 L782.0 72.91 L783.5 72.44 L785.0 71.57 L786.5 70.32 L788.0 68.71 L789.5 66.78 L791.0 64.54 L792.5 62.06 L794.0 59.36 L795.5 56.50 L797.0 53.53 L798.5 50.50 L800.0 47.47 L801.5 44.49 L803.0 41.61 L804.5 38.89 L806.0 36.37 L807.5 34.11 L809.0 32.13 L810.5 30.47 L812.0 29.18 L813.5 28.26 L815.0 27.73 L816.5 27.61 L818.0 27.89 L819.5 28.58 L821.0 29.65 L822.5 31.09 L824.0 32.88 L825.5 34.98 L827.0 37.35 L828.5 39.96 L830.0 42.75 L831.5 45.67 L833.0 48.68 L834.5 51.72 L836.0 54.73 L837.5 57.66 L839.0 60.46 L840.5 63.08 L842.0 65.47 L843.5 67.59 L845.0 69.40 L846.5 70.86 L848.0 71.96 L849.5 72.67 L851.0 72.99 L852.5 72.89 L854.0 72.39 L855.5 71.50 L857.0 70.22 L858.5 68.59 L860.0 66.64 L861.5 64.39 L863.0 61.88 L864.5 59.17 L866.0 56.31 L867.5 53.33 L869.0 50.30 L870.5 47.27 L872.0 44.29 L873.5 41.43 L875.0 38.72 L876.5 36.21 L878.0 33.96 L879.5 32.01 L881.0 30.38 L882.5 29.10 L884.0 28.21 L885.5 27.71 L887.0 27.61 L888.5 27.93 L890.0 28.64 L891.5 29.74 L893.0 31.20 L894.5 33.01 L896.0 35.13 L897.5 37.52 L899.0 40.14 L900.5 42.94 L902.0 45.87 L903.5 48.88 L905.0 51.92 L906.5 54.93 L908.0 57.85 L909.5 60.64 L911.0 63.25 L912.5 65.62 L914.0 67.72 L915.5 69.51 L917.0 70.95 L918.5 72.02 L920.0 72.71 L921.5 72.99 L923.0 72.87 L924.5 72.34 L926.0 71.42 L927.5 70.13 L929.0 68.47 L930.5 66.49 L932.0 64.23 L933.5 61.71 L935.0 58.99 L936.5 56.11 L938.0 53.13 L939.5 50.10 L941.0 47.07 L942.5 44.10 L944.0 41.24 L945.5 38.54 L947.0 36.06 L948.5 33.82 L950.0 31.89 L951.5 30.28 L953.0 29.03 L954.5 28.16 L956.0 27.69 L957.5 27.62 L959.0 27.96 L960.5 28.70 L962.0 29.82 L963.5 31.31 L965.0 33.14 L966.5 35.28 L968.0 37.69 L969.5 40.32 L971.0 43.13 L972.5 46.07 L974.0 49.08 L975.5 52.12 L977.0 55.13 L978.5 58.04 L980.0 60.82 L981.5 63.41 L983.0 65.77 L984.5 67.85 L986.0 69.61 L987.5 71.03 L989.0 72.08 L990.5 72.74 L992.0 73.00 L993.5 72.85 L995.0 72.29 L996.5 71.35 L998.0 70.03 L999.5 68.35 L1001.0 66.35 L1002.5 64.07 L1004.0 61.53 L1005.5 58.80 L1007.0 55.91 L1008.5 52.93 L1010.0 49.89 L1011.5 46.87 L1013.0 43.90 L1014.5 41.05 L1016.0 38.37 L1017.5 35.90 L1019.0 33.69 L1020.5 31.77 L1022.0 30.19 L1023.5 28.96 L1025.0 28.12 L1026.5 27.67 L1028.0 27.63 L1029.5 28.00 L1031.0 28.76 L1032.5 29.91 L1034.0 31.43 L1035.5 33.28 L1037.0 35.43 L1038.5 37.86 L1040.0 40.50 L1041.5 43.32 L1043.0 46.27 L1044.5 49.29 L1046.0 52.32 L1047.5 55.32 L1049.0 58.23 L1050.5 61.00 L1052.0 63.58 L1053.5 65.92 L1055.0 67.98 L1056.5 69.72 L1058.0 71.11 L1059.5 72.14 L1061.0 72.77 L1062.5 73.00 L1064.0 72.82 L1065.5 72.24 L1067.0 71.27 L1068.5 69.92 L1070.0 68.23 L1071.5 66.21 L1073.0 63.90 L1074.5 61.36 L1076.0 58.61 L1077.5 55.72 L1079.0 52.73 L1080.5 49.69 L1082.0 46.67" fill="none" stroke="#a01818" stroke-width="0.95"/>
  <path d="M509.0 91.87 L510.5 93.06 L512.0 94.37 L513.5 95.76 L515.0 97.21 L516.5 98.70 L518.0 100.20 L519.5 101.68 L521.0 103.11 L522.5 104.48 L524.0 105.75 L525.5 106.90 L527.0 107.92 L528.5 108.78 L530.0 109.47 L531.5 109.97 L533.0 110.29 L534.5 110.40 L536.0 110.31 L537.5 110.03 L539.0 109.55 L540.5 108.88 L542.0 108.04 L543.5 107.05 L545.0 105.91 L546.5 104.66 L548.0 103.30 L549.5 101.87 L551.0 100.40 L552.5 98.90 L554.0 97.41 L555.5 95.95 L557.0 94.55 L558.5 93.23 L560.0 92.02 L561.5 90.93 L563.0 90.00 L564.5 89.23 L566.0 88.64 L567.5 88.24 L569.0 88.03 L570.5 88.02 L572.0 88.22 L573.5 88.61 L575.0 89.18 L576.5 89.94 L578.0 90.87 L579.5 91.94 L581.0 93.14 L582.5 94.46 L584.0 95.85 L585.5 97.31 L587.0 98.80 L588.5 100.30 L590.0 101.78 L591.5 103.21 L593.0 104.57 L594.5 105.83 L596.0 106.98 L597.5 107.98 L599.0 108.83 L600.5 109.51 L602.0 110.00 L603.5 110.30 L605.0 110.40 L606.5 110.30 L608.0 110.00 L609.5 109.51 L611.0 108.83 L612.5 107.98 L614.0 106.98 L615.5 105.83 L617.0 104.57 L618.5 103.21 L620.0 101.78 L621.5 100.30 L623.0 98.80 L624.5 97.31 L626.0 95.85 L627.5 94.46 L629.0 93.14 L630.5 91.94 L632.0 90.87 L633.5 89.94 L635.0 89.18 L636.5 88.61 L638.0 88.22 L639.5 88.02 L641.0 88.03 L642.5 88.24 L644.0 88.64 L645.5 89.23 L647.0 90.00 L648.5 90.93 L650.0 92.02 L651.5 93.23 L653.0 94.55 L654.5 95.95 L656.0 97.41 L657.5 98.90 L659.0 100.40 L660.5 101.87 L662.0 103.30 L663.5 104.66 L665.0 105.91 L666.5 107.05 L668.0 108.04 L669.5 108.88 L671.0 109.55 L672.5 110.03 L674.0 110.31 L675.5 110.40 L677.0 110.29 L678.5 109.97 L680.0 109.47 L681.5 108.78 L683.0 107.92 L684.5 106.90 L686.0 105.75 L687.5 104.48 L689.0 103.11 L690.5 101.68 L692.0 100.20 L693.5 98.70 L695.0 97.21 L696.5 95.76 L698.0 94.37 L699.5 93.06 L701.0 91.87 L702.5 90.80 L704.0 89.89 L705.5 89.14 L707.0 88.57 L708.5 88.20 L710.0 88.02 L711.5 88.04 L713.0 88.26 L714.5 88.67 L716.0 89.28 L717.5 90.06 L719.0 91.00 L720.5 92.09 L722.0 93.31 L723.5 94.64 L725.0 96.04 L726.5 97.51 L728.0 99.00 L729.5 100.50 L731.0 101.97 L732.5 103.39 L734.0 104.74 L735.5 105.99 L737.0 107.12 L738.5 108.11 L740.0 108.93 L741.5 109.59 L743.0 110.05 L744.5 110.32 L746.0 110.40 L747.5 110.27 L749.0 109.95 L750.5 109.43 L752.0 108.73 L753.5 107.86 L755.0 106.83 L756.5 105.67 L758.0 104.39 L759.5 103.02 L761.0 101.58 L762.5 100.10 L764.0 98.60 L765.5 97.11 L767.0 95.66 L768.5 94.28 L770.0 92.98 L771.5 91.79 L773.0 90.74 L774.5 89.83 L776.0 89.10 L777.5 88.54 L779.0 88.18 L780.5 88.01 L782.0 88.04 L783.5 88.28 L785.0 88.71 L786.5 89.32 L788.0 90.12 L789.5 91.07 L791.0 92.17 L792.5 93.40 L794.0 94.73 L795.5 96.14 L797.0 97.61 L798.5 99.10 L800.0 100.60 L801.5 102.07 L803.0 103.49 L804.5 104.83 L806.0 106.07 L807.5 107.19 L809.0 108.17 L810.5 108.98 L812.0 109.62 L813.5 110.08 L815.0 110.34 L816.5 110.40 L818.0 110.26 L819.5 109.92 L821.0 109.39 L822.5 108.68 L824.0 107.79 L825.5 106.76 L827.0 105.59 L828.5 104.30 L830.0 102.93 L831.5 101.48 L833.0 100.00 L834.5 98.50 L836.0 97.01 L837.5 95.57 L839.0 94.19 L840.5 92.89 L842.0 91.72 L843.5 90.67 L845.0 89.78 L846.5 89.05 L848.0 88.51 L849.5 88.16 L851.0 88.01 L852.5 88.05 L854.0 88.30 L855.5 88.74 L857.0 89.37 L858.5 90.17 L860.0 91.14 L861.5 92.25 L863.0 93.48 L864.5 94.82 L866.0 96.24 L867.5 97.71 L869.0 99.20 L870.5 100.69 L872.0 102.16 L873.5 103.58 L875.0 104.92 L876.5 106.15 L878.0 107.26 L879.5 108.23 L881.0 109.03 L882.5 109.66 L884.0 110.10 L885.5 110.35 L887.0 110.39 L888.5 110.24 L890.0 109.89 L891.5 109.35 L893.0 108.62 L894.5 107.73 L896.0 106.68 L897.5 105.51 L899.0 104.21 L900.5 102.83 L902.0 101.39 L903.5 99.90 L905.0 98.40 L906.5 96.92 L908.0 95.47 L909.5 94.10 L911.0 92.81 L912.5 91.64 L914.0 90.61 L915.5 89.72 L917.0 89.01 L918.5 88.48 L920.0 88.14 L921.5 88.00 L923.0 88.06 L924.5 88.32 L926.0 88.78 L927.5 89.42 L929.0 90.23 L930.5 91.21 L932.0 92.33 L933.5 93.57 L935.0 94.91 L936.5 96.33 L938.0 97.80 L939.5 99.30 L941.0 100.79 L942.5 102.26 L944.0 103.67 L945.5 105.00 L947.0 106.23 L948.5 107.33 L950.0 108.28 L951.5 109.08 L953.0 109.69 L954.5 110.12 L956.0 110.36 L957.5 110.39 L959.0 110.22 L960.5 109.86 L962.0 109.30 L963.5 108.57 L965.0 107.66 L966.5 106.61 L968.0 105.42 L969.5 104.12 L971.0 102.74 L972.5 101.29 L974.0 99.80 L975.5 98.30 L977.0 96.82 L978.5 95.38 L980.0 94.01 L981.5 92.73 L983.0 91.57 L984.5 90.54 L986.0 89.67 L987.5 88.97 L989.0 88.45 L990.5 88.13 L992.0 88.00 L993.5 88.08 L995.0 88.35 L996.5 88.81 L998.0 89.47 L999.5 90.29 L1001.0 91.28 L1002.5 92.41 L1004.0 93.66 L1005.5 95.01 L1007.0 96.43 L1008.5 97.90 L1010.0 99.40 L1011.5 100.89 L1013.0 102.36 L1014.5 103.76 L1016.0 105.09 L1017.5 106.31 L1019.0 107.40 L1020.5 108.34 L1022.0 109.12 L1023.5 109.73 L1025.0 110.14 L1026.5 110.36 L1028.0 110.38 L1029.5 110.20 L1031.0 109.83 L1032.5 109.26 L1034.0 108.51 L1035.5 107.60 L1037.0 106.53 L1038.5 105.34 L1040.0 104.03 L1041.5 102.64 L1043.0 101.19 L1044.5 99.70 L1046.0 98.20 L1047.5 96.72 L1049.0 95.29 L1050.5 93.92 L1052.0 92.65 L1053.5 91.50 L1055.0 90.48 L1056.5 89.62 L1058.0 88.93 L1059.5 88.43 L1061.0 88.11 L1062.5 88.00 L1064.0 88.09 L1065.5 88.37 L1067.0 88.85 L1068.5 89.52 L1070.0 90.36 L1071.5 91.35 L1073.0 92.49 L1074.5 93.74 L1076.0 95.10 L1077.5 96.53 L1079.0 98.00 L1080.5 99.50 L1082.0 100.99" fill="none" stroke="#a01818" stroke-width="0.95"/>
  <line x1="509.2" y1="16" x2="509.2" y2="418" stroke="#951818" stroke-width="1.4"/>
  <line x1="586.5" y1="16" x2="586.5" y2="418" stroke="#b4b45c" stroke-width="1"/>
  <path d="M505 12H513L509 16.5Z" fill="#33d6e6"/>
  <path d="M581 10.5H592L586.5 16.5Z" fill="#e3e320"/>
  <circle cx="509" cy="91.9" r="2.2" fill="none" stroke="#5fbfbf" stroke-width="1"/>
  <circle cx="586.5" cy="99" r="2.3" fill="none" stroke="#d0d040" stroke-width="0.9"/>
  <path d="M659.2 54.5L661.6 74.5L676.5 66Z" fill="#ffe81a" stroke="#ffe81a" stroke-width="1.5" stroke-linejoin="round"/>
  <line x1="667" y1="68" x2="708.5" y2="138.5" stroke="#ffe81a" stroke-width="5" stroke-linecap="round"/>
</svg>
<div class="a cn" lang="zh-CN" style="left:680px;top:166px;font-size:17px;letter-spacing:0.15px;line-height:22px;color:#e0da3a;white-space:nowrap">将观测点调整到输出电容前端，可以观察到这里<br>包含的直流分量，也就是电路中的5V</div>

<!-- bottom panel -->
<div class="a" style="left:503px;top:436.5px;width:42px;height:46px;border:1px solid #d4d4d4;background:#f0f0f0"></div>
<div class="a" style="left:546px;top:437px;width:534px;height:45px;background:#fff;border-left:1px solid #8a8a8a;border-top:1.5px solid #8a8a8a"></div>
<div class="tbl" style="left:506.5px;top:443.5px;font-size:8.6px">T1</div>
<div class="tbl" style="left:506.5px;top:455.5px;font-size:8.6px">T2</div>
<div class="a" style="left:505px;top:468.5px;width:38px;height:1px;background:#e2e2e2"></div><div class="tbl" style="left:506.5px;top:470px;font-size:8.6px">T2-T1</div>
<svg class="a" style="left:520px;top:441px" width="26" height="28" viewBox="0 0 26 28">
  <g fill="#fbfbfb" stroke="#e0e0e0" stroke-width="0.8"><rect x="1.5" y="1" width="10" height="12" rx="2"/><rect x="13.5" y="1" width="10" height="12" rx="2"/><rect x="1.5" y="14" width="10" height="12" rx="2"/><rect x="13.5" y="14" width="10" height="12" rx="2"/></g>
  <g fill="#111"><path d="M3.5 7L7 4V6H10V8H7V10Z"/><path d="M21.5 7L18 4V6H15V8H18V10Z"/><path d="M3.5 20L7 17V19H10V21H7V23Z"/><path d="M21.5 20L18 17V19H15V21H18V23Z"/></g>
</svg>
<div class="tbl" style="left:566px;top:437px;font-size:9.5px">时间</div>
<div class="tbl" style="left:622px;top:437px;font-size:9.5px">通道_A</div>
<div class="tbl" style="left:684px;top:437px;font-size:9.5px">通道_B</div>
<div class="tbl" style="left:560px;top:448px">1.345 s</div>
<div class="tbl" style="left:617px;top:448px">3.731 mV</div>
<div class="tbl" style="left:680px;top:448px">4.538 V</div>
<div class="tbl" style="left:560px;top:458.5px">1.346 s</div>
<div class="tbl" style="left:617px;top:458.5px">3.535 mV</div>
<div class="tbl" style="left:680px;top:458.5px">4.931 V</div>
<div class="tbl" style="left:557px;top:468.5px">1.099 ms</div>
<div class="tbl" style="left:610px;top:468.5px">-196.716 uV</div>
<div class="tbl" style="left:672px;top:468.5px">393.255 mV</div>
<!-- watermark -->
<svg class="a" style="left:715px;top:447px" width="50" height="40" viewBox="0 0 50 40">
  <ellipse cx="18.8" cy="17.6" rx="14" ry="11.6" fill="#a6a6a6"/><path d="M10.5 25L9.5 31.5L16.5 27.5Z" fill="#a6a6a6"/>
  <ellipse cx="32.2" cy="26.8" rx="12.8" ry="10.3" fill="#a6a6a6" stroke="#fafafa" stroke-width="1.6"/><path d="M39 34L41 38L34.5 36.5Z" fill="#a6a6a6"/>
  <circle cx="14" cy="14.7" r="1.8" fill="#fff"/><circle cx="23.8" cy="14.7" r="1.8" fill="#fff"/>
  <circle cx="28.5" cy="24.8" r="1.6" fill="#fff"/><circle cx="37" cy="24.8" r="1.6" fill="#fff"/>
</svg>
<div class="a cn" lang="zh-CN" style="left:768px;top:453px;font-size:31px;line-height:36px;color:#a8a8a8;white-space:nowrap">公众号</div><div class="a cn" style="left:870px;top:453px;font-size:31px;line-height:36px;color:#a8a8a8">·</div><div class="a cn" lang="zh-CN" style="left:894px;top:453px;font-size:31px;letter-spacing:-0.8px;line-height:36px;color:#a8a8a8;white-space:nowrap">电路一点通</div>
<!-- controls -->
<div class="a" style="left:504px;top:483px;width:576px;height:31px;background:rgba(240,240,240,0.92)"></div>
<div class="a" style="left:892px;top:493px;width:140px;height:1px;background:#dedede"></div>
<div class="tbl" style="left:507px;top:487px;font-size:9.5px">时基</div>
<div class="tbl" style="left:503px;top:500px;font-size:10px">标度:</div>
<div class="a" style="left:572px;top:498.5px;width:89px;height:15px;background:#fff;border:1px solid #e6e6e6;border-bottom:1.5px solid #4a88d8"></div><div class="a" style="left:574.5px;top:501.5px;width:1px;height:9px;background:#333"></div>
<div class="tbl" style="left:574.5px;top:501px;font-size:8.3px">1 ms/Div</div>
<svg class="a" style="left:662px;top:498px" width="12" height="16" viewBox="0 0 12 16">
  <rect x="0.5" y="0.5" width="11" height="7" fill="#f6f6f6" stroke="#cfcfcf"/><rect x="0.5" y="8.5" width="11" height="7" fill="#f6f6f6" stroke="#cfcfcf"/>
  <path d="M3.5 5.5L6 2.5L8.5 5.5ZM3.5 10.5L6 13.5L8.5 10.5Z" fill="#222"/>
</svg>
<div class="a" style="left:679px;top:485px;width:1px;height:29px;background:#d8d8d8"></div>
<div class="tbl" style="left:686px;top:487px;font-size:9.5px">通道 A</div>
<div class="tbl" style="left:684px;top:500px;font-size:10px">刻度:</div>
<div class="a" style="left:753.5px;top:498.5px;width:100px;height:16px;background:#fff;border:1px solid #e6e6e6"></div>
<div class="tbl" style="left:756px;top:501px;font-size:8.3px">2 mV/Div</div>
<div class="a" style="left:857px;top:485px;width:1px;height:29px;background:#d8d8d8"></div>
<div class="tbl" style="left:862px;top:487px;font-size:9.5px">通道 B</div>
<div class="tbl" style="left:859px;top:500px;font-size:10px">刻度:</div>
<div class="a" style="left:930px;top:498.5px;width:100px;height:16px;background:#fff;border:1px solid #e6e6e6"></div>
<div class="tbl" style="left:932.5px;top:501px;font-size:8.3px">2&nbsp; V/Div</div>
<div class="a" style="left:1033.5px;top:485px;width:1px;height:29px;background:#d8d8d8"></div>
<div class="tbl" style="left:1040px;top:486px;font-size:9.5px">触发</div>
<div class="tbl" style="left:1037px;top:500px;font-size:10px">边沿:</div>
<div class="a" style="left:1075px;top:502px;width:8px;height:14px;border:1px solid #5b8fd0;border-radius:2px;background:#e8f0fa"></div>
<div class="a cn" style="left:984.5px;top:496px;font-size:10.5px;color:rgba(150,150,150,0.85);white-space:nowrap">CSDN @南山维拉</div>
</body></html>
